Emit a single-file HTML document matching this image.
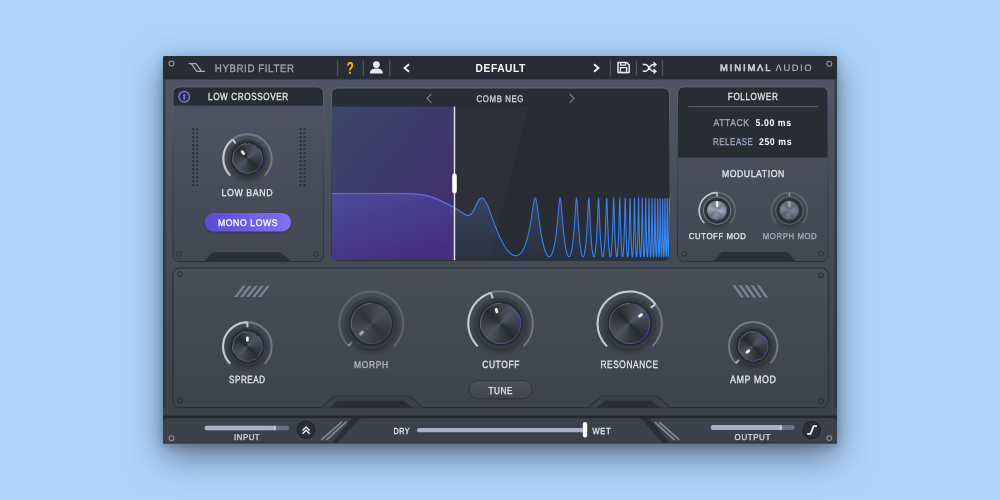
<!DOCTYPE html>
<html><head><meta charset="utf-8">
<style>
html,body{margin:0;padding:0;}
body{width:1000px;height:500px;overflow:hidden;background:#aed4fc;position:relative;font-family:"Liberation Sans",sans-serif;}
.shadow{position:absolute;left:163px;top:56px;width:674px;height:388px;border-radius:3px;box-shadow:0 12px 34px rgba(45,55,70,0.62),0 3px 8px rgba(40,50,65,0.3);}
svg{position:absolute;left:0;top:0;will-change:transform;}
.cap{position:absolute;border-radius:50%;}
text{font-family:"Liberation Sans",sans-serif;text-rendering:geometricPrecision;}
</style></head><body>
<div class="shadow"></div>
<svg width="1000" height="500" viewBox="0 0 1000 500"><defs>
<linearGradient id="chassis" gradientUnits="userSpaceOnUse" x1="0" y1="79" x2="0" y2="443">
  <stop offset="0" stop-color="#4f5566"/><stop offset="0.3" stop-color="#474f5a"/><stop offset="0.5" stop-color="#434a55"/><stop offset="1" stop-color="#3a404a"/>
</linearGradient>
<linearGradient id="tuneG" x1="0" y1="0" x2="0" y2="1"><stop offset="0" stop-color="#4c515b"/><stop offset="1" stop-color="#40454e"/></linearGradient>
<linearGradient id="edgeG" x1="0" y1="0" x2="0" y2="1"><stop offset="0" stop-color="#60667a"/><stop offset="0.35" stop-color="#424855"/><stop offset="1" stop-color="#2c3038"/></linearGradient>
<linearGradient id="panelA" x1="0" y1="0" x2="0" y2="1">
  <stop offset="0" stop-color="#4e5464"/><stop offset="1" stop-color="#414753"/>
</linearGradient>
<linearGradient id="panelB" x1="0" y1="0" x2="0" y2="1">
  <stop offset="0" stop-color="#464e5a"/><stop offset="1" stop-color="#3d434e"/>
</linearGradient>
<linearGradient id="purp" x1="0" y1="0" x2="1" y2="1">
  <stop offset="0" stop-color="#3a4668"/><stop offset="1" stop-color="#422b6f"/>
</linearGradient>
<linearGradient id="purpFill" x1="0" y1="0" x2="0.6" y2="1">
  <stop offset="0" stop-color="#4a4c9c"/><stop offset="1" stop-color="#452f7c"/>
</linearGradient>
<linearGradient id="combFill" x1="0" y1="0" x2="0" y2="1">
  <stop offset="0" stop-color="#3a4f72" stop-opacity="0.7"/><stop offset="1" stop-color="#2a3b58" stop-opacity="0.3"/>
</linearGradient>
<linearGradient id="combStroke2" gradientUnits="userSpaceOnUse" x1="0" y1="196" x2="0" y2="260"><stop offset="0" stop-color="#4a78d8"/><stop offset="1" stop-color="#2c8cff"/></linearGradient>
<linearGradient id="combStroke" gradientUnits="userSpaceOnUse" x1="332" y1="190" x2="669" y2="262">
  <stop offset="0" stop-color="#6270e4"/><stop offset="0.36" stop-color="#5c74e0"/><stop offset="0.4" stop-color="#4a7ade"/><stop offset="1" stop-color="#2a8cff"/>
</linearGradient>
<linearGradient id="btnPurple" x1="0" y1="0" x2="1" y2="0">
  <stop offset="0" stop-color="#5a4ad8"/><stop offset="1" stop-color="#8272f0"/>
</linearGradient>

<filter id="blur3" x="-50%" y="-50%" width="200%" height="200%"><feGaussianBlur stdDeviation="2.2"/></filter>
<filter id="blur1" x="-50%" y="-50%" width="200%" height="200%"><feGaussianBlur stdDeviation="0.8"/></filter>
<radialGradient id="sockBig" cx="0.5" cy="0.45" r="0.5">
  <stop offset="0.8" stop-color="#2b2f35"/><stop offset="1" stop-color="#393e46"/>
</radialGradient>
</defs><rect x="163" y="56" width="674" height="387.6" rx="2" fill="url(#chassis)"/>
<rect x="163" y="56" width="674" height="23.5" rx="1.5" fill="#282c34"/>
<rect x="163" y="79" width="2.2" height="364" fill="#30343a" opacity="0.8"/>
<rect x="834.8" y="79" width="2.2" height="364" fill="#30343a" opacity="0.8"/>
<circle cx="171.5" cy="63.6" r="2.5" fill="#282c34" stroke="#9096a0" stroke-width="1.1"/>
<circle cx="829.3" cy="63.8" r="2.5" fill="#282c34" stroke="#9096a0" stroke-width="1.1"/>
<rect x="173" y="87" width="150.5" height="174.5" rx="6" fill="url(#panelA)" stroke="url(#edgeG)" stroke-width="1"/>
<path d="M173.5 105.6 V93 a5.5 5.5 0 0 1 5.5 -5.5 H317.5 a5.5 5.5 0 0 1 5.5 5.5 V105.8 Z" fill="#282c34"/>
<path d="M204 261 L213 252.2 H280.6 L291 261 Z" fill="#2c3036"/>
<circle cx="179" cy="254" r="2.3" fill="#474c55" stroke="#30343b" stroke-width="1.1"/>
<circle cx="316.2" cy="254" r="2.3" fill="#474c55" stroke="#30343b" stroke-width="1.1"/>
<rect x="192.4" y="128.3" width="1.8" height="1.8" fill="#24282d"/>
<rect x="192.4" y="132.3" width="1.8" height="1.8" fill="#24282d"/>
<rect x="192.4" y="136.3" width="1.8" height="1.8" fill="#24282d"/>
<rect x="192.4" y="140.3" width="1.8" height="1.8" fill="#24282d"/>
<rect x="192.4" y="144.3" width="1.8" height="1.8" fill="#24282d"/>
<rect x="192.4" y="148.3" width="1.8" height="1.8" fill="#24282d"/>
<rect x="192.4" y="152.3" width="1.8" height="1.8" fill="#24282d"/>
<rect x="192.4" y="156.3" width="1.8" height="1.8" fill="#24282d"/>
<rect x="192.4" y="160.3" width="1.8" height="1.8" fill="#24282d"/>
<rect x="192.4" y="164.3" width="1.8" height="1.8" fill="#24282d"/>
<rect x="192.4" y="168.3" width="1.8" height="1.8" fill="#24282d"/>
<rect x="192.4" y="172.3" width="1.8" height="1.8" fill="#24282d"/>
<rect x="192.4" y="176.3" width="1.8" height="1.8" fill="#24282d"/>
<rect x="192.4" y="180.3" width="1.8" height="1.8" fill="#24282d"/>
<rect x="192.4" y="184.3" width="1.8" height="1.8" fill="#24282d"/>
<rect x="196.4" y="128.3" width="1.8" height="1.8" fill="#24282d"/>
<rect x="196.4" y="132.3" width="1.8" height="1.8" fill="#24282d"/>
<rect x="196.4" y="136.3" width="1.8" height="1.8" fill="#24282d"/>
<rect x="196.4" y="140.3" width="1.8" height="1.8" fill="#24282d"/>
<rect x="196.4" y="144.3" width="1.8" height="1.8" fill="#24282d"/>
<rect x="196.4" y="148.3" width="1.8" height="1.8" fill="#24282d"/>
<rect x="196.4" y="152.3" width="1.8" height="1.8" fill="#24282d"/>
<rect x="196.4" y="156.3" width="1.8" height="1.8" fill="#24282d"/>
<rect x="196.4" y="160.3" width="1.8" height="1.8" fill="#24282d"/>
<rect x="196.4" y="164.3" width="1.8" height="1.8" fill="#24282d"/>
<rect x="196.4" y="168.3" width="1.8" height="1.8" fill="#24282d"/>
<rect x="196.4" y="172.3" width="1.8" height="1.8" fill="#24282d"/>
<rect x="196.4" y="176.3" width="1.8" height="1.8" fill="#24282d"/>
<rect x="196.4" y="180.3" width="1.8" height="1.8" fill="#24282d"/>
<rect x="196.4" y="184.3" width="1.8" height="1.8" fill="#24282d"/>
<rect x="299.6" y="128.3" width="1.8" height="1.8" fill="#24282d"/>
<rect x="299.6" y="132.3" width="1.8" height="1.8" fill="#24282d"/>
<rect x="299.6" y="136.3" width="1.8" height="1.8" fill="#24282d"/>
<rect x="299.6" y="140.3" width="1.8" height="1.8" fill="#24282d"/>
<rect x="299.6" y="144.3" width="1.8" height="1.8" fill="#24282d"/>
<rect x="299.6" y="148.3" width="1.8" height="1.8" fill="#24282d"/>
<rect x="299.6" y="152.3" width="1.8" height="1.8" fill="#24282d"/>
<rect x="299.6" y="156.3" width="1.8" height="1.8" fill="#24282d"/>
<rect x="299.6" y="160.3" width="1.8" height="1.8" fill="#24282d"/>
<rect x="299.6" y="164.3" width="1.8" height="1.8" fill="#24282d"/>
<rect x="299.6" y="168.3" width="1.8" height="1.8" fill="#24282d"/>
<rect x="299.6" y="172.3" width="1.8" height="1.8" fill="#24282d"/>
<rect x="299.6" y="176.3" width="1.8" height="1.8" fill="#24282d"/>
<rect x="299.6" y="180.3" width="1.8" height="1.8" fill="#24282d"/>
<rect x="299.6" y="184.3" width="1.8" height="1.8" fill="#24282d"/>
<rect x="303.6" y="128.3" width="1.8" height="1.8" fill="#24282d"/>
<rect x="303.6" y="132.3" width="1.8" height="1.8" fill="#24282d"/>
<rect x="303.6" y="136.3" width="1.8" height="1.8" fill="#24282d"/>
<rect x="303.6" y="140.3" width="1.8" height="1.8" fill="#24282d"/>
<rect x="303.6" y="144.3" width="1.8" height="1.8" fill="#24282d"/>
<rect x="303.6" y="148.3" width="1.8" height="1.8" fill="#24282d"/>
<rect x="303.6" y="152.3" width="1.8" height="1.8" fill="#24282d"/>
<rect x="303.6" y="156.3" width="1.8" height="1.8" fill="#24282d"/>
<rect x="303.6" y="160.3" width="1.8" height="1.8" fill="#24282d"/>
<rect x="303.6" y="164.3" width="1.8" height="1.8" fill="#24282d"/>
<rect x="303.6" y="168.3" width="1.8" height="1.8" fill="#24282d"/>
<rect x="303.6" y="172.3" width="1.8" height="1.8" fill="#24282d"/>
<rect x="303.6" y="176.3" width="1.8" height="1.8" fill="#24282d"/>
<rect x="303.6" y="180.3" width="1.8" height="1.8" fill="#24282d"/>
<rect x="303.6" y="184.3" width="1.8" height="1.8" fill="#24282d"/>
<rect x="331.5" y="88" width="338" height="172.5" rx="6" fill="#282c34" stroke="url(#edgeG)" stroke-width="1"/>
<path d="M332 106.6 H454.5 V260 H338 a6 6 0 0 1 -6 -6 Z" fill="url(#purp)"/>
<path d="M454.5 106.6 H528.6 L488.5 260 H454.5 Z" fill="#ffffff" opacity="0.025"/>
<rect x="677.5" y="87" width="150.5" height="174.5" rx="6" fill="url(#panelA)" stroke="url(#edgeG)" stroke-width="1"/>
<path d="M678 157.4 V93 a5.5 5.5 0 0 1 5.5 -5.5 H822 a5.5 5.5 0 0 1 5.5 5.5 V157.4 Z" fill="#282c34"/>
<rect x="688.4" y="106" width="129.6" height="1.2" fill="#565c6a"/>
<path d="M713 261 L722 252 H787 L796 261 Z" fill="#2c3036"/>
<circle cx="684.4" cy="253.8" r="2.3" fill="#474c55" stroke="#30343b" stroke-width="1.1"/>
<circle cx="820.8" cy="253.8" r="2.3" fill="#474c55" stroke="#30343b" stroke-width="1.1"/>
<rect x="172.8" y="268" width="655.5" height="139.6" rx="7" fill="url(#panelB)" stroke="#2c3037" stroke-width="1.2"/>
<path d="M320.8 408 L334.4 396 H409.6 L423.2 408 Z" fill="#3d424a" stroke="#2c3037" stroke-width="1.2"/>
<path d="M328.8 408 L337.6 400.8 H403.6 L413.6 408 Z" fill="#2a2e34"/>
<path d="M588 408 L601.6 396 H657 L670.6 408 Z" fill="#3d424a" stroke="#2c3037" stroke-width="1.2"/>
<path d="M596 408 L604.8 400.8 H651 L661 408 Z" fill="#2a2e34"/>
<circle cx="179.8" cy="274" r="2.3" fill="#464b54" stroke="#2c3037" stroke-width="1.1"/>
<circle cx="179.8" cy="400.5" r="2.3" fill="#40454e" stroke="#2c3037" stroke-width="1.1"/>
<circle cx="820.8" cy="275.3" r="2.3" fill="#464b54" stroke="#2c3037" stroke-width="1.1"/>
<circle cx="821" cy="401" r="2.3" fill="#40454e" stroke="#2c3037" stroke-width="1.1"/>
<path d="M234.1 297 L242.9 285.8 H245.7 L236.9 297 Z" fill="#7c8596"/>
<path d="M240.15 297 L248.95 285.8 H251.75 L242.95 297 Z" fill="#7c8596"/>
<path d="M246.2 297 L255 285.8 H257.8 L249 297 Z" fill="#7c8596"/>
<path d="M252.25 297 L261.05 285.8 H263.85 L255.05 297 Z" fill="#7c8596"/>
<path d="M258.3 297 L267.1 285.8 H269.9 L261.1 297 Z" fill="#7c8596"/>
<path d="M732.6 285.2 L741.2 297.4 H744 L735.4 285.2 Z" fill="#7c8596"/>
<path d="M738.65 285.2 L747.25 297.4 H750.05 L741.45 285.2 Z" fill="#7c8596"/>
<path d="M744.7 285.2 L753.3 297.4 H756.1 L747.5 285.2 Z" fill="#7c8596"/>
<path d="M750.75 285.2 L759.35 297.4 H762.15 L753.55 285.2 Z" fill="#7c8596"/>
<path d="M756.8 285.2 L765.4 297.4 H768.2 L759.6 285.2 Z" fill="#7c8596"/>
<rect x="163" y="408" width="674" height="10" fill="#3b424c"/>
<rect x="163" y="415.6" width="674" height="2.6" fill="#23272c"/>
<rect x="163" y="418" width="674" height="25.6" fill="#2a2e34"/>
<path d="M163 442.4 V423 a5 5 0 0 1 5 -5 H349.5 Q352.5 418 351 420 L332 442.4 Z" fill="#3a414b"/>
<path d="M337.6 442.4 L358.6 420 Q360.5 418 363.5 418 H637.5 Q640.5 418 642.4 420 L662.2 442.4 Z" fill="#3a414b"/>
<path d="M669.2 442.4 L650.6 420 Q649 418 652 418 H832 a5 5 0 0 1 5 5 V442.4 Z" fill="#3a414b"/>
<path d="M321.8 439.5 L341.5 422.2" stroke="#7e8699" stroke-width="1.7" stroke-linecap="round"/>
<path d="M326.9 439.5 L345.9 422.2" stroke="#7e8699" stroke-width="1.7" stroke-linecap="round"/>
<path d="M655.2 422.5 L674.1 439.6" stroke="#7e8699" stroke-width="1.7" stroke-linecap="round"/>
<path d="M659.7 422.5 L679 439.6" stroke="#7e8699" stroke-width="1.7" stroke-linecap="round"/>
<circle cx="171.6" cy="438.2" r="2.4" fill="#3a414b" stroke="#8a909a" stroke-width="1.1"/>
<circle cx="829.3" cy="438.1" r="2.4" fill="#3a414b" stroke="#8a909a" stroke-width="1.1"/>
<rect x="204.6" y="425.7" width="84.6" height="4.6" rx="2.3" fill="#687082"/>
<rect x="204.6" y="425.7" width="69" height="4.6" rx="2.3" fill="#a9b0c4"/>
<rect x="273.4" y="425.7" width="2.4" height="4.6" fill="#c4cad8"/>
<rect x="710.8" y="425.1" width="84" height="5" rx="2.5" fill="#687082"/>
<rect x="710.8" y="425.1" width="69.5" height="5" rx="2.5" fill="#a9b0c4"/>
<rect x="779.5" y="425.1" width="2.4" height="5" fill="#c4cad8"/>
<rect x="416.9" y="427.9" width="168" height="4.4" rx="2.2" fill="#a9b0c8"/>
<rect x="582.8" y="421.9" width="4.4" height="15.6" rx="2.2" fill="#ffffff"/>
<circle cx="306" cy="429.8" r="8.6" fill="#2a2e35" stroke="#1f2328" stroke-width="1.2"/>
<path d="M302.5 430.4 L306.1 426.9 L309.7 430.4 M302.5 433.8 L306.1 430.3 L309.7 433.8" fill="none" stroke="#f0f2f5" stroke-width="1.45"/>
<circle cx="811.7" cy="430" r="8.6" fill="#2a2e35" stroke="#1f2328" stroke-width="1.2"/>
<path d="M807.2 433.9 H810.6 L813.6 426.1 H817" fill="none" stroke="#f0f2f5" stroke-width="1.8"/>
<rect x="469" y="380.6" width="63" height="18.2" rx="9.1" fill="url(#tuneG)" stroke="#2e3239" stroke-width="1"/>
<rect x="204.6" y="214.2" width="86.4" height="18.4" rx="9.2" fill="#2a2e36" opacity="0.6" filter="url(#blur1)"/>
<rect x="204.6" y="213" width="86.4" height="18.4" rx="9.2" fill="url(#btnPurple)"/>
<circle cx="184.2" cy="96.8" r="5.3" fill="none" stroke="#8272f0" stroke-width="1.5"/>
<rect x="183.25" y="93.9" width="1.9" height="5.8" rx="0.9" fill="#8272f0"/>
<rect x="336.9" y="60.2" width="1.2" height="15.8" fill="#50555f"/>
<rect x="362.7" y="60.2" width="1.2" height="15.8" fill="#50555f"/>
<rect x="389.1" y="60.2" width="1.2" height="15.8" fill="#50555f"/>
<rect x="609.9" y="60.2" width="1.2" height="15.8" fill="#50555f"/>
<rect x="635.8" y="60.2" width="1.2" height="15.8" fill="#50555f"/>
<rect x="661.9" y="60.2" width="1.2" height="15.8" fill="#50555f"/>
<path d="M188.7 63.7 H196 L201.6 71.3 H205 M191.2 63.7 L196.8 71.3 H201.6" fill="none" stroke="#a6acbc" stroke-width="1.25" stroke-linejoin="round"/>
<circle cx="376.4" cy="64.6" r="3.4" fill="#e6e8ec"/>
<path d="M369.8 73.4 C370.2 69.6 372.6 68.4 376.4 68.4 C380.2 68.4 382.6 69.6 383 73.4 Z" fill="#e6e8ec"/>
<path d="M409 64.2 L404.5 68 L409 71.8" fill="none" stroke="#f2f3f6" stroke-width="1.8"/>
<path d="M594 64.2 L598.5 68 L594 71.8" fill="none" stroke="#f2f3f6" stroke-width="1.8"/>
<path d="M431.5 93.8 L427 98.3 L431.5 102.8" fill="none" stroke="#80868f" stroke-width="1.1"/>
<path d="M569.5 93.8 L574 98.3 L569.5 102.8" fill="none" stroke="#80868f" stroke-width="1.1"/>
<path d="M618 62.4 H626.5 L629.2 65 V72.6 H618 Z" fill="none" stroke="#e6e8ec" stroke-width="1.5" stroke-linejoin="round"/>
<rect x="620.4" y="67.6" width="6.2" height="5" fill="none" stroke="#e6e8ec" stroke-width="1.3"/>
<path d="M620.6 62.6 V65.2 H625.6 V62.6" fill="none" stroke="#e6e8ec" stroke-width="1.2"/>
<path d="M642.8 64.5 H645.5 C648.5 64.5 650 71.3 653 71.3 H655.5 M642.8 71.3 H645.5 C648.5 71.3 650 64.5 653 64.5 H655.5" fill="none" stroke="#e6e8ec" stroke-width="1.4"/>
<path d="M653.5 62.3 L656 64.5 L653.5 66.7 M653.5 69.1 L656 71.3 L653.5 73.5" fill="none" stroke="#e6e8ec" stroke-width="1.4"/>
<path d="M332 193.5 L332.1 193.5 L332.2 193.5 L332.3 193.5 L332.4 193.5 L332.5 193.5 L332.6 193.5 L332.7 193.5 L332.8 193.5 L332.9 193.5 L333 193.5 L333.1 193.5 L333.2 193.5 L333.3 193.5 L333.4 193.5 L333.5 193.5 L333.6 193.5 L333.7 193.5 L333.8 193.5 L333.9 193.5 L334 193.5 L334.1 193.5 L334.2 193.5 L334.3 193.5 L334.4 193.5 L334.5 193.5 L334.6 193.5 L334.7 193.5 L334.8 193.5 L334.9 193.5 L335 193.5 L335.1 193.5 L335.2 193.5 L335.3 193.5 L335.4 193.5 L335.5 193.5 L335.6 193.5 L335.7 193.5 L335.8 193.5 L335.9 193.5 L336 193.5 L336.1 193.5 L336.2 193.5 L336.3 193.5 L336.4 193.5 L336.5 193.5 L336.6 193.5 L336.7 193.5 L336.8 193.5 L336.9 193.5 L337 193.5 L337.1 193.5 L337.2 193.5 L337.3 193.5 L337.4 193.5 L337.5 193.5 L337.6 193.5 L337.7 193.5 L337.8 193.5 L337.9 193.5 L338 193.5 L338.1 193.5 L338.2 193.5 L338.3 193.5 L338.4 193.5 L338.5 193.5 L338.6 193.5 L338.7 193.5 L338.8 193.5 L338.9 193.5 L339 193.5 L339.1 193.5 L339.2 193.5 L339.3 193.5 L339.4 193.5 L339.5 193.5 L339.6 193.5 L339.7 193.5 L339.8 193.5 L339.9 193.5 L340 193.5 L340.1 193.5 L340.2 193.5 L340.3 193.5 L340.4 193.5 L340.5 193.5 L340.6 193.5 L340.7 193.5 L340.8 193.5 L340.9 193.5 L341 193.5 L341.1 193.5 L341.2 193.5 L341.3 193.5 L341.4 193.5 L341.5 193.5 L341.6 193.5 L341.7 193.5 L341.8 193.5 L341.9 193.5 L342 193.5 L342.1 193.5 L342.2 193.5 L342.3 193.5 L342.4 193.5 L342.5 193.5 L342.6 193.5 L342.7 193.5 L342.8 193.5 L342.9 193.5 L343 193.5 L343.1 193.5 L343.2 193.5 L343.3 193.5 L343.4 193.5 L343.5 193.5 L343.6 193.5 L343.7 193.5 L343.8 193.5 L343.9 193.5 L344 193.5 L344.1 193.5 L344.2 193.5 L344.3 193.5 L344.4 193.5 L344.5 193.5 L344.6 193.5 L344.7 193.5 L344.8 193.5 L344.9 193.5 L345 193.5 L345.1 193.5 L345.2 193.5 L345.3 193.5 L345.4 193.5 L345.5 193.5 L345.6 193.5 L345.7 193.5 L345.8 193.5 L345.9 193.5 L346 193.5 L346.1 193.5 L346.2 193.5 L346.3 193.5 L346.4 193.5 L346.5 193.5 L346.6 193.5 L346.7 193.5 L346.8 193.5 L346.9 193.5 L347 193.5 L347.1 193.5 L347.2 193.5 L347.3 193.5 L347.4 193.5 L347.5 193.5 L347.6 193.5 L347.7 193.5 L347.8 193.5 L347.9 193.5 L348 193.5 L348.1 193.5 L348.2 193.5 L348.3 193.5 L348.4 193.5 L348.5 193.5 L348.6 193.5 L348.7 193.5 L348.8 193.5 L348.9 193.5 L349 193.5 L349.1 193.5 L349.2 193.5 L349.3 193.5 L349.4 193.5 L349.5 193.5 L349.6 193.5 L349.7 193.5 L349.8 193.5 L349.9 193.5 L350 193.5 L350.1 193.5 L350.2 193.5 L350.3 193.5 L350.4 193.5 L350.5 193.5 L350.6 193.5 L350.7 193.5 L350.8 193.5 L350.9 193.5 L351 193.5 L351.1 193.5 L351.2 193.5 L351.3 193.5 L351.4 193.5 L351.5 193.5 L351.6 193.5 L351.7 193.5 L351.8 193.5 L351.9 193.5 L352 193.5 L352.1 193.5 L352.2 193.5 L352.3 193.5 L352.4 193.5 L352.5 193.5 L352.6 193.5 L352.7 193.5 L352.8 193.5 L352.9 193.5 L353 193.5 L353.1 193.5 L353.2 193.5 L353.3 193.5 L353.4 193.5 L353.5 193.5 L353.6 193.5 L353.7 193.5 L353.8 193.5 L353.9 193.5 L354 193.5 L354.1 193.5 L354.2 193.5 L354.3 193.5 L354.4 193.5 L354.5 193.5 L354.6 193.5 L354.7 193.5 L354.8 193.5 L354.9 193.5 L355 193.5 L355.1 193.5 L355.2 193.5 L355.3 193.5 L355.4 193.5 L355.5 193.5 L355.6 193.5 L355.7 193.5 L355.8 193.5 L355.9 193.5 L356 193.5 L356.1 193.5 L356.2 193.5 L356.3 193.5 L356.4 193.5 L356.5 193.5 L356.6 193.5 L356.7 193.5 L356.8 193.5 L356.9 193.5 L357 193.5 L357.1 193.5 L357.2 193.5 L357.3 193.5 L357.4 193.5 L357.5 193.5 L357.6 193.5 L357.7 193.5 L357.8 193.5 L357.9 193.5 L358 193.5 L358.1 193.5 L358.2 193.5 L358.3 193.5 L358.4 193.5 L358.5 193.5 L358.6 193.5 L358.7 193.5 L358.8 193.5 L358.9 193.5 L359 193.5 L359.1 193.5 L359.2 193.5 L359.3 193.5 L359.4 193.5 L359.5 193.5 L359.6 193.5 L359.7 193.5 L359.8 193.5 L359.9 193.5 L360 193.49 L360.1 193.49 L360.2 193.49 L360.3 193.49 L360.4 193.49 L360.5 193.49 L360.6 193.49 L360.7 193.49 L360.8 193.49 L360.9 193.49 L361 193.49 L361.1 193.49 L361.2 193.49 L361.3 193.49 L361.4 193.49 L361.5 193.49 L361.6 193.49 L361.7 193.49 L361.8 193.49 L361.9 193.49 L362 193.49 L362.1 193.49 L362.2 193.49 L362.3 193.49 L362.4 193.49 L362.5 193.49 L362.6 193.49 L362.7 193.49 L362.8 193.49 L362.9 193.49 L363 193.49 L363.1 193.49 L363.2 193.49 L363.3 193.49 L363.4 193.49 L363.5 193.49 L363.6 193.49 L363.7 193.49 L363.8 193.49 L363.9 193.49 L364 193.49 L364.1 193.49 L364.2 193.49 L364.3 193.49 L364.4 193.49 L364.5 193.49 L364.6 193.49 L364.7 193.49 L364.8 193.49 L364.9 193.49 L365 193.49 L365.1 193.49 L365.2 193.49 L365.3 193.49 L365.4 193.49 L365.5 193.49 L365.6 193.49 L365.7 193.49 L365.8 193.49 L365.9 193.49 L366 193.49 L366.1 193.49 L366.2 193.49 L366.3 193.49 L366.4 193.49 L366.5 193.49 L366.6 193.49 L366.7 193.49 L366.8 193.49 L366.9 193.49 L367 193.49 L367.1 193.49 L367.2 193.49 L367.3 193.49 L367.4 193.49 L367.5 193.49 L367.6 193.49 L367.7 193.49 L367.8 193.5 L367.9 193.5 L368 193.5 L368.1 193.5 L368.2 193.5 L368.3 193.5 L368.4 193.5 L368.5 193.5 L368.6 193.5 L368.7 193.5 L368.8 193.5 L368.9 193.5 L369 193.5 L369.1 193.5 L369.2 193.5 L369.3 193.5 L369.4 193.5 L369.5 193.5 L369.6 193.5 L369.7 193.5 L369.8 193.5 L369.9 193.5 L370 193.5 L370.1 193.5 L370.2 193.5 L370.3 193.5 L370.4 193.5 L370.5 193.5 L370.6 193.5 L370.7 193.5 L370.8 193.5 L370.9 193.5 L371 193.5 L371.1 193.5 L371.2 193.5 L371.3 193.5 L371.4 193.5 L371.5 193.5 L371.6 193.5 L371.7 193.5 L371.8 193.5 L371.9 193.5 L372 193.5 L372.1 193.5 L372.2 193.5 L372.3 193.5 L372.4 193.5 L372.5 193.5 L372.6 193.5 L372.7 193.5 L372.8 193.5 L372.9 193.5 L373 193.5 L373.1 193.5 L373.2 193.5 L373.3 193.5 L373.4 193.5 L373.5 193.5 L373.6 193.5 L373.7 193.5 L373.8 193.5 L373.9 193.5 L374 193.5 L374.1 193.5 L374.2 193.5 L374.3 193.5 L374.4 193.5 L374.5 193.5 L374.6 193.5 L374.7 193.5 L374.8 193.5 L374.9 193.5 L375 193.5 L375.1 193.5 L375.2 193.5 L375.3 193.5 L375.4 193.5 L375.5 193.5 L375.6 193.5 L375.7 193.5 L375.8 193.5 L375.9 193.5 L376 193.5 L376.1 193.5 L376.2 193.5 L376.3 193.5 L376.4 193.5 L376.5 193.5 L376.6 193.5 L376.7 193.5 L376.8 193.5 L376.9 193.5 L377 193.5 L377.1 193.5 L377.2 193.5 L377.3 193.5 L377.4 193.5 L377.5 193.5 L377.6 193.5 L377.7 193.5 L377.8 193.5 L377.9 193.5 L378 193.5 L378.1 193.5 L378.2 193.5 L378.3 193.5 L378.4 193.5 L378.5 193.5 L378.6 193.5 L378.7 193.5 L378.8 193.5 L378.9 193.5 L379 193.5 L379.1 193.5 L379.2 193.5 L379.3 193.5 L379.4 193.5 L379.5 193.5 L379.6 193.5 L379.7 193.5 L379.8 193.5 L379.9 193.5 L380 193.5 L380.1 193.5 L380.2 193.5 L380.3 193.5 L380.4 193.5 L380.5 193.5 L380.6 193.5 L380.7 193.5 L380.8 193.5 L380.9 193.5 L381 193.5 L381.1 193.5 L381.2 193.5 L381.3 193.5 L381.4 193.5 L381.5 193.5 L381.6 193.5 L381.7 193.5 L381.8 193.5 L381.9 193.5 L382 193.5 L382.1 193.5 L382.2 193.5 L382.3 193.5 L382.4 193.5 L382.5 193.5 L382.6 193.5 L382.7 193.5 L382.8 193.5 L382.9 193.5 L383 193.5 L383.1 193.5 L383.2 193.5 L383.3 193.5 L383.4 193.5 L383.5 193.5 L383.6 193.5 L383.7 193.5 L383.8 193.5 L383.9 193.5 L384 193.5 L384.1 193.5 L384.2 193.5 L384.3 193.5 L384.4 193.5 L384.5 193.5 L384.6 193.5 L384.7 193.5 L384.8 193.5 L384.9 193.5 L385 193.5 L385.1 193.5 L385.2 193.5 L385.3 193.5 L385.4 193.5 L385.5 193.5 L385.6 193.5 L385.7 193.5 L385.8 193.5 L385.9 193.5 L386 193.5 L386.1 193.5 L386.2 193.5 L386.3 193.5 L386.4 193.5 L386.5 193.5 L386.6 193.5 L386.7 193.5 L386.8 193.5 L386.9 193.5 L387 193.5 L387.1 193.5 L387.2 193.5 L387.3 193.5 L387.4 193.5 L387.5 193.5 L387.6 193.5 L387.7 193.5 L387.8 193.5 L387.9 193.5 L388 193.5 L388.1 193.5 L388.2 193.5 L388.3 193.5 L388.4 193.5 L388.5 193.5 L388.6 193.5 L388.7 193.5 L388.8 193.5 L388.9 193.5 L389 193.5 L389.1 193.5 L389.2 193.5 L389.3 193.5 L389.4 193.5 L389.5 193.5 L389.6 193.5 L389.7 193.5 L389.8 193.5 L389.9 193.5 L390 193.5 L390.1 193.5 L390.2 193.5 L390.3 193.5 L390.4 193.5 L390.5 193.5 L390.6 193.5 L390.7 193.5 L390.8 193.5 L390.9 193.5 L391 193.5 L391.1 193.5 L391.2 193.5 L391.3 193.5 L391.4 193.5 L391.5 193.5 L391.6 193.5 L391.7 193.5 L391.8 193.5 L391.9 193.5 L392 193.51 L392.1 193.51 L392.2 193.51 L392.3 193.51 L392.4 193.51 L392.5 193.51 L392.6 193.51 L392.7 193.51 L392.8 193.51 L392.9 193.51 L393 193.51 L393.1 193.51 L393.2 193.51 L393.3 193.51 L393.4 193.51 L393.5 193.51 L393.6 193.51 L393.7 193.51 L393.8 193.51 L393.9 193.51 L394 193.51 L394.1 193.51 L394.2 193.51 L394.3 193.51 L394.4 193.51 L394.5 193.51 L394.6 193.51 L394.7 193.51 L394.8 193.51 L394.9 193.51 L395 193.51 L395.1 193.52 L395.2 193.52 L395.3 193.52 L395.4 193.52 L395.5 193.52 L395.6 193.52 L395.7 193.52 L395.8 193.52 L395.9 193.52 L396 193.52 L396.1 193.52 L396.2 193.52 L396.3 193.52 L396.4 193.52 L396.5 193.52 L396.6 193.52 L396.7 193.52 L396.8 193.52 L396.9 193.52 L397 193.53 L397.1 193.53 L397.2 193.53 L397.3 193.53 L397.4 193.53 L397.5 193.53 L397.6 193.53 L397.7 193.53 L397.8 193.53 L397.9 193.53 L398 193.53 L398.1 193.53 L398.2 193.53 L398.3 193.53 L398.4 193.54 L398.5 193.54 L398.6 193.54 L398.7 193.54 L398.8 193.54 L398.9 193.54 L399 193.54 L399.1 193.54 L399.2 193.54 L399.3 193.54 L399.4 193.54 L399.5 193.55 L399.6 193.55 L399.7 193.55 L399.8 193.55 L399.9 193.55 L400 193.55 L400.1 193.55 L400.2 193.55 L400.3 193.55 L400.4 193.55 L400.5 193.56 L400.6 193.56 L400.7 193.56 L400.8 193.56 L400.9 193.56 L401 193.56 L401.1 193.56 L401.2 193.56 L401.3 193.56 L401.4 193.56 L401.5 193.57 L401.6 193.57 L401.7 193.57 L401.8 193.57 L401.9 193.57 L402 193.57 L402.1 193.57 L402.2 193.57 L402.3 193.58 L402.4 193.58 L402.5 193.58 L402.6 193.58 L402.7 193.58 L402.8 193.58 L402.9 193.58 L403 193.59 L403.1 193.59 L403.2 193.59 L403.3 193.59 L403.4 193.59 L403.5 193.59 L403.6 193.6 L403.7 193.6 L403.8 193.6 L403.9 193.6 L404 193.6 L404.1 193.6 L404.2 193.61 L404.3 193.61 L404.4 193.61 L404.5 193.61 L404.6 193.61 L404.7 193.62 L404.8 193.62 L404.9 193.62 L405 193.62 L405.1 193.62 L405.2 193.63 L405.3 193.63 L405.4 193.63 L405.5 193.63 L405.6 193.64 L405.7 193.64 L405.8 193.64 L405.9 193.64 L406 193.65 L406.1 193.65 L406.2 193.65 L406.3 193.65 L406.4 193.66 L406.5 193.66 L406.6 193.66 L406.7 193.67 L406.8 193.67 L406.9 193.67 L407 193.68 L407.1 193.68 L407.2 193.68 L407.3 193.68 L407.4 193.69 L407.5 193.69 L407.6 193.7 L407.7 193.7 L407.8 193.7 L407.9 193.71 L408 193.71 L408.1 193.71 L408.2 193.72 L408.3 193.72 L408.4 193.73 L408.5 193.73 L408.6 193.73 L408.7 193.74 L408.8 193.74 L408.9 193.75 L409 193.75 L409.1 193.76 L409.2 193.76 L409.3 193.77 L409.4 193.77 L409.5 193.77 L409.6 193.78 L409.7 193.78 L409.8 193.79 L409.9 193.79 L410 193.8 L410.1 193.81 L410.2 193.81 L410.3 193.82 L410.4 193.82 L410.5 193.83 L410.6 193.83 L410.7 193.84 L410.8 193.84 L410.9 193.85 L411 193.85 L411.1 193.86 L411.2 193.86 L411.3 193.87 L411.4 193.87 L411.5 193.88 L411.6 193.89 L411.7 193.89 L411.8 193.9 L411.9 193.9 L412 193.91 L412.1 193.91 L412.2 193.92 L412.3 193.92 L412.4 193.93 L412.5 193.94 L412.6 193.94 L412.7 193.95 L412.8 193.95 L412.9 193.96 L413 193.96 L413.1 193.97 L413.2 193.98 L413.3 193.98 L413.4 193.99 L413.5 194 L413.6 194 L413.7 194.01 L413.8 194.01 L413.9 194.02 L414 194.03 L414.1 194.03 L414.2 194.04 L414.3 194.05 L414.4 194.05 L414.5 194.06 L414.6 194.07 L414.7 194.08 L414.8 194.08 L414.9 194.09 L415 194.1 L415.1 194.1 L415.2 194.11 L415.3 194.12 L415.4 194.13 L415.5 194.13 L415.6 194.14 L415.7 194.15 L415.8 194.16 L415.9 194.17 L416 194.17 L416.1 194.18 L416.2 194.19 L416.3 194.2 L416.4 194.21 L416.5 194.22 L416.6 194.23 L416.7 194.23 L416.8 194.24 L416.9 194.25 L417 194.26 L417.1 194.27 L417.2 194.28 L417.3 194.29 L417.4 194.3 L417.5 194.31 L417.6 194.32 L417.7 194.33 L417.8 194.34 L417.9 194.35 L418 194.36 L418.1 194.37 L418.2 194.38 L418.3 194.39 L418.4 194.4 L418.5 194.42 L418.6 194.43 L418.7 194.44 L418.8 194.45 L418.9 194.46 L419 194.47 L419.1 194.48 L419.2 194.5 L419.3 194.51 L419.4 194.52 L419.5 194.53 L419.6 194.55 L419.7 194.56 L419.8 194.57 L419.9 194.59 L420 194.6 L420.1 194.61 L420.2 194.63 L420.3 194.64 L420.4 194.65 L420.5 194.67 L420.6 194.68 L420.7 194.7 L420.8 194.71 L420.9 194.72 L421 194.74 L421.1 194.75 L421.2 194.76 L421.3 194.78 L421.4 194.79 L421.5 194.81 L421.6 194.82 L421.7 194.83 L421.8 194.85 L421.9 194.86 L422 194.88 L422.1 194.89 L422.2 194.91 L422.3 194.92 L422.4 194.94 L422.5 194.95 L422.6 194.97 L422.7 194.98 L422.8 195 L422.9 195.01 L423 195.03 L423.1 195.04 L423.2 195.06 L423.3 195.07 L423.4 195.09 L423.5 195.1 L423.6 195.12 L423.7 195.14 L423.8 195.15 L423.9 195.17 L424 195.18 L424.1 195.2 L424.2 195.22 L424.3 195.23 L424.4 195.25 L424.5 195.27 L424.6 195.29 L424.7 195.3 L424.8 195.32 L424.9 195.34 L425 195.36 L425.1 195.37 L425.2 195.39 L425.3 195.41 L425.4 195.43 L425.5 195.45 L425.6 195.47 L425.7 195.49 L425.8 195.5 L425.9 195.52 L426 195.54 L426.1 195.56 L426.2 195.58 L426.3 195.6 L426.4 195.62 L426.5 195.64 L426.6 195.66 L426.7 195.68 L426.8 195.71 L426.9 195.73 L427 195.75 L427.1 195.77 L427.2 195.79 L427.3 195.81 L427.4 195.84 L427.5 195.86 L427.6 195.88 L427.7 195.9 L427.8 195.93 L427.9 195.95 L428 195.97 L428.1 196 L428.2 196.02 L428.3 196.05 L428.4 196.07 L428.5 196.1 L428.6 196.12 L428.7 196.15 L428.8 196.17 L428.9 196.2 L429 196.22 L429.1 196.25 L429.2 196.28 L429.3 196.3 L429.4 196.33 L429.5 196.36 L429.6 196.39 L429.7 196.41 L429.8 196.44 L429.9 196.47 L430 196.5 L430.1 196.53 L430.2 196.56 L430.3 196.59 L430.4 196.62 L430.5 196.65 L430.6 196.68 L430.7 196.71 L430.8 196.74 L430.9 196.77 L431 196.8 L431.1 196.84 L431.2 196.87 L431.3 196.9 L431.4 196.93 L431.5 196.97 L431.6 197 L431.7 197.03 L431.8 197.07 L431.9 197.1 L432 197.13 L432.1 197.17 L432.2 197.2 L432.3 197.24 L432.4 197.27 L432.5 197.31 L432.6 197.34 L432.7 197.38 L432.8 197.42 L432.9 197.45 L433 197.49 L433.1 197.52 L433.2 197.56 L433.3 197.6 L433.4 197.64 L433.5 197.67 L433.6 197.71 L433.7 197.75 L433.8 197.79 L433.9 197.82 L434 197.86 L434.1 197.9 L434.2 197.94 L434.3 197.98 L434.4 198.02 L434.5 198.06 L434.6 198.1 L434.7 198.14 L434.8 198.18 L434.9 198.22 L435 198.26 L435.1 198.3 L435.2 198.34 L435.3 198.38 L435.4 198.42 L435.5 198.46 L435.6 198.5 L435.7 198.54 L435.8 198.58 L435.9 198.62 L436 198.66 L436.1 198.71 L436.2 198.75 L436.3 198.79 L436.4 198.83 L436.5 198.87 L436.6 198.92 L436.7 198.96 L436.8 199 L436.9 199.04 L437 199.09 L437.1 199.13 L437.2 199.17 L437.3 199.21 L437.4 199.26 L437.5 199.3 L437.6 199.34 L437.7 199.39 L437.8 199.43 L437.9 199.47 L438 199.52 L438.1 199.56 L438.2 199.6 L438.3 199.65 L438.4 199.69 L438.5 199.74 L438.6 199.78 L438.7 199.82 L438.8 199.87 L438.9 199.91 L439 199.96 L439.1 200 L439.2 200.04 L439.3 200.09 L439.4 200.13 L439.5 200.18 L439.6 200.22 L439.7 200.27 L439.8 200.31 L439.9 200.36 L440 200.4 L440.1 200.44 L440.2 200.49 L440.3 200.53 L440.4 200.58 L440.5 200.63 L440.6 200.67 L440.7 200.72 L440.8 200.76 L440.9 200.81 L441 200.86 L441.1 200.9 L441.2 200.95 L441.3 201 L441.4 201.04 L441.5 201.09 L441.6 201.14 L441.7 201.19 L441.8 201.23 L441.9 201.28 L442 201.33 L442.1 201.38 L442.2 201.43 L442.3 201.48 L442.4 201.53 L442.5 201.57 L442.6 201.62 L442.7 201.67 L442.8 201.72 L442.9 201.77 L443 201.82 L443.1 201.87 L443.2 201.92 L443.3 201.97 L443.4 202.02 L443.5 202.07 L443.6 202.12 L443.7 202.17 L443.8 202.22 L443.9 202.27 L444 202.32 L444.1 202.37 L444.2 202.43 L444.3 202.48 L444.4 202.53 L444.5 202.58 L444.6 202.63 L444.7 202.68 L444.8 202.73 L444.9 202.78 L445 202.84 L445.1 202.89 L445.2 202.94 L445.3 202.99 L445.4 203.04 L445.5 203.09 L445.6 203.15 L445.7 203.2 L445.8 203.25 L445.9 203.3 L446 203.35 L446.1 203.4 L446.2 203.46 L446.3 203.51 L446.4 203.56 L446.5 203.61 L446.6 203.66 L446.7 203.71 L446.8 203.77 L446.9 203.82 L447 203.87 L447.1 203.92 L447.2 203.97 L447.3 204.03 L447.4 204.08 L447.5 204.13 L447.6 204.18 L447.7 204.23 L447.8 204.28 L447.9 204.34 L448 204.39 L448.1 204.44 L448.2 204.49 L448.3 204.54 L448.4 204.59 L448.5 204.64 L448.6 204.69 L448.7 204.75 L448.8 204.8 L448.9 204.85 L449 204.9 L449.1 204.95 L449.2 205 L449.3 205.05 L449.4 205.1 L449.5 205.15 L449.6 205.2 L449.7 205.25 L449.8 205.3 L449.9 205.35 L450 205.4 L450.1 205.45 L450.2 205.5 L450.3 205.55 L450.4 205.59 L450.5 205.64 L450.6 205.69 L450.7 205.74 L450.8 205.78 L450.9 205.83 L451 205.87 L451.1 205.92 L451.2 205.97 L451.3 206.01 L451.4 206.06 L451.5 206.1 L451.6 206.15 L451.7 206.19 L451.8 206.24 L451.9 206.28 L452 206.33 L452.1 206.37 L452.2 206.42 L452.3 206.46 L452.4 206.51 L452.5 206.56 L452.6 206.6 L452.7 206.65 L452.8 206.7 L452.9 206.75 L453 206.8 L453.1 206.84 L453.2 206.89 L453.3 206.94 L453.4 206.99 L453.5 207.05 L453.6 207.1 L453.7 207.15 L453.8 207.2 L453.9 207.26 L454 207.31 L454.1 207.37 L454.2 207.42 L454.3 207.48 L454.4 207.54 L454.5 260 L332 260 Z" fill="url(#purpFill)"/>
<path d="M454.5 260 L454.5 207.6 L454.6 207.66 L454.7 207.72 L454.8 207.78 L454.9 207.85 L455 207.91 L455.1 207.97 L455.2 208.04 L455.3 208.1 L455.4 208.17 L455.5 208.24 L455.6 208.3 L455.7 208.37 L455.8 208.44 L455.9 208.51 L456 208.58 L456.1 208.65 L456.2 208.72 L456.3 208.79 L456.4 208.86 L456.5 208.93 L456.6 209 L456.7 209.07 L456.8 209.14 L456.9 209.21 L457 209.29 L457.1 209.36 L457.2 209.43 L457.3 209.5 L457.4 209.58 L457.5 209.65 L457.6 209.72 L457.7 209.79 L457.8 209.87 L457.9 209.94 L458 210.01 L458.1 210.08 L458.2 210.16 L458.3 210.23 L458.4 210.3 L458.5 210.37 L458.6 210.44 L458.7 210.51 L458.8 210.58 L458.9 210.65 L459 210.72 L459.1 210.79 L459.2 210.86 L459.3 210.93 L459.4 211 L459.5 211.07 L459.6 211.14 L459.7 211.2 L459.8 211.27 L459.9 211.33 L460 211.4 L460.1 211.46 L460.2 211.53 L460.3 211.59 L460.4 211.66 L460.5 211.72 L460.6 211.79 L460.7 211.85 L460.8 211.92 L460.9 211.98 L461 212.04 L461.1 212.11 L461.2 212.17 L461.3 212.24 L461.4 212.3 L461.5 212.36 L461.6 212.43 L461.7 212.49 L461.8 212.55 L461.9 212.61 L462 212.68 L462.1 212.74 L462.2 212.8 L462.3 212.86 L462.4 212.92 L462.5 212.98 L462.6 213.05 L462.7 213.11 L462.8 213.17 L462.9 213.23 L463 213.29 L463.1 213.35 L463.2 213.4 L463.3 213.46 L463.4 213.52 L463.5 213.58 L463.6 213.64 L463.7 213.69 L463.8 213.75 L463.9 213.81 L464 213.86 L464.1 213.92 L464.2 213.97 L464.3 214.03 L464.4 214.08 L464.5 214.14 L464.6 214.19 L464.7 214.24 L464.8 214.3 L464.9 214.35 L465 214.4 L465.1 214.45 L465.2 214.5 L465.3 214.56 L465.4 214.61 L465.5 214.66 L465.6 214.71 L465.7 214.77 L465.8 214.82 L465.9 214.87 L466 214.92 L466.1 214.97 L466.2 215.02 L466.3 215.07 L466.4 215.11 L466.5 215.15 L466.6 215.2 L466.7 215.24 L466.8 215.27 L466.9 215.31 L467 215.34 L467.1 215.37 L467.2 215.4 L467.3 215.43 L467.4 215.45 L467.5 215.47 L467.6 215.48 L467.7 215.49 L467.8 215.5 L467.9 215.5 L468 215.5 L468.1 215.5 L468.2 215.49 L468.3 215.48 L468.4 215.47 L468.5 215.46 L468.6 215.45 L468.7 215.43 L468.8 215.41 L468.9 215.39 L469 215.37 L469.1 215.34 L469.2 215.32 L469.3 215.28 L469.4 215.25 L469.5 215.21 L469.6 215.17 L469.7 215.13 L469.8 215.08 L469.9 215.03 L470 214.97 L470.1 214.92 L470.2 214.85 L470.3 214.79 L470.4 214.72 L470.5 214.64 L470.6 214.56 L470.7 214.48 L470.8 214.39 L470.9 214.3 L471 214.2 L471.1 214.1 L471.2 213.99 L471.3 213.87 L471.4 213.75 L471.5 213.63 L471.6 213.5 L471.7 213.36 L471.8 213.22 L471.9 213.08 L472 212.93 L472.1 212.78 L472.2 212.63 L472.3 212.47 L472.4 212.31 L472.5 212.14 L472.6 211.98 L472.7 211.81 L472.8 211.64 L472.9 211.46 L473 211.29 L473.1 211.11 L473.2 210.94 L473.3 210.76 L473.4 210.58 L473.5 210.4 L473.6 210.22 L473.7 210.04 L473.8 209.86 L473.9 209.68 L474 209.5 L474.1 209.32 L474.2 209.14 L474.3 208.95 L474.4 208.76 L474.5 208.57 L474.6 208.37 L474.7 208.18 L474.8 207.98 L474.9 207.78 L475 207.57 L475.1 207.37 L475.2 207.16 L475.3 206.96 L475.4 206.75 L475.5 206.54 L475.6 206.34 L475.7 206.13 L475.8 205.92 L475.9 205.71 L476 205.5 L476.1 205.3 L476.2 205.09 L476.3 204.89 L476.4 204.68 L476.5 204.48 L476.6 204.28 L476.7 204.08 L476.8 203.89 L476.9 203.69 L477 203.5 L477.1 203.31 L477.2 203.12 L477.3 202.92 L477.4 202.73 L477.5 202.54 L477.6 202.34 L477.7 202.15 L477.8 201.96 L477.9 201.77 L478 201.59 L478.1 201.4 L478.2 201.23 L478.3 201.05 L478.4 200.88 L478.5 200.72 L478.6 200.57 L478.7 200.42 L478.8 200.28 L478.9 200.14 L479 200.02 L479.1 199.9 L479.2 199.79 L479.3 199.68 L479.4 199.58 L479.5 199.48 L479.6 199.39 L479.7 199.3 L479.8 199.21 L479.9 199.13 L480 199.05 L480.1 198.97 L480.2 198.9 L480.3 198.82 L480.4 198.75 L480.5 198.68 L480.6 198.62 L480.7 198.55 L480.8 198.49 L480.9 198.43 L481 198.37 L481.1 198.32 L481.2 198.27 L481.3 198.22 L481.4 198.18 L481.5 198.14 L481.6 198.13 L481.7 198.13 L481.8 198.13 L481.9 198.13 L482 198.14 L482.1 198.15 L482.2 198.17 L482.3 198.19 L482.4 198.21 L482.5 198.24 L482.6 198.27 L482.7 198.31 L482.8 198.35 L482.9 198.4 L483 198.46 L483.1 198.52 L483.2 198.58 L483.3 198.66 L483.4 198.73 L483.5 198.82 L483.6 198.9 L483.7 199 L483.8 199.09 L483.9 199.19 L484 199.3 L484.1 199.4 L484.2 199.52 L484.3 199.63 L484.4 199.75 L484.5 199.88 L484.6 200.01 L484.7 200.15 L484.8 200.29 L484.9 200.43 L485 200.58 L485.1 200.74 L485.2 200.89 L485.3 201.05 L485.4 201.22 L485.5 201.39 L485.6 201.57 L485.7 201.74 L485.8 201.93 L485.9 202.11 L486 202.3 L486.1 202.49 L486.2 202.69 L486.3 202.89 L486.4 203.09 L486.5 203.3 L486.6 203.51 L486.7 203.72 L486.8 203.94 L486.9 204.15 L487 204.38 L487.1 204.6 L487.2 204.83 L487.3 205.06 L487.4 205.29 L487.5 205.52 L487.6 205.76 L487.7 206 L487.8 206.24 L487.9 206.48 L488 206.72 L488.1 206.97 L488.2 207.22 L488.3 207.47 L488.4 207.72 L488.5 207.98 L488.6 208.23 L488.7 208.49 L488.8 208.75 L488.9 209.01 L489 209.27 L489.1 209.53 L489.2 209.79 L489.3 210.06 L489.4 210.32 L489.5 210.59 L489.6 210.85 L489.7 211.12 L489.8 211.39 L489.9 211.66 L490 211.93 L490.1 212.2 L490.2 212.47 L490.3 212.75 L490.4 213.02 L490.5 213.29 L490.6 213.57 L490.7 213.84 L490.8 214.11 L490.9 214.39 L491 214.66 L491.1 214.94 L491.2 215.21 L491.3 215.49 L491.4 215.76 L491.5 216.04 L491.6 216.31 L491.7 216.59 L491.8 216.86 L491.9 217.14 L492 217.41 L492.1 217.69 L492.2 217.96 L492.3 218.24 L492.4 218.51 L492.5 218.79 L492.6 219.06 L492.7 219.33 L492.8 219.61 L492.9 219.88 L493 220.15 L493.1 220.42 L493.2 220.69 L493.3 220.96 L493.4 221.23 L493.5 221.5 L493.6 221.77 L493.7 222.04 L493.8 222.31 L493.9 222.58 L494 222.84 L494.1 223.11 L494.2 223.38 L494.3 223.64 L494.4 223.91 L494.5 224.17 L494.6 224.43 L494.7 224.7 L494.8 224.96 L494.9 225.22 L495 225.48 L495.1 225.74 L495.2 226 L495.3 226.25 L495.4 226.51 L495.5 226.77 L495.6 227.02 L495.7 227.28 L495.8 227.53 L495.9 227.78 L496 228.04 L496.1 228.29 L496.2 228.54 L496.3 228.79 L496.4 229.04 L496.5 229.28 L496.6 229.53 L496.7 229.78 L496.8 230.02 L496.9 230.27 L497 230.51 L497.1 230.75 L497.2 230.99 L497.3 231.23 L497.4 231.47 L497.5 231.71 L497.6 231.95 L497.7 232.18 L497.8 232.42 L497.9 232.65 L498 232.89 L498.1 233.12 L498.2 233.35 L498.3 233.58 L498.4 233.81 L498.5 234.04 L498.6 234.27 L498.7 234.5 L498.8 234.72 L498.9 234.95 L499 235.17 L499.1 235.39 L499.2 235.61 L499.3 235.83 L499.4 236.05 L499.5 236.27 L499.6 236.49 L499.7 236.71 L499.8 236.92 L499.9 237.13 L500 237.35 L500.1 237.56 L500.2 237.77 L500.3 237.98 L500.4 238.19 L500.5 238.4 L500.6 238.6 L500.7 238.81 L500.8 239.01 L500.9 239.22 L501 239.42 L501.1 239.62 L501.2 239.82 L501.3 240.02 L501.4 240.22 L501.5 240.42 L501.6 240.61 L501.7 240.81 L501.8 241 L501.9 241.19 L502 241.38 L502.1 241.58 L502.2 241.76 L502.3 241.95 L502.4 242.14 L502.5 242.33 L502.6 242.51 L502.7 242.69 L502.8 242.88 L502.9 243.06 L503 243.24 L503.1 243.42 L503.2 243.59 L503.3 243.77 L503.4 243.95 L503.5 244.12 L503.6 244.3 L503.7 244.47 L503.8 244.64 L503.9 244.81 L504 244.98 L504.1 245.14 L504.2 245.31 L504.3 245.48 L504.4 245.64 L504.5 245.8 L504.6 245.97 L504.7 246.13 L504.8 246.29 L504.9 246.44 L505 246.6 L505.1 246.76 L505.2 246.91 L505.3 247.07 L505.4 247.22 L505.5 247.37 L505.6 247.52 L505.7 247.67 L505.8 247.81 L505.9 247.96 L506 248.11 L506.1 248.25 L506.2 248.39 L506.3 248.53 L506.4 248.67 L506.5 248.81 L506.6 248.95 L506.7 249.09 L506.8 249.22 L506.9 249.36 L507 249.49 L507.1 249.62 L507.2 249.75 L507.3 249.88 L507.4 250.01 L507.5 250.14 L507.6 250.26 L507.7 250.38 L507.8 250.51 L507.9 250.63 L508 250.75 L508.1 250.87 L508.2 250.99 L508.3 251.1 L508.4 251.22 L508.5 251.33 L508.6 251.44 L508.7 251.55 L508.8 251.66 L508.9 251.77 L509 251.88 L509.1 251.98 L509.2 252.09 L509.3 252.19 L509.4 252.29 L509.5 252.39 L509.6 252.49 L509.7 252.59 L509.8 252.69 L509.9 252.78 L510 252.88 L510.1 252.97 L510.2 253.06 L510.3 253.15 L510.4 253.24 L510.5 253.32 L510.6 253.41 L510.7 253.49 L510.8 253.57 L510.9 253.66 L511 253.74 L511.1 253.81 L511.2 253.89 L511.3 253.97 L511.4 254.04 L511.5 254.11 L511.6 254.18 L511.7 254.25 L511.8 254.32 L511.9 254.39 L512 254.45 L512.1 254.51 L512.2 254.58 L512.3 254.64 L512.4 254.7 L512.5 254.75 L512.6 254.81 L512.7 254.86 L512.8 254.91 L512.9 254.97 L513 255.02 L513.1 255.06 L513.2 255.11 L513.3 255.15 L513.4 255.2 L513.5 255.24 L513.6 255.28 L513.7 255.32 L513.8 255.35 L513.9 255.39 L514 255.42 L514.1 255.45 L514.2 255.48 L514.3 255.51 L514.4 255.54 L514.5 255.56 L514.6 255.59 L514.7 255.61 L514.8 255.63 L514.9 255.65 L515 255.66 L515.1 255.68 L515.2 255.69 L515.3 255.7 L515.4 255.71 L515.5 255.72 L515.6 255.72 L515.7 255.73 L515.8 255.73 L515.9 255.73 L516 255.73 L516.1 255.72 L516.2 255.72 L516.3 255.71 L516.4 255.7 L516.5 255.69 L516.6 255.68 L516.7 255.66 L516.8 255.64 L516.9 255.62 L517 255.6 L517.1 255.58 L517.2 255.55 L517.3 255.53 L517.4 255.5 L517.5 255.47 L517.6 255.43 L517.7 255.4 L517.8 255.36 L517.9 255.32 L518 255.28 L518.1 255.23 L518.2 255.19 L518.3 255.14 L518.4 255.09 L518.5 255.03 L518.6 254.98 L518.7 254.92 L518.8 254.86 L518.9 254.8 L519 254.73 L519.1 254.67 L519.2 254.6 L519.3 254.53 L519.4 254.45 L519.5 254.38 L519.6 254.3 L519.7 254.22 L519.8 254.13 L519.9 254.05 L520 253.96 L520.1 253.87 L520.2 253.77 L520.3 253.68 L520.4 253.58 L520.5 253.47 L520.6 253.37 L520.7 253.26 L520.8 253.15 L520.9 253.04 L521 252.93 L521.1 252.81 L521.2 252.69 L521.3 252.56 L521.4 252.44 L521.5 252.31 L521.6 252.17 L521.7 252.04 L521.8 251.9 L521.9 251.76 L522 251.61 L522.1 251.47 L522.2 251.32 L522.3 251.16 L522.4 251 L522.5 250.84 L522.6 250.68 L522.7 250.51 L522.8 250.34 L522.9 250.17 L523 249.99 L523.1 249.81 L523.2 249.63 L523.3 249.44 L523.4 249.25 L523.5 249.06 L523.6 248.86 L523.7 248.66 L523.8 248.45 L523.9 248.24 L524 248.03 L524.1 247.81 L524.2 247.59 L524.3 247.37 L524.4 247.14 L524.5 246.91 L524.6 246.67 L524.7 246.43 L524.8 246.19 L524.9 245.94 L525 245.69 L525.1 245.43 L525.2 245.17 L525.3 244.9 L525.4 244.63 L525.5 244.36 L525.6 244.08 L525.7 243.79 L525.8 243.5 L525.9 243.21 L526 242.91 L526.1 242.61 L526.2 242.3 L526.3 241.99 L526.4 241.67 L526.5 241.34 L526.6 241.02 L526.7 240.68 L526.8 240.34 L526.9 240 L527 239.65 L527.1 239.29 L527.2 238.93 L527.3 238.56 L527.4 238.19 L527.5 237.81 L527.6 237.43 L527.7 237.04 L527.8 236.64 L527.9 236.24 L528 235.83 L528.1 235.42 L528.2 235 L528.3 234.57 L528.4 234.14 L528.5 233.7 L528.6 233.25 L528.7 232.8 L528.8 232.34 L528.9 231.87 L529 231.39 L529.1 230.91 L529.2 230.43 L529.3 229.93 L529.4 229.43 L529.5 228.92 L529.6 228.4 L529.7 227.88 L529.8 227.35 L529.9 226.81 L530 226.26 L530.1 225.71 L530.2 225.15 L530.3 224.58 L530.4 224.01 L530.5 223.43 L530.6 222.84 L530.7 222.24 L530.8 221.64 L530.9 221.03 L531 220.41 L531.1 219.79 L531.2 219.16 L531.3 218.52 L531.4 217.88 L531.5 217.23 L531.6 216.58 L531.7 215.92 L531.8 215.26 L531.9 214.59 L532 213.92 L532.1 213.24 L532.2 212.57 L532.3 211.89 L532.4 211.21 L532.5 210.53 L532.6 209.86 L532.7 209.18 L532.8 208.51 L532.9 207.84 L533 207.18 L533.1 206.53 L533.2 205.88 L533.3 205.25 L533.4 204.62 L533.5 204.02 L533.6 203.43 L533.7 202.85 L533.8 202.3 L533.9 201.77 L534 201.26 L534.1 200.79 L534.2 200.34 L534.3 199.92 L534.4 199.54 L534.5 199.19 L534.6 198.89 L534.7 198.62 L534.8 198.4 L534.9 198.22 L535 198.08 L535.1 197.99 L535.2 197.95 L535.3 197.96 L535.4 198.02 L535.5 198.12 L535.6 198.27 L535.7 198.47 L535.8 198.72 L535.9 199.01 L536 199.34 L536.1 199.71 L536.2 200.13 L536.3 200.58 L536.4 201.07 L536.5 201.59 L536.6 202.14 L536.7 202.72 L536.8 203.33 L536.9 203.96 L537 204.61 L537.1 205.29 L537.2 205.98 L537.3 206.68 L537.4 207.4 L537.5 208.13 L537.6 208.87 L537.7 209.62 L537.8 210.37 L537.9 211.13 L538 211.89 L538.1 212.66 L538.2 213.42 L538.3 214.19 L538.4 214.95 L538.5 215.72 L538.6 216.48 L538.7 217.24 L538.8 217.99 L538.9 218.74 L539 219.49 L539.1 220.23 L539.2 220.96 L539.3 221.69 L539.4 222.41 L539.5 223.13 L539.6 223.84 L539.7 224.54 L539.8 225.23 L539.9 225.92 L540 226.6 L540.1 227.27 L540.2 227.93 L540.3 228.58 L540.4 229.23 L540.5 229.86 L540.6 230.49 L540.7 231.11 L540.8 231.73 L540.9 232.33 L541 232.93 L541.1 233.51 L541.2 234.09 L541.3 234.67 L541.4 235.23 L541.5 235.78 L541.6 236.33 L541.7 236.87 L541.8 237.4 L541.9 237.92 L542 238.43 L542.1 238.94 L542.2 239.44 L542.3 239.93 L542.4 240.41 L542.5 240.88 L542.6 241.35 L542.7 241.81 L542.8 242.26 L542.9 242.7 L543 243.14 L543.1 243.57 L543.2 243.99 L543.3 244.4 L543.4 244.81 L543.5 245.21 L543.6 245.6 L543.7 245.98 L543.8 246.36 L543.9 246.73 L544 247.09 L544.1 247.45 L544.2 247.79 L544.3 248.13 L544.4 248.47 L544.5 248.8 L544.6 249.12 L544.7 249.43 L544.8 249.73 L544.9 250.03 L545 250.33 L545.1 250.61 L545.2 250.89 L545.3 251.16 L545.4 251.43 L545.5 251.69 L545.6 251.94 L545.7 252.18 L545.8 252.42 L545.9 252.65 L546 252.88 L546.1 253.1 L546.2 253.31 L546.3 253.51 L546.4 253.71 L546.5 253.9 L546.6 254.09 L546.7 254.27 L546.8 254.44 L546.9 254.6 L547 254.76 L547.1 254.91 L547.2 255.06 L547.3 255.2 L547.4 255.33 L547.5 255.46 L547.6 255.57 L547.7 255.69 L547.8 255.79 L547.9 255.89 L548 255.98 L548.1 256.06 L548.2 256.14 L548.3 256.21 L548.4 256.28 L548.5 256.33 L548.6 256.38 L548.7 256.43 L548.8 256.46 L548.9 256.49 L549 256.52 L549.1 256.53 L549.2 256.54 L549.3 256.54 L549.4 256.53 L549.5 256.52 L549.6 256.5 L549.7 256.47 L549.8 256.43 L549.9 256.39 L550 256.34 L550.1 256.28 L550.2 256.22 L550.3 256.14 L550.4 256.06 L550.5 255.97 L550.6 255.87 L550.7 255.77 L550.8 255.65 L550.9 255.53 L551 255.4 L551.1 255.26 L551.2 255.12 L551.3 254.96 L551.4 254.8 L551.5 254.63 L551.6 254.44 L551.7 254.25 L551.8 254.05 L551.9 253.85 L552 253.63 L552.1 253.4 L552.2 253.17 L552.3 252.92 L552.4 252.66 L552.5 252.4 L552.6 252.12 L552.7 251.84 L552.8 251.54 L552.9 251.23 L553 250.91 L553.1 250.59 L553.2 250.25 L553.3 249.9 L553.4 249.54 L553.5 249.16 L553.6 248.78 L553.7 248.38 L553.8 247.97 L553.9 247.55 L554 247.12 L554.1 246.67 L554.2 246.21 L554.3 245.74 L554.4 245.25 L554.5 244.75 L554.6 244.23 L554.7 243.71 L554.8 243.16 L554.9 242.6 L555 242.03 L555.1 241.44 L555.2 240.84 L555.3 240.22 L555.4 239.58 L555.5 238.93 L555.6 238.26 L555.7 237.57 L555.8 236.86 L555.9 236.14 L556 235.4 L556.1 234.64 L556.2 233.86 L556.3 233.06 L556.4 232.24 L556.5 231.41 L556.6 230.55 L556.7 229.67 L556.8 228.77 L556.9 227.85 L557 226.91 L557.1 225.95 L557.2 224.97 L557.3 223.97 L557.4 222.95 L557.5 221.91 L557.6 220.85 L557.7 219.77 L557.8 218.67 L557.9 217.56 L558 216.43 L558.1 215.29 L558.2 214.14 L558.3 212.99 L558.4 211.83 L558.5 210.66 L558.6 209.51 L558.7 208.36 L558.8 207.23 L558.9 206.13 L559 205.05 L559.1 204.01 L559.2 203.02 L559.3 202.09 L559.4 201.23 L559.5 200.45 L559.6 199.76 L559.7 199.17 L559.8 198.7 L559.9 198.34 L560 198.1 L560.1 198 L560.2 198.03 L560.3 198.19 L560.4 198.49 L560.5 198.91 L560.6 199.45 L560.7 200.1 L560.8 200.86 L560.9 201.71 L561 202.65 L561.1 203.65 L561.2 204.72 L561.3 205.83 L561.4 206.99 L561.5 208.18 L561.6 209.4 L561.7 210.63 L561.8 211.87 L561.9 213.12 L562 214.36 L562.1 215.61 L562.2 216.84 L562.3 218.07 L562.4 219.28 L562.5 220.48 L562.6 221.66 L562.7 222.82 L562.8 223.97 L562.9 225.09 L563 226.19 L563.1 227.27 L563.2 228.33 L563.3 229.37 L563.4 230.38 L563.5 231.37 L563.6 232.34 L563.7 233.29 L563.8 234.21 L563.9 235.11 L564 236 L564.1 236.85 L564.2 237.69 L564.3 238.51 L564.4 239.3 L564.5 240.08 L564.6 240.83 L564.7 241.56 L564.8 242.28 L564.9 242.97 L565 243.65 L565.1 244.3 L565.2 244.94 L565.3 245.56 L565.4 246.16 L565.5 246.74 L565.6 247.3 L565.7 247.84 L565.8 248.37 L565.9 248.88 L566 249.37 L566.1 249.85 L566.2 250.31 L566.3 250.75 L566.4 251.17 L566.5 251.58 L566.6 251.97 L566.7 252.35 L566.8 252.71 L566.9 253.05 L567 253.37 L567.1 253.69 L567.2 253.98 L567.3 254.26 L567.4 254.52 L567.5 254.77 L567.6 255 L567.7 255.22 L567.8 255.42 L567.9 255.6 L568 255.77 L568.1 255.92 L568.2 256.06 L568.3 256.18 L568.4 256.29 L568.5 256.38 L568.6 256.45 L568.7 256.51 L568.8 256.55 L568.9 256.58 L569 256.59 L569.1 256.58 L569.2 256.56 L569.3 256.52 L569.4 256.47 L569.5 256.39 L569.6 256.3 L569.7 256.2 L569.8 256.08 L569.9 255.94 L570 255.78 L570.1 255.6 L570.2 255.41 L570.3 255.2 L570.4 254.97 L570.5 254.72 L570.6 254.45 L570.7 254.16 L570.8 253.86 L570.9 253.53 L571 253.19 L571.1 252.82 L571.2 252.43 L571.3 252.02 L571.4 251.59 L571.5 251.14 L571.6 250.66 L571.7 250.17 L571.8 249.64 L571.9 249.1 L572 248.53 L572.1 247.93 L572.2 247.31 L572.3 246.67 L572.4 245.99 L572.5 245.29 L572.6 244.56 L572.7 243.8 L572.8 243.02 L572.9 242.2 L573 241.35 L573.1 240.47 L573.2 239.55 L573.3 238.6 L573.4 237.62 L573.5 236.6 L573.6 235.54 L573.7 234.45 L573.8 233.32 L573.9 232.15 L574 230.94 L574.1 229.69 L574.2 228.4 L574.3 227.07 L574.4 225.7 L574.5 224.28 L574.6 222.83 L574.7 221.34 L574.8 219.81 L574.9 218.25 L575 216.66 L575.1 215.05 L575.2 213.41 L575.3 211.77 L575.4 210.13 L575.5 208.51 L575.6 206.92 L575.7 205.37 L575.8 203.91 L575.9 202.54 L576 201.3 L576.1 200.22 L576.2 199.33 L576.3 198.64 L576.4 198.2 L576.5 198.01 L576.6 198.07 L576.7 198.4 L576.8 198.98 L576.9 199.79 L577 200.81 L577.1 202.01 L577.2 203.36 L577.3 204.84 L577.4 206.41 L577.5 208.05 L577.6 209.74 L577.7 211.45 L577.8 213.18 L577.9 214.91 L578 216.63 L578.1 218.32 L578.2 219.99 L578.3 221.62 L578.4 223.22 L578.5 224.79 L578.6 226.31 L578.7 227.79 L578.8 229.22 L578.9 230.61 L579 231.96 L579.1 233.27 L579.2 234.53 L579.3 235.75 L579.4 236.93 L579.5 238.07 L579.6 239.17 L579.7 240.22 L579.8 241.24 L579.9 242.23 L580 243.17 L580.1 244.08 L580.2 244.95 L580.3 245.78 L580.4 246.58 L580.5 247.35 L580.6 248.08 L580.7 248.78 L580.8 249.45 L580.9 250.09 L581 250.69 L581.1 251.26 L581.2 251.81 L581.3 252.32 L581.4 252.8 L581.5 253.25 L581.6 253.68 L581.7 254.07 L581.8 254.44 L581.9 254.77 L582 255.08 L582.1 255.36 L582.2 255.61 L582.3 255.83 L582.4 256.03 L582.5 256.19 L582.6 256.33 L582.7 256.44 L582.8 256.52 L582.9 256.57 L583 256.59 L583.1 256.59 L583.2 256.55 L583.3 256.49 L583.4 256.4 L583.5 256.28 L583.6 256.12 L583.7 255.94 L583.8 255.73 L583.9 255.48 L584 255.2 L584.1 254.9 L584.2 254.55 L584.3 254.18 L584.4 253.77 L584.5 253.33 L584.6 252.85 L584.7 252.34 L584.8 251.79 L584.9 251.2 L585 250.57 L585.1 249.9 L585.2 249.2 L585.3 248.45 L585.4 247.66 L585.5 246.82 L585.6 245.94 L585.7 245.01 L585.8 244.04 L585.9 243.01 L586 241.93 L586.1 240.8 L586.2 239.62 L586.3 238.37 L586.4 237.07 L586.5 235.71 L586.6 234.29 L586.7 232.8 L586.8 231.24 L586.9 229.62 L587 227.94 L587.1 226.18 L587.2 224.36 L587.3 222.47 L587.4 220.51 L587.5 218.5 L587.6 216.44 L587.7 214.35 L587.8 212.23 L587.9 210.1 L588 208.01 L588.1 205.98 L588.2 204.06 L588.3 202.31 L588.4 200.77 L588.5 199.53 L588.6 198.62 L588.7 198.11 L588.8 198.02 L588.9 198.36 L589 199.11 L589.1 200.25 L589.2 201.7 L589.3 203.42 L589.4 205.33 L589.5 207.39 L589.6 209.53 L589.7 211.73 L589.8 213.94 L589.9 216.14 L590 218.31 L590.1 220.43 L590.2 222.5 L590.3 224.51 L590.4 226.45 L590.5 228.32 L590.6 230.11 L590.7 231.84 L590.8 233.5 L590.9 235.09 L591 236.61 L591.1 238.06 L591.2 239.45 L591.3 240.77 L591.4 242.03 L591.5 243.23 L591.6 244.37 L591.7 245.45 L591.8 246.47 L591.9 247.44 L592 248.36 L592.1 249.22 L592.2 250.03 L592.3 250.79 L592.4 251.5 L592.5 252.16 L592.6 252.78 L592.7 253.35 L592.8 253.87 L592.9 254.34 L593 254.77 L593.1 255.15 L593.2 255.49 L593.3 255.78 L593.4 256.03 L593.5 256.23 L593.6 256.39 L593.7 256.5 L593.8 256.57 L593.9 256.6 L594 256.58 L594.1 256.51 L594.2 256.4 L594.3 256.24 L594.4 256.04 L594.5 255.79 L594.6 255.49 L594.7 255.14 L594.8 254.74 L594.9 254.29 L595 253.79 L595.1 253.24 L595.2 252.63 L595.3 251.96 L595.4 251.24 L595.5 250.46 L595.6 249.62 L595.7 248.72 L595.8 247.75 L595.9 246.72 L596 245.61 L596.1 244.44 L596.2 243.19 L596.3 241.86 L596.4 240.45 L596.5 238.95 L596.6 237.37 L596.7 235.7 L596.8 233.94 L596.9 232.08 L597 230.11 L597.1 228.05 L597.2 225.89 L597.3 223.62 L597.4 221.26 L597.5 218.81 L597.6 216.28 L597.7 213.7 L597.8 211.1 L597.9 208.51 L598 206.02 L598.1 203.68 L598.2 201.61 L598.3 199.92 L598.4 198.71 L598.5 198.08 L598.6 198.08 L598.7 198.72 L598.8 199.95 L598.9 201.68 L599 203.8 L599.1 206.2 L599.2 208.77 L599.3 211.43 L599.4 214.12 L599.5 216.79 L599.6 219.41 L599.7 221.95 L599.8 224.41 L599.9 226.76 L600 229.01 L600.1 231.15 L600.2 233.19 L600.3 235.12 L600.4 236.95 L600.5 238.68 L600.6 240.32 L600.7 241.86 L600.8 243.32 L600.9 244.68 L601 245.96 L601.1 247.16 L601.2 248.28 L601.3 249.32 L601.4 250.29 L601.5 251.18 L601.6 252 L601.7 252.75 L601.8 253.43 L601.9 254.04 L602 254.59 L602.1 255.06 L602.2 255.48 L602.3 255.83 L602.4 256.11 L602.5 256.33 L602.6 256.48 L602.7 256.57 L602.8 256.6 L602.9 256.56 L603 256.45 L603.1 256.28 L603.2 256.05 L603.3 255.74 L603.4 255.37 L603.5 254.92 L603.6 254.4 L603.7 253.81 L603.8 253.15 L603.9 252.4 L604 251.58 L604.1 250.68 L604.2 249.69 L604.3 248.61 L604.4 247.44 L604.5 246.17 L604.6 244.8 L604.7 243.33 L604.8 241.75 L604.9 240.06 L605 238.24 L605.1 236.3 L605.2 234.23 L605.3 232.03 L605.4 229.69 L605.5 227.2 L605.6 224.57 L605.7 221.81 L605.8 218.91 L605.9 215.91 L606 212.84 L606.1 209.76 L606.2 206.76 L606.3 203.95 L606.4 201.49 L606.5 199.57 L606.6 198.36 L606.7 198 L606.8 198.54 L606.9 199.92 L607 201.99 L607.1 204.58 L607.2 207.51 L607.3 210.61 L607.4 213.79 L607.5 216.93 L607.6 220.01 L607.7 222.97 L607.8 225.8 L607.9 228.48 L608 231.02 L608.1 233.41 L608.2 235.66 L608.3 237.77 L608.4 239.74 L608.5 241.58 L608.6 243.3 L608.7 244.89 L608.8 246.37 L608.9 247.74 L609 249 L609.1 250.15 L609.2 251.2 L609.3 252.15 L609.4 253 L609.5 253.76 L609.6 254.43 L609.7 255.01 L609.8 255.49 L609.9 255.89 L610 256.2 L610.1 256.42 L610.2 256.55 L610.3 256.6 L610.4 256.56 L610.5 256.42 L610.6 256.2 L610.7 255.89 L610.8 255.48 L610.9 254.98 L611 254.38 L611.1 253.69 L611.2 252.89 L611.3 251.98 L611.4 250.97 L611.5 249.84 L611.6 248.59 L611.7 247.22 L611.8 245.72 L611.9 244.08 L612 242.31 L612.1 240.38 L612.2 238.29 L612.3 236.03 L612.4 233.6 L612.5 230.99 L612.6 228.19 L612.7 225.19 L612.8 222.02 L612.9 218.67 L613 215.19 L613.1 211.63 L613.2 208.09 L613.3 204.74 L613.4 201.8 L613.5 199.54 L613.6 198.24 L613.7 198.08 L613.8 199.1 L613.9 201.15 L614 203.98 L614.1 207.31 L614.2 210.89 L614.3 214.54 L614.4 218.15 L614.5 221.63 L614.6 224.94 L614.7 228.07 L614.8 231 L614.9 233.74 L615 236.29 L615.1 238.66 L615.2 240.84 L615.3 242.86 L615.4 244.72 L615.5 246.42 L615.6 247.97 L615.7 249.38 L615.8 250.66 L615.9 251.8 L616 252.81 L616.1 253.7 L616.2 254.47 L616.3 255.11 L616.4 255.64 L616.5 256.05 L616.6 256.35 L616.7 256.53 L616.8 256.6 L616.9 256.55 L617 256.39 L617.1 256.1 L617.2 255.7 L617.3 255.18 L617.4 254.53 L617.5 253.75 L617.6 252.84 L617.7 251.8 L617.8 250.61 L617.9 249.27 L618 247.77 L618.1 246.11 L618.2 244.28 L618.3 242.26 L618.4 240.05 L618.5 237.63 L618.6 234.99 L618.7 232.12 L618.8 229.02 L618.9 225.67 L619 222.08 L619.1 218.27 L619.2 214.29 L619.3 210.24 L619.4 206.31 L619.5 202.75 L619.6 199.95 L619.7 198.3 L619.8 198.11 L619.9 199.42 L620 202 L620.1 205.46 L620.2 209.4 L620.3 213.52 L620.4 217.62 L620.5 221.57 L620.6 225.31 L620.7 228.8 L620.8 232.05 L620.9 235.05 L621 237.81 L621.1 240.34 L621.2 242.65 L621.3 244.76 L621.4 246.66 L621.5 248.38 L621.6 249.92 L621.7 251.28 L621.8 252.48 L621.9 253.52 L622 254.41 L622.1 255.14 L622.2 255.72 L622.3 256.15 L622.4 256.44 L622.5 256.58 L622.6 256.58 L622.7 256.43 L622.8 256.13 L622.9 255.68 L623 255.08 L623.1 254.32 L623.2 253.39 L623.3 252.3 L623.4 251.03 L623.5 249.57 L623.6 247.92 L623.7 246.07 L623.8 243.99 L623.9 241.69 L624 239.13 L624.1 236.31 L624.2 233.21 L624.3 229.81 L624.4 226.11 L624.5 222.11 L624.6 217.84 L624.7 213.36 L624.8 208.85 L624.9 204.58 L625 200.99 L625.1 198.65 L625.2 198.03 L625.3 199.3 L625.4 202.17 L625.5 206.11 L625.6 210.58 L625.7 215.19 L625.8 219.7 L625.9 223.98 L626 227.96 L626.1 231.64 L626.2 235 L626.3 238.07 L626.4 240.85 L626.5 243.36 L626.6 245.62 L626.7 247.64 L626.8 249.43 L626.9 251 L627 252.36 L627.1 253.53 L627.2 254.5 L627.3 255.28 L627.4 255.88 L627.5 256.3 L627.6 256.54 L627.7 256.6 L627.8 256.47 L627.9 256.17 L628 255.68 L628.1 255 L628.2 254.12 L628.3 253.04 L628.4 251.75 L628.5 250.24 L628.6 248.49 L628.7 246.5 L628.8 244.24 L628.9 241.7 L629 238.86 L629.1 235.69 L629.2 232.17 L629.3 228.29 L629.4 224.03 L629.5 219.42 L629.6 214.52 L629.7 209.52 L629.8 204.76 L629.9 200.81 L630 198.41 L630.1 198.19 L630.2 200.22 L630.3 203.97 L630.4 208.7 L630.5 213.77 L630.6 218.79 L630.7 223.56 L630.8 227.97 L630.9 232.01 L631 235.67 L631.1 238.97 L631.2 241.92 L631.3 244.56 L631.4 246.9 L631.5 248.95 L631.6 250.73 L631.7 252.27 L631.8 253.56 L631.9 254.61 L632 255.44 L632.1 256.04 L632.2 256.43 L632.3 256.59 L632.4 256.54 L632.5 256.27 L632.6 255.78 L632.7 255.05 L632.8 254.09 L632.9 252.89 L633 251.43 L633.1 249.7 L633.2 247.69 L633.3 245.37 L633.4 242.71 L633.5 239.71 L633.6 236.32 L633.7 232.51 L633.8 228.27 L633.9 223.58 L634 218.47 L634.1 213.05 L634.2 207.61 L634.3 202.7 L634.4 199.18 L634.5 198.01 L634.6 199.58 L634.7 203.4 L634.8 208.5 L634.9 214.05 L635 219.52 L635.1 224.67 L635.2 229.38 L635.3 233.63 L635.4 237.44 L635.5 240.83 L635.6 243.83 L635.7 246.46 L635.8 248.75 L635.9 250.72 L636 252.38 L636.1 253.75 L636.2 254.85 L636.3 255.68 L636.4 256.24 L636.5 256.54 L636.6 256.59 L636.7 256.37 L636.8 255.89 L636.9 255.13 L637 254.1 L637.1 252.78 L637.2 251.16 L637.3 249.21 L637.4 246.91 L637.5 244.24 L637.6 241.17 L637.7 237.66 L637.8 233.68 L637.9 229.18 L638 224.15 L638.1 218.63 L638.2 212.74 L638.3 206.85 L638.4 201.72 L638.5 198.51 L638.6 198.32 L638.7 201.24 L638.8 206.26 L638.9 212.19 L639 218.19 L639.1 223.86 L639.2 229.04 L639.3 233.67 L639.4 237.78 L639.5 241.4 L639.6 244.56 L639.7 247.3 L639.8 249.64 L639.9 251.62 L640 253.24 L640.1 254.54 L640.2 255.51 L640.3 256.18 L640.4 256.53 L640.5 256.58 L640.6 256.33 L640.7 255.77 L640.8 254.88 L640.9 253.67 L641 252.11 L641.1 250.19 L641.2 247.87 L641.3 245.13 L641.4 241.93 L641.5 238.23 L641.6 233.98 L641.7 229.14 L641.8 223.68 L641.9 217.64 L642 211.24 L642.1 205.01 L642.2 200.09 L642.3 198.01 L642.4 199.66 L642.5 204.35 L642.6 210.56 L642.7 217.07 L642.8 223.26 L642.9 228.88 L643 233.88 L643.1 238.27 L643.2 242.09 L643.3 245.38 L643.4 248.19 L643.5 250.55 L643.6 252.5 L643.7 254.05 L643.8 255.23 L643.9 256.04 L644 256.49 L644.1 256.59 L644.2 256.34 L644.3 255.72 L644.4 254.74 L644.5 253.37 L644.6 251.6 L644.7 249.39 L644.8 246.72 L644.9 243.55 L645 239.82 L645.1 235.47 L645.2 230.46 L645.3 224.74 L645.4 218.34 L645.5 211.47 L645.6 204.79 L645.7 199.69 L645.8 198.03 L645.9 200.65 L646 206.34 L646.1 213.23 L646.2 220.12 L646.3 226.46 L646.4 232.09 L646.5 237.02 L646.6 241.27 L646.7 244.91 L646.8 247.98 L646.9 250.54 L647 252.61 L647.1 254.23 L647.2 255.43 L647.3 256.2 L647.4 256.57 L647.5 256.53 L647.6 256.08 L647.7 255.21 L647.8 253.92 L647.9 252.16 L648 249.92 L648.1 247.16 L648.2 243.83 L648.3 239.87 L648.4 235.2 L648.5 229.77 L648.6 223.52 L648.7 216.53 L648.8 209.15 L648.9 202.42 L649 198.37 L649.1 198.96 L649.2 203.89 L649.3 210.99 L649.4 218.43 L649.5 225.36 L649.6 231.49 L649.7 236.81 L649.8 241.36 L649.9 245.21 L650 248.42 L650.1 251.04 L650.2 253.13 L650.3 254.71 L650.4 255.81 L650.5 256.43 L650.6 256.6 L650.7 256.3 L650.8 255.52 L650.9 254.27 L651 252.5 L651.1 250.19 L651.2 247.29 L651.3 243.75 L651.4 239.48 L651.5 234.42 L651.6 228.47 L651.7 221.6 L651.8 213.96 L651.9 206.19 L652 200 L652.1 198.07 L652.2 201.57 L652.3 208.56 L652.4 216.5 L652.5 224.03 L652.6 230.71 L652.7 236.45 L652.8 241.32 L652.9 245.4 L653 248.76 L653.1 251.46 L653.2 253.56 L653.3 255.1 L653.4 256.09 L653.5 256.56 L653.6 256.5 L653.7 255.92 L653.8 254.8 L653.9 253.12 L654 250.84 L654.1 247.9 L654.2 244.26 L654.3 239.81 L654.4 234.47 L654.5 228.14 L654.6 220.77 L654.7 212.59 L654.8 204.5 L654.9 198.87 L655 198.74 L655.1 204.23 L655.2 212.34 L655.3 220.64 L655.4 228.13 L655.5 234.58 L655.6 240.03 L655.7 244.55 L655.8 248.25 L655.9 251.21 L656 253.48 L656.1 255.12 L656.2 256.14 L656.3 256.58 L656.4 256.43 L656.5 255.7 L656.6 254.35 L656.7 252.36 L656.8 249.67 L656.9 246.24 L657 241.96 L657.1 236.72 L657.2 230.43 L657.3 222.98 L657.4 214.5 L657.5 205.8 L657.6 199.28 L657.7 198.58 L657.8 204.23 L657.9 212.83 L658 221.55 L658.1 229.31 L658.2 235.91 L658.3 241.4 L658.4 245.9 L658.5 249.51 L658.6 252.32 L658.7 254.39 L658.8 255.77 L658.9 256.48 L659 256.55 L659.1 255.95 L659.2 254.69 L659.3 252.72 L659.4 249.99 L659.5 246.42 L659.6 241.93 L659.7 236.37 L659.8 229.62 L659.9 221.6 L660 212.51 L660.1 203.6 L660.2 198.26 L660.3 200.16 L660.4 207.88 L660.5 217.22 L660.6 225.94 L660.7 233.42 L660.8 239.63 L660.9 244.69 L661 248.73 L661.1 251.86 L661.2 254.16 L661.3 255.69 L661.4 256.47 L661.5 256.54 L661.6 255.88 L661.7 254.47 L661.8 252.27 L661.9 249.22 L662 245.23 L662.1 240.16 L662.2 233.88 L662.3 226.22 L662.4 217.19 L662.5 207.46 L662.6 199.68 L662.7 198.63 L662.8 205.22 L662.9 214.91 L663 224.31 L663.1 232.41 L663.2 239.08 L663.3 244.48 L663.4 248.75 L663.5 252.01 L663.6 254.36 L663.7 255.86 L663.8 256.55 L663.9 256.44 L664 255.53 L664.1 253.78 L664.2 251.14 L664.3 247.53 L664.4 242.82 L664.5 236.84 L664.6 229.43 L664.7 220.47 L664.8 210.34 L664.9 201.18 L665 198.14 L665.1 203.9 L665.2 213.89 L665.3 223.83 L665.4 232.36 L665.5 239.33 L665.6 244.91 L665.7 249.25 L665.8 252.51 L665.9 254.78 L666 256.13 L666.1 256.6 L666.2 256.19 L666.3 254.89 L666.4 252.65 L666.5 249.4 L666.6 245.01 L666.7 239.32 L666.8 232.12 L666.9 223.25 L667 212.88 L667.1 202.72 L667.2 198 L667.3 202.97 L667.4 213.26 L667.5 223.69 L667.6 232.6 L667.7 239.82 L667.8 245.51 L667.9 249.88 L668 253.08 L668.1 255.22 L668.2 256.37 L668.3 256.56 L668.4 255.78 L668.5 254.02 L668.6 251.2 L668.7 247.21 L668.8 241.89 L668.9 235.02 L669 226.39 L669.1 215.96 L669.2 204.95 L669.3 198.18 L669.4 201.69 L669.5 212.07 L669.6 260 Z" fill="url(#combFill)"/>
<path d="M332 193.5 L332.1 193.5 L332.2 193.5 L332.3 193.5 L332.4 193.5 L332.5 193.5 L332.6 193.5 L332.7 193.5 L332.8 193.5 L332.9 193.5 L333 193.5 L333.1 193.5 L333.2 193.5 L333.3 193.5 L333.4 193.5 L333.5 193.5 L333.6 193.5 L333.7 193.5 L333.8 193.5 L333.9 193.5 L334 193.5 L334.1 193.5 L334.2 193.5 L334.3 193.5 L334.4 193.5 L334.5 193.5 L334.6 193.5 L334.7 193.5 L334.8 193.5 L334.9 193.5 L335 193.5 L335.1 193.5 L335.2 193.5 L335.3 193.5 L335.4 193.5 L335.5 193.5 L335.6 193.5 L335.7 193.5 L335.8 193.5 L335.9 193.5 L336 193.5 L336.1 193.5 L336.2 193.5 L336.3 193.5 L336.4 193.5 L336.5 193.5 L336.6 193.5 L336.7 193.5 L336.8 193.5 L336.9 193.5 L337 193.5 L337.1 193.5 L337.2 193.5 L337.3 193.5 L337.4 193.5 L337.5 193.5 L337.6 193.5 L337.7 193.5 L337.8 193.5 L337.9 193.5 L338 193.5 L338.1 193.5 L338.2 193.5 L338.3 193.5 L338.4 193.5 L338.5 193.5 L338.6 193.5 L338.7 193.5 L338.8 193.5 L338.9 193.5 L339 193.5 L339.1 193.5 L339.2 193.5 L339.3 193.5 L339.4 193.5 L339.5 193.5 L339.6 193.5 L339.7 193.5 L339.8 193.5 L339.9 193.5 L340 193.5 L340.1 193.5 L340.2 193.5 L340.3 193.5 L340.4 193.5 L340.5 193.5 L340.6 193.5 L340.7 193.5 L340.8 193.5 L340.9 193.5 L341 193.5 L341.1 193.5 L341.2 193.5 L341.3 193.5 L341.4 193.5 L341.5 193.5 L341.6 193.5 L341.7 193.5 L341.8 193.5 L341.9 193.5 L342 193.5 L342.1 193.5 L342.2 193.5 L342.3 193.5 L342.4 193.5 L342.5 193.5 L342.6 193.5 L342.7 193.5 L342.8 193.5 L342.9 193.5 L343 193.5 L343.1 193.5 L343.2 193.5 L343.3 193.5 L343.4 193.5 L343.5 193.5 L343.6 193.5 L343.7 193.5 L343.8 193.5 L343.9 193.5 L344 193.5 L344.1 193.5 L344.2 193.5 L344.3 193.5 L344.4 193.5 L344.5 193.5 L344.6 193.5 L344.7 193.5 L344.8 193.5 L344.9 193.5 L345 193.5 L345.1 193.5 L345.2 193.5 L345.3 193.5 L345.4 193.5 L345.5 193.5 L345.6 193.5 L345.7 193.5 L345.8 193.5 L345.9 193.5 L346 193.5 L346.1 193.5 L346.2 193.5 L346.3 193.5 L346.4 193.5 L346.5 193.5 L346.6 193.5 L346.7 193.5 L346.8 193.5 L346.9 193.5 L347 193.5 L347.1 193.5 L347.2 193.5 L347.3 193.5 L347.4 193.5 L347.5 193.5 L347.6 193.5 L347.7 193.5 L347.8 193.5 L347.9 193.5 L348 193.5 L348.1 193.5 L348.2 193.5 L348.3 193.5 L348.4 193.5 L348.5 193.5 L348.6 193.5 L348.7 193.5 L348.8 193.5 L348.9 193.5 L349 193.5 L349.1 193.5 L349.2 193.5 L349.3 193.5 L349.4 193.5 L349.5 193.5 L349.6 193.5 L349.7 193.5 L349.8 193.5 L349.9 193.5 L350 193.5 L350.1 193.5 L350.2 193.5 L350.3 193.5 L350.4 193.5 L350.5 193.5 L350.6 193.5 L350.7 193.5 L350.8 193.5 L350.9 193.5 L351 193.5 L351.1 193.5 L351.2 193.5 L351.3 193.5 L351.4 193.5 L351.5 193.5 L351.6 193.5 L351.7 193.5 L351.8 193.5 L351.9 193.5 L352 193.5 L352.1 193.5 L352.2 193.5 L352.3 193.5 L352.4 193.5 L352.5 193.5 L352.6 193.5 L352.7 193.5 L352.8 193.5 L352.9 193.5 L353 193.5 L353.1 193.5 L353.2 193.5 L353.3 193.5 L353.4 193.5 L353.5 193.5 L353.6 193.5 L353.7 193.5 L353.8 193.5 L353.9 193.5 L354 193.5 L354.1 193.5 L354.2 193.5 L354.3 193.5 L354.4 193.5 L354.5 193.5 L354.6 193.5 L354.7 193.5 L354.8 193.5 L354.9 193.5 L355 193.5 L355.1 193.5 L355.2 193.5 L355.3 193.5 L355.4 193.5 L355.5 193.5 L355.6 193.5 L355.7 193.5 L355.8 193.5 L355.9 193.5 L356 193.5 L356.1 193.5 L356.2 193.5 L356.3 193.5 L356.4 193.5 L356.5 193.5 L356.6 193.5 L356.7 193.5 L356.8 193.5 L356.9 193.5 L357 193.5 L357.1 193.5 L357.2 193.5 L357.3 193.5 L357.4 193.5 L357.5 193.5 L357.6 193.5 L357.7 193.5 L357.8 193.5 L357.9 193.5 L358 193.5 L358.1 193.5 L358.2 193.5 L358.3 193.5 L358.4 193.5 L358.5 193.5 L358.6 193.5 L358.7 193.5 L358.8 193.5 L358.9 193.5 L359 193.5 L359.1 193.5 L359.2 193.5 L359.3 193.5 L359.4 193.5 L359.5 193.5 L359.6 193.5 L359.7 193.5 L359.8 193.5 L359.9 193.5 L360 193.49 L360.1 193.49 L360.2 193.49 L360.3 193.49 L360.4 193.49 L360.5 193.49 L360.6 193.49 L360.7 193.49 L360.8 193.49 L360.9 193.49 L361 193.49 L361.1 193.49 L361.2 193.49 L361.3 193.49 L361.4 193.49 L361.5 193.49 L361.6 193.49 L361.7 193.49 L361.8 193.49 L361.9 193.49 L362 193.49 L362.1 193.49 L362.2 193.49 L362.3 193.49 L362.4 193.49 L362.5 193.49 L362.6 193.49 L362.7 193.49 L362.8 193.49 L362.9 193.49 L363 193.49 L363.1 193.49 L363.2 193.49 L363.3 193.49 L363.4 193.49 L363.5 193.49 L363.6 193.49 L363.7 193.49 L363.8 193.49 L363.9 193.49 L364 193.49 L364.1 193.49 L364.2 193.49 L364.3 193.49 L364.4 193.49 L364.5 193.49 L364.6 193.49 L364.7 193.49 L364.8 193.49 L364.9 193.49 L365 193.49 L365.1 193.49 L365.2 193.49 L365.3 193.49 L365.4 193.49 L365.5 193.49 L365.6 193.49 L365.7 193.49 L365.8 193.49 L365.9 193.49 L366 193.49 L366.1 193.49 L366.2 193.49 L366.3 193.49 L366.4 193.49 L366.5 193.49 L366.6 193.49 L366.7 193.49 L366.8 193.49 L366.9 193.49 L367 193.49 L367.1 193.49 L367.2 193.49 L367.3 193.49 L367.4 193.49 L367.5 193.49 L367.6 193.49 L367.7 193.49 L367.8 193.5 L367.9 193.5 L368 193.5 L368.1 193.5 L368.2 193.5 L368.3 193.5 L368.4 193.5 L368.5 193.5 L368.6 193.5 L368.7 193.5 L368.8 193.5 L368.9 193.5 L369 193.5 L369.1 193.5 L369.2 193.5 L369.3 193.5 L369.4 193.5 L369.5 193.5 L369.6 193.5 L369.7 193.5 L369.8 193.5 L369.9 193.5 L370 193.5 L370.1 193.5 L370.2 193.5 L370.3 193.5 L370.4 193.5 L370.5 193.5 L370.6 193.5 L370.7 193.5 L370.8 193.5 L370.9 193.5 L371 193.5 L371.1 193.5 L371.2 193.5 L371.3 193.5 L371.4 193.5 L371.5 193.5 L371.6 193.5 L371.7 193.5 L371.8 193.5 L371.9 193.5 L372 193.5 L372.1 193.5 L372.2 193.5 L372.3 193.5 L372.4 193.5 L372.5 193.5 L372.6 193.5 L372.7 193.5 L372.8 193.5 L372.9 193.5 L373 193.5 L373.1 193.5 L373.2 193.5 L373.3 193.5 L373.4 193.5 L373.5 193.5 L373.6 193.5 L373.7 193.5 L373.8 193.5 L373.9 193.5 L374 193.5 L374.1 193.5 L374.2 193.5 L374.3 193.5 L374.4 193.5 L374.5 193.5 L374.6 193.5 L374.7 193.5 L374.8 193.5 L374.9 193.5 L375 193.5 L375.1 193.5 L375.2 193.5 L375.3 193.5 L375.4 193.5 L375.5 193.5 L375.6 193.5 L375.7 193.5 L375.8 193.5 L375.9 193.5 L376 193.5 L376.1 193.5 L376.2 193.5 L376.3 193.5 L376.4 193.5 L376.5 193.5 L376.6 193.5 L376.7 193.5 L376.8 193.5 L376.9 193.5 L377 193.5 L377.1 193.5 L377.2 193.5 L377.3 193.5 L377.4 193.5 L377.5 193.5 L377.6 193.5 L377.7 193.5 L377.8 193.5 L377.9 193.5 L378 193.5 L378.1 193.5 L378.2 193.5 L378.3 193.5 L378.4 193.5 L378.5 193.5 L378.6 193.5 L378.7 193.5 L378.8 193.5 L378.9 193.5 L379 193.5 L379.1 193.5 L379.2 193.5 L379.3 193.5 L379.4 193.5 L379.5 193.5 L379.6 193.5 L379.7 193.5 L379.8 193.5 L379.9 193.5 L380 193.5 L380.1 193.5 L380.2 193.5 L380.3 193.5 L380.4 193.5 L380.5 193.5 L380.6 193.5 L380.7 193.5 L380.8 193.5 L380.9 193.5 L381 193.5 L381.1 193.5 L381.2 193.5 L381.3 193.5 L381.4 193.5 L381.5 193.5 L381.6 193.5 L381.7 193.5 L381.8 193.5 L381.9 193.5 L382 193.5 L382.1 193.5 L382.2 193.5 L382.3 193.5 L382.4 193.5 L382.5 193.5 L382.6 193.5 L382.7 193.5 L382.8 193.5 L382.9 193.5 L383 193.5 L383.1 193.5 L383.2 193.5 L383.3 193.5 L383.4 193.5 L383.5 193.5 L383.6 193.5 L383.7 193.5 L383.8 193.5 L383.9 193.5 L384 193.5 L384.1 193.5 L384.2 193.5 L384.3 193.5 L384.4 193.5 L384.5 193.5 L384.6 193.5 L384.7 193.5 L384.8 193.5 L384.9 193.5 L385 193.5 L385.1 193.5 L385.2 193.5 L385.3 193.5 L385.4 193.5 L385.5 193.5 L385.6 193.5 L385.7 193.5 L385.8 193.5 L385.9 193.5 L386 193.5 L386.1 193.5 L386.2 193.5 L386.3 193.5 L386.4 193.5 L386.5 193.5 L386.6 193.5 L386.7 193.5 L386.8 193.5 L386.9 193.5 L387 193.5 L387.1 193.5 L387.2 193.5 L387.3 193.5 L387.4 193.5 L387.5 193.5 L387.6 193.5 L387.7 193.5 L387.8 193.5 L387.9 193.5 L388 193.5 L388.1 193.5 L388.2 193.5 L388.3 193.5 L388.4 193.5 L388.5 193.5 L388.6 193.5 L388.7 193.5 L388.8 193.5 L388.9 193.5 L389 193.5 L389.1 193.5 L389.2 193.5 L389.3 193.5 L389.4 193.5 L389.5 193.5 L389.6 193.5 L389.7 193.5 L389.8 193.5 L389.9 193.5 L390 193.5 L390.1 193.5 L390.2 193.5 L390.3 193.5 L390.4 193.5 L390.5 193.5 L390.6 193.5 L390.7 193.5 L390.8 193.5 L390.9 193.5 L391 193.5 L391.1 193.5 L391.2 193.5 L391.3 193.5 L391.4 193.5 L391.5 193.5 L391.6 193.5 L391.7 193.5 L391.8 193.5 L391.9 193.5 L392 193.51 L392.1 193.51 L392.2 193.51 L392.3 193.51 L392.4 193.51 L392.5 193.51 L392.6 193.51 L392.7 193.51 L392.8 193.51 L392.9 193.51 L393 193.51 L393.1 193.51 L393.2 193.51 L393.3 193.51 L393.4 193.51 L393.5 193.51 L393.6 193.51 L393.7 193.51 L393.8 193.51 L393.9 193.51 L394 193.51 L394.1 193.51 L394.2 193.51 L394.3 193.51 L394.4 193.51 L394.5 193.51 L394.6 193.51 L394.7 193.51 L394.8 193.51 L394.9 193.51 L395 193.51 L395.1 193.52 L395.2 193.52 L395.3 193.52 L395.4 193.52 L395.5 193.52 L395.6 193.52 L395.7 193.52 L395.8 193.52 L395.9 193.52 L396 193.52 L396.1 193.52 L396.2 193.52 L396.3 193.52 L396.4 193.52 L396.5 193.52 L396.6 193.52 L396.7 193.52 L396.8 193.52 L396.9 193.52 L397 193.53 L397.1 193.53 L397.2 193.53 L397.3 193.53 L397.4 193.53 L397.5 193.53 L397.6 193.53 L397.7 193.53 L397.8 193.53 L397.9 193.53 L398 193.53 L398.1 193.53 L398.2 193.53 L398.3 193.53 L398.4 193.54 L398.5 193.54 L398.6 193.54 L398.7 193.54 L398.8 193.54 L398.9 193.54 L399 193.54 L399.1 193.54 L399.2 193.54 L399.3 193.54 L399.4 193.54 L399.5 193.55 L399.6 193.55 L399.7 193.55 L399.8 193.55 L399.9 193.55 L400 193.55 L400.1 193.55 L400.2 193.55 L400.3 193.55 L400.4 193.55 L400.5 193.56 L400.6 193.56 L400.7 193.56 L400.8 193.56 L400.9 193.56 L401 193.56 L401.1 193.56 L401.2 193.56 L401.3 193.56 L401.4 193.56 L401.5 193.57 L401.6 193.57 L401.7 193.57 L401.8 193.57 L401.9 193.57 L402 193.57 L402.1 193.57 L402.2 193.57 L402.3 193.58 L402.4 193.58 L402.5 193.58 L402.6 193.58 L402.7 193.58 L402.8 193.58 L402.9 193.58 L403 193.59 L403.1 193.59 L403.2 193.59 L403.3 193.59 L403.4 193.59 L403.5 193.59 L403.6 193.6 L403.7 193.6 L403.8 193.6 L403.9 193.6 L404 193.6 L404.1 193.6 L404.2 193.61 L404.3 193.61 L404.4 193.61 L404.5 193.61 L404.6 193.61 L404.7 193.62 L404.8 193.62 L404.9 193.62 L405 193.62 L405.1 193.62 L405.2 193.63 L405.3 193.63 L405.4 193.63 L405.5 193.63 L405.6 193.64 L405.7 193.64 L405.8 193.64 L405.9 193.64 L406 193.65 L406.1 193.65 L406.2 193.65 L406.3 193.65 L406.4 193.66 L406.5 193.66 L406.6 193.66 L406.7 193.67 L406.8 193.67 L406.9 193.67 L407 193.68 L407.1 193.68 L407.2 193.68 L407.3 193.68 L407.4 193.69 L407.5 193.69 L407.6 193.7 L407.7 193.7 L407.8 193.7 L407.9 193.71 L408 193.71 L408.1 193.71 L408.2 193.72 L408.3 193.72 L408.4 193.73 L408.5 193.73 L408.6 193.73 L408.7 193.74 L408.8 193.74 L408.9 193.75 L409 193.75 L409.1 193.76 L409.2 193.76 L409.3 193.77 L409.4 193.77 L409.5 193.77 L409.6 193.78 L409.7 193.78 L409.8 193.79 L409.9 193.79 L410 193.8 L410.1 193.81 L410.2 193.81 L410.3 193.82 L410.4 193.82 L410.5 193.83 L410.6 193.83 L410.7 193.84 L410.8 193.84 L410.9 193.85 L411 193.85 L411.1 193.86 L411.2 193.86 L411.3 193.87 L411.4 193.87 L411.5 193.88 L411.6 193.89 L411.7 193.89 L411.8 193.9 L411.9 193.9 L412 193.91 L412.1 193.91 L412.2 193.92 L412.3 193.92 L412.4 193.93 L412.5 193.94 L412.6 193.94 L412.7 193.95 L412.8 193.95 L412.9 193.96 L413 193.96 L413.1 193.97 L413.2 193.98 L413.3 193.98 L413.4 193.99 L413.5 194 L413.6 194 L413.7 194.01 L413.8 194.01 L413.9 194.02 L414 194.03 L414.1 194.03 L414.2 194.04 L414.3 194.05 L414.4 194.05 L414.5 194.06 L414.6 194.07 L414.7 194.08 L414.8 194.08 L414.9 194.09 L415 194.1 L415.1 194.1 L415.2 194.11 L415.3 194.12 L415.4 194.13 L415.5 194.13 L415.6 194.14 L415.7 194.15 L415.8 194.16 L415.9 194.17 L416 194.17 L416.1 194.18 L416.2 194.19 L416.3 194.2 L416.4 194.21 L416.5 194.22 L416.6 194.23 L416.7 194.23 L416.8 194.24 L416.9 194.25 L417 194.26 L417.1 194.27 L417.2 194.28 L417.3 194.29 L417.4 194.3 L417.5 194.31 L417.6 194.32 L417.7 194.33 L417.8 194.34 L417.9 194.35 L418 194.36 L418.1 194.37 L418.2 194.38 L418.3 194.39 L418.4 194.4 L418.5 194.42 L418.6 194.43 L418.7 194.44 L418.8 194.45 L418.9 194.46 L419 194.47 L419.1 194.48 L419.2 194.5 L419.3 194.51 L419.4 194.52 L419.5 194.53 L419.6 194.55 L419.7 194.56 L419.8 194.57 L419.9 194.59 L420 194.6 L420.1 194.61 L420.2 194.63 L420.3 194.64 L420.4 194.65 L420.5 194.67 L420.6 194.68 L420.7 194.7 L420.8 194.71 L420.9 194.72 L421 194.74 L421.1 194.75 L421.2 194.76 L421.3 194.78 L421.4 194.79 L421.5 194.81 L421.6 194.82 L421.7 194.83 L421.8 194.85 L421.9 194.86 L422 194.88 L422.1 194.89 L422.2 194.91 L422.3 194.92 L422.4 194.94 L422.5 194.95 L422.6 194.97 L422.7 194.98 L422.8 195 L422.9 195.01 L423 195.03 L423.1 195.04 L423.2 195.06 L423.3 195.07 L423.4 195.09 L423.5 195.1 L423.6 195.12 L423.7 195.14 L423.8 195.15 L423.9 195.17 L424 195.18 L424.1 195.2 L424.2 195.22 L424.3 195.23 L424.4 195.25 L424.5 195.27 L424.6 195.29 L424.7 195.3 L424.8 195.32 L424.9 195.34 L425 195.36 L425.1 195.37 L425.2 195.39 L425.3 195.41 L425.4 195.43 L425.5 195.45 L425.6 195.47 L425.7 195.49 L425.8 195.5 L425.9 195.52 L426 195.54 L426.1 195.56 L426.2 195.58 L426.3 195.6 L426.4 195.62 L426.5 195.64 L426.6 195.66 L426.7 195.68 L426.8 195.71 L426.9 195.73 L427 195.75 L427.1 195.77 L427.2 195.79 L427.3 195.81 L427.4 195.84 L427.5 195.86 L427.6 195.88 L427.7 195.9 L427.8 195.93 L427.9 195.95 L428 195.97 L428.1 196 L428.2 196.02 L428.3 196.05 L428.4 196.07 L428.5 196.1 L428.6 196.12 L428.7 196.15 L428.8 196.17 L428.9 196.2 L429 196.22 L429.1 196.25 L429.2 196.28 L429.3 196.3 L429.4 196.33 L429.5 196.36 L429.6 196.39 L429.7 196.41 L429.8 196.44 L429.9 196.47 L430 196.5 L430.1 196.53 L430.2 196.56 L430.3 196.59 L430.4 196.62 L430.5 196.65 L430.6 196.68 L430.7 196.71 L430.8 196.74 L430.9 196.77 L431 196.8 L431.1 196.84 L431.2 196.87 L431.3 196.9 L431.4 196.93 L431.5 196.97 L431.6 197 L431.7 197.03 L431.8 197.07 L431.9 197.1 L432 197.13 L432.1 197.17 L432.2 197.2 L432.3 197.24 L432.4 197.27 L432.5 197.31 L432.6 197.34 L432.7 197.38 L432.8 197.42 L432.9 197.45 L433 197.49 L433.1 197.52 L433.2 197.56 L433.3 197.6 L433.4 197.64 L433.5 197.67 L433.6 197.71 L433.7 197.75 L433.8 197.79 L433.9 197.82 L434 197.86 L434.1 197.9 L434.2 197.94 L434.3 197.98 L434.4 198.02 L434.5 198.06 L434.6 198.1 L434.7 198.14 L434.8 198.18 L434.9 198.22 L435 198.26 L435.1 198.3 L435.2 198.34 L435.3 198.38 L435.4 198.42 L435.5 198.46 L435.6 198.5 L435.7 198.54 L435.8 198.58 L435.9 198.62 L436 198.66 L436.1 198.71 L436.2 198.75 L436.3 198.79 L436.4 198.83 L436.5 198.87 L436.6 198.92 L436.7 198.96 L436.8 199 L436.9 199.04 L437 199.09 L437.1 199.13 L437.2 199.17 L437.3 199.21 L437.4 199.26 L437.5 199.3 L437.6 199.34 L437.7 199.39 L437.8 199.43 L437.9 199.47 L438 199.52 L438.1 199.56 L438.2 199.6 L438.3 199.65 L438.4 199.69 L438.5 199.74 L438.6 199.78 L438.7 199.82 L438.8 199.87 L438.9 199.91 L439 199.96 L439.1 200 L439.2 200.04 L439.3 200.09 L439.4 200.13 L439.5 200.18 L439.6 200.22 L439.7 200.27 L439.8 200.31 L439.9 200.36 L440 200.4 L440.1 200.44 L440.2 200.49 L440.3 200.53 L440.4 200.58 L440.5 200.63 L440.6 200.67 L440.7 200.72 L440.8 200.76 L440.9 200.81 L441 200.86 L441.1 200.9 L441.2 200.95 L441.3 201 L441.4 201.04 L441.5 201.09 L441.6 201.14 L441.7 201.19 L441.8 201.23 L441.9 201.28 L442 201.33 L442.1 201.38 L442.2 201.43 L442.3 201.48 L442.4 201.53 L442.5 201.57 L442.6 201.62 L442.7 201.67 L442.8 201.72 L442.9 201.77 L443 201.82 L443.1 201.87 L443.2 201.92 L443.3 201.97 L443.4 202.02 L443.5 202.07 L443.6 202.12 L443.7 202.17 L443.8 202.22 L443.9 202.27 L444 202.32 L444.1 202.37 L444.2 202.43 L444.3 202.48 L444.4 202.53 L444.5 202.58 L444.6 202.63 L444.7 202.68 L444.8 202.73 L444.9 202.78 L445 202.84 L445.1 202.89 L445.2 202.94 L445.3 202.99 L445.4 203.04 L445.5 203.09 L445.6 203.15 L445.7 203.2 L445.8 203.25 L445.9 203.3 L446 203.35 L446.1 203.4 L446.2 203.46 L446.3 203.51 L446.4 203.56 L446.5 203.61 L446.6 203.66 L446.7 203.71 L446.8 203.77 L446.9 203.82 L447 203.87 L447.1 203.92 L447.2 203.97 L447.3 204.03 L447.4 204.08 L447.5 204.13 L447.6 204.18 L447.7 204.23 L447.8 204.28 L447.9 204.34 L448 204.39 L448.1 204.44 L448.2 204.49 L448.3 204.54 L448.4 204.59 L448.5 204.64 L448.6 204.69 L448.7 204.75 L448.8 204.8 L448.9 204.85 L449 204.9 L449.1 204.95 L449.2 205 L449.3 205.05 L449.4 205.1 L449.5 205.15 L449.6 205.2 L449.7 205.25 L449.8 205.3 L449.9 205.35 L450 205.4 L450.1 205.45 L450.2 205.5 L450.3 205.55 L450.4 205.59 L450.5 205.64 L450.6 205.69 L450.7 205.74 L450.8 205.78 L450.9 205.83 L451 205.87 L451.1 205.92 L451.2 205.97 L451.3 206.01 L451.4 206.06 L451.5 206.1 L451.6 206.15 L451.7 206.19 L451.8 206.24 L451.9 206.28 L452 206.33 L452.1 206.37 L452.2 206.42 L452.3 206.46 L452.4 206.51 L452.5 206.56 L452.6 206.6 L452.7 206.65 L452.8 206.7 L452.9 206.75 L453 206.8 L453.1 206.84 L453.2 206.89 L453.3 206.94 L453.4 206.99 L453.5 207.05 L453.6 207.1 L453.7 207.15 L453.8 207.2 L453.9 207.26 L454 207.31 L454.1 207.37 L454.2 207.42 L454.3 207.48 L454.4 207.54 L454.5 207.6 L454.6 207.66 L454.7 207.72 L454.8 207.78 L454.9 207.85 L455 207.91 L455.1 207.97 L455.2 208.04 L455.3 208.1 L455.4 208.17 L455.5 208.24 L455.6 208.3 L455.7 208.37 L455.8 208.44 L455.9 208.51 L456 208.58 L456.1 208.65 L456.2 208.72 L456.3 208.79 L456.4 208.86 L456.5 208.93 L456.6 209 L456.7 209.07 L456.8 209.14 L456.9 209.21 L457 209.29 L457.1 209.36 L457.2 209.43 L457.3 209.5 L457.4 209.58 L457.5 209.65 L457.6 209.72 L457.7 209.79 L457.8 209.87 L457.9 209.94 L458 210.01 L458.1 210.08 L458.2 210.16 L458.3 210.23 L458.4 210.3 L458.5 210.37 L458.6 210.44 L458.7 210.51 L458.8 210.58 L458.9 210.65 L459 210.72 L459.1 210.79 L459.2 210.86 L459.3 210.93 L459.4 211 L459.5 211.07 L459.6 211.14 L459.7 211.2 L459.8 211.27 L459.9 211.33 L460 211.4 L460.1 211.46 L460.2 211.53 L460.3 211.59 L460.4 211.66 L460.5 211.72 L460.6 211.79 L460.7 211.85 L460.8 211.92 L460.9 211.98 L461 212.04 L461.1 212.11 L461.2 212.17 L461.3 212.24 L461.4 212.3 L461.5 212.36 L461.6 212.43 L461.7 212.49 L461.8 212.55 L461.9 212.61 L462 212.68 L462.1 212.74 L462.2 212.8 L462.3 212.86 L462.4 212.92 L462.5 212.98 L462.6 213.05 L462.7 213.11 L462.8 213.17 L462.9 213.23 L463 213.29 L463.1 213.35 L463.2 213.4 L463.3 213.46 L463.4 213.52 L463.5 213.58 L463.6 213.64 L463.7 213.69 L463.8 213.75 L463.9 213.81 L464 213.86 L464.1 213.92 L464.2 213.97 L464.3 214.03 L464.4 214.08 L464.5 214.14 L464.6 214.19 L464.7 214.24 L464.8 214.3 L464.9 214.35 L465 214.4 L465.1 214.45 L465.2 214.5 L465.3 214.56 L465.4 214.61 L465.5 214.66 L465.6 214.71 L465.7 214.77 L465.8 214.82 L465.9 214.87 L466 214.92 L466.1 214.97 L466.2 215.02 L466.3 215.07 L466.4 215.11 L466.5 215.15 L466.6 215.2 L466.7 215.24 L466.8 215.27 L466.9 215.31 L467 215.34 L467.1 215.37 L467.2 215.4 L467.3 215.43 L467.4 215.45 L467.5 215.47 L467.6 215.48 L467.7 215.49 L467.8 215.5 L467.9 215.5 L468 215.5 L468.1 215.5 L468.2 215.49 L468.3 215.48 L468.4 215.47 L468.5 215.46 L468.6 215.45 L468.7 215.43 L468.8 215.41 L468.9 215.39 L469 215.37 L469.1 215.34 L469.2 215.32 L469.3 215.28 L469.4 215.25 L469.5 215.21 L469.6 215.17 L469.7 215.13 L469.8 215.08 L469.9 215.03 L470 214.97 L470.1 214.92 L470.2 214.85 L470.3 214.79 L470.4 214.72 L470.5 214.64 L470.6 214.56 L470.7 214.48 L470.8 214.39 L470.9 214.3 L471 214.2 L471.1 214.1 L471.2 213.99 L471.3 213.87 L471.4 213.75 L471.5 213.63 L471.6 213.5 L471.7 213.36 L471.8 213.22 L471.9 213.08 L472 212.93 L472.1 212.78 L472.2 212.63 L472.3 212.47 L472.4 212.31 L472.5 212.14 L472.6 211.98 L472.7 211.81 L472.8 211.64 L472.9 211.46 L473 211.29 L473.1 211.11 L473.2 210.94 L473.3 210.76 L473.4 210.58 L473.5 210.4 L473.6 210.22 L473.7 210.04 L473.8 209.86 L473.9 209.68 L474 209.5 L474.1 209.32 L474.2 209.14 L474.3 208.95 L474.4 208.76 L474.5 208.57 L474.6 208.37 L474.7 208.18 L474.8 207.98 L474.9 207.78 L475 207.57 L475.1 207.37 L475.2 207.16 L475.3 206.96 L475.4 206.75 L475.5 206.54 L475.6 206.34 L475.7 206.13 L475.8 205.92 L475.9 205.71 L476 205.5 L476.1 205.3 L476.2 205.09 L476.3 204.89 L476.4 204.68 L476.5 204.48 L476.6 204.28 L476.7 204.08 L476.8 203.89 L476.9 203.69 L477 203.5 L477.1 203.31 L477.2 203.12 L477.3 202.92 L477.4 202.73 L477.5 202.54 L477.6 202.34 L477.7 202.15 L477.8 201.96 L477.9 201.77 L478 201.59 L478.1 201.4 L478.2 201.23 L478.3 201.05 L478.4 200.88 L478.5 200.72 L478.6 200.57 L478.7 200.42 L478.8 200.28 L478.9 200.14 L479 200.02 L479.1 199.9 L479.2 199.79 L479.3 199.68 L479.4 199.58 L479.5 199.48 L479.6 199.39 L479.7 199.3 L479.8 199.21 L479.9 199.13 L480 199.05 L480.1 198.97 L480.2 198.9 L480.3 198.82 L480.4 198.75 L480.5 198.68 L480.6 198.62 L480.7 198.55 L480.8 198.49 L480.9 198.43 L481 198.37 L481.1 198.32 L481.2 198.27 L481.3 198.22 L481.4 198.18 L481.5 198.14 L481.6 198.13 L481.7 198.13 L481.8 198.13 L481.9 198.13 L482 198.14 L482.1 198.15 L482.2 198.17 L482.3 198.19 L482.4 198.21 L482.5 198.24 L482.6 198.27 L482.7 198.31 L482.8 198.35 L482.9 198.4 L483 198.46 L483.1 198.52 L483.2 198.58 L483.3 198.66 L483.4 198.73 L483.5 198.82 L483.6 198.9 L483.7 199 L483.8 199.09 L483.9 199.19" fill="none" stroke="url(#combStroke)" stroke-width="1.2"/>
<path d="M483.9 199.19 L484 199.3 L484.1 199.4 L484.2 199.52 L484.3 199.63 L484.4 199.75 L484.5 199.88 L484.6 200.01 L484.7 200.15 L484.8 200.29 L484.9 200.43 L485 200.58 L485.1 200.74 L485.2 200.89 L485.3 201.05 L485.4 201.22 L485.5 201.39 L485.6 201.57 L485.7 201.74 L485.8 201.93 L485.9 202.11 L486 202.3 L486.1 202.49 L486.2 202.69 L486.3 202.89 L486.4 203.09 L486.5 203.3 L486.6 203.51 L486.7 203.72 L486.8 203.94 L486.9 204.15 L487 204.38 L487.1 204.6 L487.2 204.83 L487.3 205.06 L487.4 205.29 L487.5 205.52 L487.6 205.76 L487.7 206 L487.8 206.24 L487.9 206.48 L488 206.72 L488.1 206.97 L488.2 207.22 L488.3 207.47 L488.4 207.72 L488.5 207.98 L488.6 208.23 L488.7 208.49 L488.8 208.75 L488.9 209.01 L489 209.27 L489.1 209.53 L489.2 209.79 L489.3 210.06 L489.4 210.32 L489.5 210.59 L489.6 210.85 L489.7 211.12 L489.8 211.39 L489.9 211.66 L490 211.93 L490.1 212.2 L490.2 212.47 L490.3 212.75 L490.4 213.02 L490.5 213.29 L490.6 213.57 L490.7 213.84 L490.8 214.11 L490.9 214.39 L491 214.66 L491.1 214.94 L491.2 215.21 L491.3 215.49 L491.4 215.76 L491.5 216.04 L491.6 216.31 L491.7 216.59 L491.8 216.86 L491.9 217.14 L492 217.41 L492.1 217.69 L492.2 217.96 L492.3 218.24 L492.4 218.51 L492.5 218.79 L492.6 219.06 L492.7 219.33 L492.8 219.61 L492.9 219.88 L493 220.15 L493.1 220.42 L493.2 220.69 L493.3 220.96 L493.4 221.23 L493.5 221.5 L493.6 221.77 L493.7 222.04 L493.8 222.31 L493.9 222.58 L494 222.84 L494.1 223.11 L494.2 223.38 L494.3 223.64 L494.4 223.91 L494.5 224.17 L494.6 224.43 L494.7 224.7 L494.8 224.96 L494.9 225.22 L495 225.48 L495.1 225.74 L495.2 226 L495.3 226.25 L495.4 226.51 L495.5 226.77 L495.6 227.02 L495.7 227.28 L495.8 227.53 L495.9 227.78 L496 228.04 L496.1 228.29 L496.2 228.54 L496.3 228.79 L496.4 229.04 L496.5 229.28 L496.6 229.53 L496.7 229.78 L496.8 230.02 L496.9 230.27 L497 230.51 L497.1 230.75 L497.2 230.99 L497.3 231.23 L497.4 231.47 L497.5 231.71 L497.6 231.95 L497.7 232.18 L497.8 232.42 L497.9 232.65 L498 232.89 L498.1 233.12 L498.2 233.35 L498.3 233.58 L498.4 233.81 L498.5 234.04 L498.6 234.27 L498.7 234.5 L498.8 234.72 L498.9 234.95 L499 235.17 L499.1 235.39 L499.2 235.61 L499.3 235.83 L499.4 236.05 L499.5 236.27 L499.6 236.49 L499.7 236.71 L499.8 236.92 L499.9 237.13 L500 237.35 L500.1 237.56 L500.2 237.77 L500.3 237.98 L500.4 238.19 L500.5 238.4 L500.6 238.6 L500.7 238.81 L500.8 239.01 L500.9 239.22 L501 239.42 L501.1 239.62 L501.2 239.82 L501.3 240.02 L501.4 240.22 L501.5 240.42 L501.6 240.61 L501.7 240.81 L501.8 241 L501.9 241.19 L502 241.38 L502.1 241.58 L502.2 241.76 L502.3 241.95 L502.4 242.14 L502.5 242.33 L502.6 242.51 L502.7 242.69 L502.8 242.88 L502.9 243.06 L503 243.24 L503.1 243.42 L503.2 243.59 L503.3 243.77 L503.4 243.95 L503.5 244.12 L503.6 244.3 L503.7 244.47 L503.8 244.64 L503.9 244.81 L504 244.98 L504.1 245.14 L504.2 245.31 L504.3 245.48 L504.4 245.64 L504.5 245.8 L504.6 245.97 L504.7 246.13 L504.8 246.29 L504.9 246.44 L505 246.6 L505.1 246.76 L505.2 246.91 L505.3 247.07 L505.4 247.22 L505.5 247.37 L505.6 247.52 L505.7 247.67 L505.8 247.81 L505.9 247.96 L506 248.11 L506.1 248.25 L506.2 248.39 L506.3 248.53 L506.4 248.67 L506.5 248.81 L506.6 248.95 L506.7 249.09 L506.8 249.22 L506.9 249.36 L507 249.49 L507.1 249.62 L507.2 249.75 L507.3 249.88 L507.4 250.01 L507.5 250.14 L507.6 250.26 L507.7 250.38 L507.8 250.51 L507.9 250.63 L508 250.75 L508.1 250.87 L508.2 250.99 L508.3 251.1 L508.4 251.22 L508.5 251.33 L508.6 251.44 L508.7 251.55 L508.8 251.66 L508.9 251.77 L509 251.88 L509.1 251.98 L509.2 252.09 L509.3 252.19 L509.4 252.29 L509.5 252.39 L509.6 252.49 L509.7 252.59 L509.8 252.69 L509.9 252.78 L510 252.88 L510.1 252.97 L510.2 253.06 L510.3 253.15 L510.4 253.24 L510.5 253.32 L510.6 253.41 L510.7 253.49 L510.8 253.57 L510.9 253.66 L511 253.74 L511.1 253.81 L511.2 253.89 L511.3 253.97 L511.4 254.04 L511.5 254.11 L511.6 254.18 L511.7 254.25 L511.8 254.32 L511.9 254.39 L512 254.45 L512.1 254.51 L512.2 254.58 L512.3 254.64 L512.4 254.7 L512.5 254.75 L512.6 254.81 L512.7 254.86 L512.8 254.91 L512.9 254.97 L513 255.02 L513.1 255.06 L513.2 255.11 L513.3 255.15 L513.4 255.2 L513.5 255.24 L513.6 255.28 L513.7 255.32 L513.8 255.35 L513.9 255.39 L514 255.42 L514.1 255.45 L514.2 255.48 L514.3 255.51 L514.4 255.54 L514.5 255.56 L514.6 255.59 L514.7 255.61 L514.8 255.63 L514.9 255.65 L515 255.66 L515.1 255.68 L515.2 255.69 L515.3 255.7 L515.4 255.71 L515.5 255.72 L515.6 255.72 L515.7 255.73 L515.8 255.73 L515.9 255.73 L516 255.73 L516.1 255.72 L516.2 255.72 L516.3 255.71 L516.4 255.7 L516.5 255.69 L516.6 255.68 L516.7 255.66 L516.8 255.64 L516.9 255.62 L517 255.6 L517.1 255.58 L517.2 255.55 L517.3 255.53 L517.4 255.5 L517.5 255.47 L517.6 255.43 L517.7 255.4 L517.8 255.36 L517.9 255.32 L518 255.28 L518.1 255.23 L518.2 255.19 L518.3 255.14 L518.4 255.09 L518.5 255.03 L518.6 254.98 L518.7 254.92 L518.8 254.86 L518.9 254.8 L519 254.73 L519.1 254.67 L519.2 254.6 L519.3 254.53 L519.4 254.45 L519.5 254.38 L519.6 254.3 L519.7 254.22 L519.8 254.13 L519.9 254.05 L520 253.96 L520.1 253.87 L520.2 253.77 L520.3 253.68 L520.4 253.58 L520.5 253.47 L520.6 253.37 L520.7 253.26 L520.8 253.15 L520.9 253.04 L521 252.93 L521.1 252.81 L521.2 252.69 L521.3 252.56 L521.4 252.44 L521.5 252.31 L521.6 252.17 L521.7 252.04 L521.8 251.9 L521.9 251.76 L522 251.61 L522.1 251.47 L522.2 251.32 L522.3 251.16 L522.4 251 L522.5 250.84 L522.6 250.68 L522.7 250.51 L522.8 250.34 L522.9 250.17 L523 249.99 L523.1 249.81 L523.2 249.63 L523.3 249.44 L523.4 249.25 L523.5 249.06 L523.6 248.86 L523.7 248.66 L523.8 248.45 L523.9 248.24 L524 248.03 L524.1 247.81 L524.2 247.59 L524.3 247.37 L524.4 247.14 L524.5 246.91 L524.6 246.67 L524.7 246.43 L524.8 246.19 L524.9 245.94 L525 245.69 L525.1 245.43 L525.2 245.17 L525.3 244.9 L525.4 244.63 L525.5 244.36 L525.6 244.08 L525.7 243.79 L525.8 243.5 L525.9 243.21 L526 242.91 L526.1 242.61 L526.2 242.3 L526.3 241.99 L526.4 241.67 L526.5 241.34 L526.6 241.02 L526.7 240.68 L526.8 240.34 L526.9 240 L527 239.65 L527.1 239.29 L527.2 238.93 L527.3 238.56 L527.4 238.19 L527.5 237.81 L527.6 237.43 L527.7 237.04 L527.8 236.64 L527.9 236.24 L528 235.83 L528.1 235.42 L528.2 235 L528.3 234.57 L528.4 234.14 L528.5 233.7 L528.6 233.25 L528.7 232.8 L528.8 232.34 L528.9 231.87 L529 231.39 L529.1 230.91 L529.2 230.43 L529.3 229.93 L529.4 229.43 L529.5 228.92 L529.6 228.4 L529.7 227.88 L529.8 227.35 L529.9 226.81 L530 226.26 L530.1 225.71 L530.2 225.15 L530.3 224.58 L530.4 224.01 L530.5 223.43 L530.6 222.84 L530.7 222.24 L530.8 221.64 L530.9 221.03 L531 220.41 L531.1 219.79 L531.2 219.16 L531.3 218.52 L531.4 217.88 L531.5 217.23 L531.6 216.58 L531.7 215.92 L531.8 215.26 L531.9 214.59 L532 213.92 L532.1 213.24 L532.2 212.57 L532.3 211.89 L532.4 211.21 L532.5 210.53 L532.6 209.86 L532.7 209.18 L532.8 208.51 L532.9 207.84 L533 207.18 L533.1 206.53 L533.2 205.88 L533.3 205.25 L533.4 204.62 L533.5 204.02 L533.6 203.43 L533.7 202.85 L533.8 202.3 L533.9 201.77 L534 201.26 L534.1 200.79 L534.2 200.34 L534.3 199.92 L534.4 199.54 L534.5 199.19 L534.6 198.89 L534.7 198.62 L534.8 198.4 L534.9 198.22 L535 198.08 L535.1 197.99 L535.2 197.95 L535.3 197.96 L535.4 198.02 L535.5 198.12 L535.6 198.27 L535.7 198.47 L535.8 198.72 L535.9 199.01 L536 199.34 L536.1 199.71 L536.2 200.13 L536.3 200.58 L536.4 201.07 L536.5 201.59 L536.6 202.14 L536.7 202.72 L536.8 203.33 L536.9 203.96 L537 204.61 L537.1 205.29 L537.2 205.98 L537.3 206.68 L537.4 207.4 L537.5 208.13 L537.6 208.87 L537.7 209.62 L537.8 210.37 L537.9 211.13 L538 211.89 L538.1 212.66 L538.2 213.42 L538.3 214.19 L538.4 214.95 L538.5 215.72 L538.6 216.48 L538.7 217.24 L538.8 217.99 L538.9 218.74 L539 219.49 L539.1 220.23 L539.2 220.96 L539.3 221.69 L539.4 222.41 L539.5 223.13 L539.6 223.84 L539.7 224.54 L539.8 225.23 L539.9 225.92 L540 226.6 L540.1 227.27 L540.2 227.93 L540.3 228.58 L540.4 229.23 L540.5 229.86 L540.6 230.49 L540.7 231.11 L540.8 231.73 L540.9 232.33 L541 232.93 L541.1 233.51 L541.2 234.09 L541.3 234.67 L541.4 235.23 L541.5 235.78 L541.6 236.33 L541.7 236.87 L541.8 237.4 L541.9 237.92 L542 238.43 L542.1 238.94 L542.2 239.44 L542.3 239.93 L542.4 240.41 L542.5 240.88 L542.6 241.35 L542.7 241.81 L542.8 242.26 L542.9 242.7 L543 243.14 L543.1 243.57 L543.2 243.99 L543.3 244.4 L543.4 244.81 L543.5 245.21 L543.6 245.6 L543.7 245.98 L543.8 246.36 L543.9 246.73 L544 247.09 L544.1 247.45 L544.2 247.79 L544.3 248.13 L544.4 248.47 L544.5 248.8 L544.6 249.12 L544.7 249.43 L544.8 249.73 L544.9 250.03 L545 250.33 L545.1 250.61 L545.2 250.89 L545.3 251.16 L545.4 251.43 L545.5 251.69 L545.6 251.94 L545.7 252.18 L545.8 252.42 L545.9 252.65 L546 252.88 L546.1 253.1 L546.2 253.31 L546.3 253.51 L546.4 253.71 L546.5 253.9 L546.6 254.09 L546.7 254.27 L546.8 254.44 L546.9 254.6 L547 254.76 L547.1 254.91 L547.2 255.06 L547.3 255.2 L547.4 255.33 L547.5 255.46 L547.6 255.57 L547.7 255.69 L547.8 255.79 L547.9 255.89 L548 255.98 L548.1 256.06 L548.2 256.14 L548.3 256.21 L548.4 256.28 L548.5 256.33 L548.6 256.38 L548.7 256.43 L548.8 256.46 L548.9 256.49 L549 256.52 L549.1 256.53 L549.2 256.54 L549.3 256.54 L549.4 256.53 L549.5 256.52 L549.6 256.5 L549.7 256.47 L549.8 256.43 L549.9 256.39 L550 256.34 L550.1 256.28 L550.2 256.22 L550.3 256.14 L550.4 256.06 L550.5 255.97 L550.6 255.87 L550.7 255.77 L550.8 255.65 L550.9 255.53 L551 255.4 L551.1 255.26 L551.2 255.12 L551.3 254.96 L551.4 254.8 L551.5 254.63 L551.6 254.44 L551.7 254.25 L551.8 254.05 L551.9 253.85 L552 253.63 L552.1 253.4 L552.2 253.17 L552.3 252.92 L552.4 252.66 L552.5 252.4 L552.6 252.12 L552.7 251.84 L552.8 251.54 L552.9 251.23 L553 250.91 L553.1 250.59 L553.2 250.25 L553.3 249.9 L553.4 249.54 L553.5 249.16 L553.6 248.78 L553.7 248.38 L553.8 247.97 L553.9 247.55 L554 247.12 L554.1 246.67 L554.2 246.21 L554.3 245.74 L554.4 245.25 L554.5 244.75 L554.6 244.23 L554.7 243.71 L554.8 243.16 L554.9 242.6 L555 242.03 L555.1 241.44 L555.2 240.84 L555.3 240.22 L555.4 239.58 L555.5 238.93 L555.6 238.26 L555.7 237.57 L555.8 236.86 L555.9 236.14 L556 235.4 L556.1 234.64 L556.2 233.86 L556.3 233.06 L556.4 232.24 L556.5 231.41 L556.6 230.55 L556.7 229.67 L556.8 228.77 L556.9 227.85 L557 226.91 L557.1 225.95 L557.2 224.97 L557.3 223.97 L557.4 222.95 L557.5 221.91 L557.6 220.85 L557.7 219.77 L557.8 218.67 L557.9 217.56 L558 216.43 L558.1 215.29 L558.2 214.14 L558.3 212.99 L558.4 211.83 L558.5 210.66 L558.6 209.51 L558.7 208.36 L558.8 207.23 L558.9 206.13 L559 205.05 L559.1 204.01 L559.2 203.02 L559.3 202.09 L559.4 201.23 L559.5 200.45 L559.6 199.76 L559.7 199.17 L559.8 198.7 L559.9 198.34 L560 198.1 L560.1 198 L560.2 198.03 L560.3 198.19 L560.4 198.49 L560.5 198.91 L560.6 199.45 L560.7 200.1 L560.8 200.86 L560.9 201.71 L561 202.65 L561.1 203.65 L561.2 204.72 L561.3 205.83 L561.4 206.99 L561.5 208.18 L561.6 209.4 L561.7 210.63 L561.8 211.87 L561.9 213.12 L562 214.36 L562.1 215.61 L562.2 216.84 L562.3 218.07 L562.4 219.28 L562.5 220.48 L562.6 221.66 L562.7 222.82 L562.8 223.97 L562.9 225.09 L563 226.19 L563.1 227.27 L563.2 228.33 L563.3 229.37 L563.4 230.38 L563.5 231.37 L563.6 232.34 L563.7 233.29 L563.8 234.21 L563.9 235.11 L564 236 L564.1 236.85 L564.2 237.69 L564.3 238.51 L564.4 239.3 L564.5 240.08 L564.6 240.83 L564.7 241.56 L564.8 242.28 L564.9 242.97 L565 243.65 L565.1 244.3 L565.2 244.94 L565.3 245.56 L565.4 246.16 L565.5 246.74 L565.6 247.3 L565.7 247.84 L565.8 248.37 L565.9 248.88 L566 249.37 L566.1 249.85 L566.2 250.31 L566.3 250.75 L566.4 251.17 L566.5 251.58 L566.6 251.97 L566.7 252.35 L566.8 252.71 L566.9 253.05 L567 253.37 L567.1 253.69 L567.2 253.98 L567.3 254.26 L567.4 254.52 L567.5 254.77 L567.6 255 L567.7 255.22 L567.8 255.42 L567.9 255.6 L568 255.77 L568.1 255.92 L568.2 256.06 L568.3 256.18 L568.4 256.29 L568.5 256.38 L568.6 256.45 L568.7 256.51 L568.8 256.55 L568.9 256.58 L569 256.59 L569.1 256.58 L569.2 256.56 L569.3 256.52 L569.4 256.47 L569.5 256.39 L569.6 256.3 L569.7 256.2 L569.8 256.08 L569.9 255.94 L570 255.78 L570.1 255.6 L570.2 255.41 L570.3 255.2 L570.4 254.97 L570.5 254.72 L570.6 254.45 L570.7 254.16 L570.8 253.86 L570.9 253.53 L571 253.19 L571.1 252.82 L571.2 252.43 L571.3 252.02 L571.4 251.59 L571.5 251.14 L571.6 250.66 L571.7 250.17 L571.8 249.64 L571.9 249.1 L572 248.53 L572.1 247.93 L572.2 247.31 L572.3 246.67 L572.4 245.99 L572.5 245.29 L572.6 244.56 L572.7 243.8 L572.8 243.02 L572.9 242.2 L573 241.35 L573.1 240.47 L573.2 239.55 L573.3 238.6 L573.4 237.62 L573.5 236.6 L573.6 235.54 L573.7 234.45 L573.8 233.32 L573.9 232.15 L574 230.94 L574.1 229.69 L574.2 228.4 L574.3 227.07 L574.4 225.7 L574.5 224.28 L574.6 222.83 L574.7 221.34 L574.8 219.81 L574.9 218.25 L575 216.66 L575.1 215.05 L575.2 213.41 L575.3 211.77 L575.4 210.13 L575.5 208.51 L575.6 206.92 L575.7 205.37 L575.8 203.91 L575.9 202.54 L576 201.3 L576.1 200.22 L576.2 199.33 L576.3 198.64 L576.4 198.2 L576.5 198.01 L576.6 198.07 L576.7 198.4 L576.8 198.98 L576.9 199.79 L577 200.81 L577.1 202.01 L577.2 203.36 L577.3 204.84 L577.4 206.41 L577.5 208.05 L577.6 209.74 L577.7 211.45 L577.8 213.18 L577.9 214.91 L578 216.63 L578.1 218.32 L578.2 219.99 L578.3 221.62 L578.4 223.22 L578.5 224.79 L578.6 226.31 L578.7 227.79 L578.8 229.22 L578.9 230.61 L579 231.96 L579.1 233.27 L579.2 234.53 L579.3 235.75 L579.4 236.93 L579.5 238.07 L579.6 239.17 L579.7 240.22 L579.8 241.24 L579.9 242.23 L580 243.17 L580.1 244.08 L580.2 244.95 L580.3 245.78 L580.4 246.58 L580.5 247.35 L580.6 248.08 L580.7 248.78 L580.8 249.45 L580.9 250.09 L581 250.69 L581.1 251.26 L581.2 251.81 L581.3 252.32 L581.4 252.8 L581.5 253.25 L581.6 253.68 L581.7 254.07 L581.8 254.44 L581.9 254.77 L582 255.08 L582.1 255.36 L582.2 255.61 L582.3 255.83 L582.4 256.03 L582.5 256.19 L582.6 256.33 L582.7 256.44 L582.8 256.52 L582.9 256.57 L583 256.59 L583.1 256.59 L583.2 256.55 L583.3 256.49 L583.4 256.4 L583.5 256.28 L583.6 256.12 L583.7 255.94 L583.8 255.73 L583.9 255.48 L584 255.2 L584.1 254.9 L584.2 254.55 L584.3 254.18 L584.4 253.77 L584.5 253.33 L584.6 252.85 L584.7 252.34 L584.8 251.79 L584.9 251.2 L585 250.57 L585.1 249.9 L585.2 249.2 L585.3 248.45 L585.4 247.66 L585.5 246.82 L585.6 245.94 L585.7 245.01 L585.8 244.04 L585.9 243.01 L586 241.93 L586.1 240.8 L586.2 239.62 L586.3 238.37 L586.4 237.07 L586.5 235.71 L586.6 234.29 L586.7 232.8 L586.8 231.24 L586.9 229.62 L587 227.94 L587.1 226.18 L587.2 224.36 L587.3 222.47 L587.4 220.51 L587.5 218.5 L587.6 216.44 L587.7 214.35 L587.8 212.23 L587.9 210.1 L588 208.01 L588.1 205.98 L588.2 204.06 L588.3 202.31 L588.4 200.77 L588.5 199.53 L588.6 198.62 L588.7 198.11 L588.8 198.02 L588.9 198.36 L589 199.11 L589.1 200.25 L589.2 201.7 L589.3 203.42 L589.4 205.33 L589.5 207.39 L589.6 209.53 L589.7 211.73 L589.8 213.94 L589.9 216.14 L590 218.31 L590.1 220.43 L590.2 222.5 L590.3 224.51 L590.4 226.45 L590.5 228.32 L590.6 230.11 L590.7 231.84 L590.8 233.5 L590.9 235.09 L591 236.61 L591.1 238.06 L591.2 239.45 L591.3 240.77 L591.4 242.03 L591.5 243.23 L591.6 244.37 L591.7 245.45 L591.8 246.47 L591.9 247.44 L592 248.36 L592.1 249.22 L592.2 250.03 L592.3 250.79 L592.4 251.5 L592.5 252.16 L592.6 252.78 L592.7 253.35 L592.8 253.87 L592.9 254.34 L593 254.77 L593.1 255.15 L593.2 255.49 L593.3 255.78 L593.4 256.03 L593.5 256.23 L593.6 256.39 L593.7 256.5 L593.8 256.57 L593.9 256.6 L594 256.58 L594.1 256.51 L594.2 256.4 L594.3 256.24 L594.4 256.04 L594.5 255.79 L594.6 255.49 L594.7 255.14 L594.8 254.74 L594.9 254.29 L595 253.79 L595.1 253.24 L595.2 252.63 L595.3 251.96 L595.4 251.24 L595.5 250.46 L595.6 249.62 L595.7 248.72 L595.8 247.75 L595.9 246.72 L596 245.61 L596.1 244.44 L596.2 243.19 L596.3 241.86 L596.4 240.45 L596.5 238.95 L596.6 237.37 L596.7 235.7 L596.8 233.94 L596.9 232.08 L597 230.11 L597.1 228.05 L597.2 225.89 L597.3 223.62 L597.4 221.26 L597.5 218.81 L597.6 216.28 L597.7 213.7 L597.8 211.1 L597.9 208.51 L598 206.02 L598.1 203.68 L598.2 201.61 L598.3 199.92 L598.4 198.71 L598.5 198.08 L598.6 198.08 L598.7 198.72 L598.8 199.95 L598.9 201.68 L599 203.8 L599.1 206.2 L599.2 208.77 L599.3 211.43 L599.4 214.12 L599.5 216.79 L599.6 219.41 L599.7 221.95 L599.8 224.41 L599.9 226.76 L600 229.01 L600.1 231.15 L600.2 233.19 L600.3 235.12 L600.4 236.95 L600.5 238.68 L600.6 240.32 L600.7 241.86 L600.8 243.32 L600.9 244.68 L601 245.96 L601.1 247.16 L601.2 248.28 L601.3 249.32 L601.4 250.29 L601.5 251.18 L601.6 252 L601.7 252.75 L601.8 253.43 L601.9 254.04 L602 254.59 L602.1 255.06 L602.2 255.48 L602.3 255.83 L602.4 256.11 L602.5 256.33 L602.6 256.48 L602.7 256.57 L602.8 256.6 L602.9 256.56 L603 256.45 L603.1 256.28 L603.2 256.05 L603.3 255.74 L603.4 255.37 L603.5 254.92 L603.6 254.4 L603.7 253.81 L603.8 253.15 L603.9 252.4 L604 251.58 L604.1 250.68 L604.2 249.69 L604.3 248.61 L604.4 247.44 L604.5 246.17 L604.6 244.8 L604.7 243.33 L604.8 241.75 L604.9 240.06 L605 238.24 L605.1 236.3 L605.2 234.23 L605.3 232.03 L605.4 229.69 L605.5 227.2 L605.6 224.57 L605.7 221.81 L605.8 218.91 L605.9 215.91 L606 212.84 L606.1 209.76 L606.2 206.76 L606.3 203.95 L606.4 201.49 L606.5 199.57 L606.6 198.36 L606.7 198 L606.8 198.54 L606.9 199.92 L607 201.99 L607.1 204.58 L607.2 207.51 L607.3 210.61 L607.4 213.79 L607.5 216.93 L607.6 220.01 L607.7 222.97 L607.8 225.8 L607.9 228.48 L608 231.02 L608.1 233.41 L608.2 235.66 L608.3 237.77 L608.4 239.74 L608.5 241.58 L608.6 243.3 L608.7 244.89 L608.8 246.37 L608.9 247.74 L609 249 L609.1 250.15 L609.2 251.2 L609.3 252.15 L609.4 253 L609.5 253.76 L609.6 254.43 L609.7 255.01 L609.8 255.49 L609.9 255.89 L610 256.2 L610.1 256.42 L610.2 256.55 L610.3 256.6 L610.4 256.56 L610.5 256.42 L610.6 256.2 L610.7 255.89 L610.8 255.48 L610.9 254.98 L611 254.38 L611.1 253.69 L611.2 252.89 L611.3 251.98 L611.4 250.97 L611.5 249.84 L611.6 248.59 L611.7 247.22 L611.8 245.72 L611.9 244.08 L612 242.31 L612.1 240.38 L612.2 238.29 L612.3 236.03 L612.4 233.6 L612.5 230.99 L612.6 228.19 L612.7 225.19 L612.8 222.02 L612.9 218.67 L613 215.19 L613.1 211.63 L613.2 208.09 L613.3 204.74 L613.4 201.8 L613.5 199.54 L613.6 198.24 L613.7 198.08 L613.8 199.1 L613.9 201.15 L614 203.98 L614.1 207.31 L614.2 210.89 L614.3 214.54 L614.4 218.15 L614.5 221.63 L614.6 224.94 L614.7 228.07 L614.8 231 L614.9 233.74 L615 236.29 L615.1 238.66 L615.2 240.84 L615.3 242.86 L615.4 244.72 L615.5 246.42 L615.6 247.97 L615.7 249.38 L615.8 250.66 L615.9 251.8 L616 252.81 L616.1 253.7 L616.2 254.47 L616.3 255.11 L616.4 255.64 L616.5 256.05 L616.6 256.35 L616.7 256.53 L616.8 256.6 L616.9 256.55 L617 256.39 L617.1 256.1 L617.2 255.7 L617.3 255.18 L617.4 254.53 L617.5 253.75 L617.6 252.84 L617.7 251.8 L617.8 250.61 L617.9 249.27 L618 247.77 L618.1 246.11 L618.2 244.28 L618.3 242.26 L618.4 240.05 L618.5 237.63 L618.6 234.99 L618.7 232.12 L618.8 229.02 L618.9 225.67 L619 222.08 L619.1 218.27 L619.2 214.29 L619.3 210.24 L619.4 206.31 L619.5 202.75 L619.6 199.95 L619.7 198.3 L619.8 198.11 L619.9 199.42 L620 202 L620.1 205.46 L620.2 209.4 L620.3 213.52 L620.4 217.62 L620.5 221.57 L620.6 225.31 L620.7 228.8 L620.8 232.05 L620.9 235.05 L621 237.81 L621.1 240.34 L621.2 242.65 L621.3 244.76 L621.4 246.66 L621.5 248.38 L621.6 249.92 L621.7 251.28 L621.8 252.48 L621.9 253.52 L622 254.41 L622.1 255.14 L622.2 255.72 L622.3 256.15 L622.4 256.44 L622.5 256.58 L622.6 256.58 L622.7 256.43 L622.8 256.13 L622.9 255.68 L623 255.08 L623.1 254.32 L623.2 253.39 L623.3 252.3 L623.4 251.03 L623.5 249.57 L623.6 247.92 L623.7 246.07 L623.8 243.99 L623.9 241.69 L624 239.13 L624.1 236.31 L624.2 233.21 L624.3 229.81 L624.4 226.11 L624.5 222.11 L624.6 217.84 L624.7 213.36 L624.8 208.85 L624.9 204.58 L625 200.99 L625.1 198.65 L625.2 198.03 L625.3 199.3 L625.4 202.17 L625.5 206.11 L625.6 210.58 L625.7 215.19 L625.8 219.7 L625.9 223.98 L626 227.96 L626.1 231.64 L626.2 235 L626.3 238.07 L626.4 240.85 L626.5 243.36 L626.6 245.62 L626.7 247.64 L626.8 249.43 L626.9 251 L627 252.36 L627.1 253.53 L627.2 254.5 L627.3 255.28 L627.4 255.88 L627.5 256.3 L627.6 256.54 L627.7 256.6 L627.8 256.47 L627.9 256.17 L628 255.68 L628.1 255 L628.2 254.12 L628.3 253.04 L628.4 251.75 L628.5 250.24 L628.6 248.49 L628.7 246.5 L628.8 244.24 L628.9 241.7 L629 238.86 L629.1 235.69 L629.2 232.17 L629.3 228.29 L629.4 224.03 L629.5 219.42 L629.6 214.52 L629.7 209.52 L629.8 204.76 L629.9 200.81 L630 198.41 L630.1 198.19 L630.2 200.22 L630.3 203.97 L630.4 208.7 L630.5 213.77 L630.6 218.79 L630.7 223.56 L630.8 227.97 L630.9 232.01 L631 235.67 L631.1 238.97 L631.2 241.92 L631.3 244.56 L631.4 246.9 L631.5 248.95 L631.6 250.73 L631.7 252.27 L631.8 253.56 L631.9 254.61 L632 255.44 L632.1 256.04 L632.2 256.43 L632.3 256.59 L632.4 256.54 L632.5 256.27 L632.6 255.78 L632.7 255.05 L632.8 254.09 L632.9 252.89 L633 251.43 L633.1 249.7 L633.2 247.69 L633.3 245.37 L633.4 242.71 L633.5 239.71 L633.6 236.32 L633.7 232.51 L633.8 228.27 L633.9 223.58 L634 218.47 L634.1 213.05 L634.2 207.61 L634.3 202.7 L634.4 199.18 L634.5 198.01 L634.6 199.58 L634.7 203.4 L634.8 208.5 L634.9 214.05 L635 219.52 L635.1 224.67 L635.2 229.38 L635.3 233.63 L635.4 237.44 L635.5 240.83 L635.6 243.83 L635.7 246.46 L635.8 248.75 L635.9 250.72 L636 252.38 L636.1 253.75 L636.2 254.85 L636.3 255.68 L636.4 256.24 L636.5 256.54 L636.6 256.59 L636.7 256.37 L636.8 255.89 L636.9 255.13 L637 254.1 L637.1 252.78 L637.2 251.16 L637.3 249.21 L637.4 246.91 L637.5 244.24 L637.6 241.17 L637.7 237.66 L637.8 233.68 L637.9 229.18 L638 224.15 L638.1 218.63 L638.2 212.74 L638.3 206.85 L638.4 201.72 L638.5 198.51 L638.6 198.32 L638.7 201.24 L638.8 206.26 L638.9 212.19 L639 218.19 L639.1 223.86 L639.2 229.04 L639.3 233.67 L639.4 237.78 L639.5 241.4 L639.6 244.56 L639.7 247.3 L639.8 249.64 L639.9 251.62 L640 253.24 L640.1 254.54 L640.2 255.51 L640.3 256.18 L640.4 256.53 L640.5 256.58 L640.6 256.33 L640.7 255.77 L640.8 254.88 L640.9 253.67 L641 252.11 L641.1 250.19 L641.2 247.87 L641.3 245.13 L641.4 241.93 L641.5 238.23 L641.6 233.98 L641.7 229.14 L641.8 223.68 L641.9 217.64 L642 211.24 L642.1 205.01 L642.2 200.09 L642.3 198.01 L642.4 199.66 L642.5 204.35 L642.6 210.56 L642.7 217.07 L642.8 223.26 L642.9 228.88 L643 233.88 L643.1 238.27 L643.2 242.09 L643.3 245.38 L643.4 248.19 L643.5 250.55 L643.6 252.5 L643.7 254.05 L643.8 255.23 L643.9 256.04 L644 256.49 L644.1 256.59 L644.2 256.34 L644.3 255.72 L644.4 254.74 L644.5 253.37 L644.6 251.6 L644.7 249.39 L644.8 246.72 L644.9 243.55 L645 239.82 L645.1 235.47 L645.2 230.46 L645.3 224.74 L645.4 218.34 L645.5 211.47 L645.6 204.79 L645.7 199.69 L645.8 198.03 L645.9 200.65 L646 206.34 L646.1 213.23 L646.2 220.12 L646.3 226.46 L646.4 232.09 L646.5 237.02 L646.6 241.27 L646.7 244.91 L646.8 247.98 L646.9 250.54 L647 252.61 L647.1 254.23 L647.2 255.43 L647.3 256.2 L647.4 256.57 L647.5 256.53 L647.6 256.08 L647.7 255.21 L647.8 253.92 L647.9 252.16 L648 249.92 L648.1 247.16 L648.2 243.83 L648.3 239.87 L648.4 235.2 L648.5 229.77 L648.6 223.52 L648.7 216.53 L648.8 209.15 L648.9 202.42 L649 198.37 L649.1 198.96 L649.2 203.89 L649.3 210.99 L649.4 218.43 L649.5 225.36 L649.6 231.49 L649.7 236.81 L649.8 241.36 L649.9 245.21 L650 248.42 L650.1 251.04 L650.2 253.13 L650.3 254.71 L650.4 255.81 L650.5 256.43 L650.6 256.6 L650.7 256.3 L650.8 255.52 L650.9 254.27 L651 252.5 L651.1 250.19 L651.2 247.29 L651.3 243.75 L651.4 239.48 L651.5 234.42 L651.6 228.47 L651.7 221.6 L651.8 213.96 L651.9 206.19 L652 200 L652.1 198.07 L652.2 201.57 L652.3 208.56 L652.4 216.5 L652.5 224.03 L652.6 230.71 L652.7 236.45 L652.8 241.32 L652.9 245.4 L653 248.76 L653.1 251.46 L653.2 253.56 L653.3 255.1 L653.4 256.09 L653.5 256.56 L653.6 256.5 L653.7 255.92 L653.8 254.8 L653.9 253.12 L654 250.84 L654.1 247.9 L654.2 244.26 L654.3 239.81 L654.4 234.47 L654.5 228.14 L654.6 220.77 L654.7 212.59 L654.8 204.5 L654.9 198.87 L655 198.74 L655.1 204.23 L655.2 212.34 L655.3 220.64 L655.4 228.13 L655.5 234.58 L655.6 240.03 L655.7 244.55 L655.8 248.25 L655.9 251.21 L656 253.48 L656.1 255.12 L656.2 256.14 L656.3 256.58 L656.4 256.43 L656.5 255.7 L656.6 254.35 L656.7 252.36 L656.8 249.67 L656.9 246.24 L657 241.96 L657.1 236.72 L657.2 230.43 L657.3 222.98 L657.4 214.5 L657.5 205.8 L657.6 199.28 L657.7 198.58 L657.8 204.23 L657.9 212.83 L658 221.55 L658.1 229.31 L658.2 235.91 L658.3 241.4 L658.4 245.9 L658.5 249.51 L658.6 252.32 L658.7 254.39 L658.8 255.77 L658.9 256.48 L659 256.55 L659.1 255.95 L659.2 254.69 L659.3 252.72 L659.4 249.99 L659.5 246.42 L659.6 241.93 L659.7 236.37 L659.8 229.62 L659.9 221.6 L660 212.51 L660.1 203.6 L660.2 198.26 L660.3 200.16 L660.4 207.88 L660.5 217.22 L660.6 225.94 L660.7 233.42 L660.8 239.63 L660.9 244.69 L661 248.73 L661.1 251.86 L661.2 254.16 L661.3 255.69 L661.4 256.47 L661.5 256.54 L661.6 255.88 L661.7 254.47 L661.8 252.27 L661.9 249.22 L662 245.23 L662.1 240.16 L662.2 233.88 L662.3 226.22 L662.4 217.19 L662.5 207.46 L662.6 199.68 L662.7 198.63 L662.8 205.22 L662.9 214.91 L663 224.31 L663.1 232.41 L663.2 239.08 L663.3 244.48 L663.4 248.75 L663.5 252.01 L663.6 254.36 L663.7 255.86 L663.8 256.55 L663.9 256.44 L664 255.53 L664.1 253.78 L664.2 251.14 L664.3 247.53 L664.4 242.82 L664.5 236.84 L664.6 229.43 L664.7 220.47 L664.8 210.34 L664.9 201.18 L665 198.14 L665.1 203.9 L665.2 213.89 L665.3 223.83 L665.4 232.36 L665.5 239.33 L665.6 244.91 L665.7 249.25 L665.8 252.51 L665.9 254.78 L666 256.13 L666.1 256.6 L666.2 256.19 L666.3 254.89 L666.4 252.65 L666.5 249.4 L666.6 245.01 L666.7 239.32 L666.8 232.12 L666.9 223.25 L667 212.88 L667.1 202.72 L667.2 198 L667.3 202.97 L667.4 213.26 L667.5 223.69 L667.6 232.6 L667.7 239.82 L667.8 245.51 L667.9 249.88 L668 253.08 L668.1 255.22 L668.2 256.37 L668.3 256.56 L668.4 255.78 L668.5 254.02 L668.6 251.2 L668.7 247.21 L668.8 241.89 L668.9 235.02 L669 226.39 L669.1 215.96 L669.2 204.95 L669.3 198.18 L669.4 201.69 L669.5 212.07" fill="none" stroke="url(#combStroke2)" stroke-width="1.05"/>
<rect x="453.8" y="106.6" width="1.4" height="153.6" fill="#e8eaf0"/>
<rect x="452.2" y="173.6" width="4.6" height="19.8" rx="2.3" fill="#ffffff"/>
<path d="M230.39 175.61 A24.2 24.2 0 1 1 264.61 175.61" fill="none" stroke="#737985" stroke-width="2.0"/>
<path d="M230.39 175.61 A24.2 24.2 0 0 1 232.6 139.43" fill="none" stroke="#c6cad2" stroke-width="2.0"/>
<path d="M236.29 144.16 L232.6 139.43" stroke="#c8ccd4" stroke-width="2.0"/>
<circle cx="247.5" cy="161" r="19.2" fill="#1c1f24" opacity="0.55" filter="url(#blur3)"/>
<circle cx="247.5" cy="158.5" r="19.2" fill="#363a42"/>
<circle cx="247.5" cy="158.5" r="17" fill="#262a30"/>
<path d="M704.37 223.33 A18 18 0 1 1 729.83 223.33" fill="none" stroke="#666c78" stroke-width="1.5"/>
<path d="M704.37 223.33 A18 18 0 0 1 717.1 192.6" fill="none" stroke="#c6cad2" stroke-width="1.5"/>
<path d="M717.1 197.1 L717.1 192.6" stroke="#c8ccd4" stroke-width="1.5"/>
<circle cx="717.1" cy="213.1" r="13.6" fill="#1c1f24" opacity="0.55" filter="url(#blur3)"/>
<circle cx="717.1" cy="210.6" r="13.6" fill="#2c3037" stroke="#727884" stroke-width="1.1"/>
<path d="M776.67 223.33 A18 18 0 1 1 802.13 223.33" fill="none" stroke="#5f6571" stroke-width="1.5"/>
<path d="M789.4 197.1 L789.4 192.6" stroke="#8c929c" stroke-width="1.5"/>
<circle cx="789.4" cy="213.1" r="13.6" fill="#1c1f24" opacity="0.55" filter="url(#blur3)"/>
<circle cx="789.4" cy="210.6" r="13.6" fill="#2c3037" stroke="#5f6571" stroke-width="1.1"/>
<path d="M230.22 363.68 A24.3 24.3 0 1 1 264.58 363.68" fill="none" stroke="#737985" stroke-width="2.0"/>
<path d="M230.22 363.68 A24.3 24.3 0 0 1 247.4 322.2" fill="none" stroke="#c6cad2" stroke-width="2.0"/>
<path d="M247.4 328.2 L247.4 322.2" stroke="#c8ccd4" stroke-width="2.0"/>
<circle cx="247.4" cy="349" r="19.2" fill="#1c1f24" opacity="0.55" filter="url(#blur3)"/>
<circle cx="247.4" cy="346.5" r="19.2" fill="#363a42"/>
<circle cx="247.4" cy="346.5" r="17" fill="#262a30"/>
<path d="M348.67 346.23 A32 32 0 1 1 393.93 346.23" fill="none" stroke="#5e646f" stroke-width="2.0"/>
<path d="M352.6 341.66 L348.28 345.83" stroke="#8c929c" stroke-width="2.0"/>
<circle cx="371.3" cy="326.1" r="26" fill="#1c1f24" opacity="0.55" filter="url(#blur3)"/>
<circle cx="371.3" cy="323.6" r="26" fill="#363a42"/>
<circle cx="371.3" cy="323.6" r="22.3" fill="#262a30"/>
<path d="M477.76 346.34 A32.3 32.3 0 1 1 523.44 346.34" fill="none" stroke="#727884" stroke-width="2.0"/>
<path d="M477.76 346.34 A32.3 32.3 0 0 1 490.89 292.69" fill="none" stroke="#c6cad2" stroke-width="2.0"/>
<path d="M492.69 298.42 L490.89 292.69" stroke="#c8ccd4" stroke-width="2.0"/>
<circle cx="500.6" cy="326" r="26" fill="#1c1f24" opacity="0.55" filter="url(#blur3)"/>
<circle cx="500.6" cy="323.5" r="26" fill="#363a42"/>
<circle cx="500.6" cy="323.5" r="22.3" fill="#262a30"/>
<path d="M606.93 346.37 A32.2 32.2 0 1 1 652.47 346.37" fill="none" stroke="#727884" stroke-width="2.0"/>
<path d="M606.93 346.37 A32.2 32.2 0 1 1 655.42 304.22" fill="none" stroke="#c6cad2" stroke-width="2.0"/>
<path d="M650.62 307.83 L655.42 304.22" stroke="#c8ccd4" stroke-width="2.0"/>
<circle cx="629.7" cy="326.1" r="26" fill="#1c1f24" opacity="0.55" filter="url(#blur3)"/>
<circle cx="629.7" cy="323.6" r="26" fill="#363a42"/>
<circle cx="629.7" cy="323.6" r="22.3" fill="#262a30"/>
<path d="M736.09 363.41 A24.2 24.2 0 1 1 770.31 363.41" fill="none" stroke="#737985" stroke-width="2.0"/>
<path d="M740.11 358.94 L735.79 363.11" stroke="#c8ccd4" stroke-width="2.0"/>
<circle cx="753.2" cy="348.8" r="19.2" fill="#1c1f24" opacity="0.55" filter="url(#blur3)"/>
<circle cx="753.2" cy="346.3" r="19.2" fill="#363a42"/>
<circle cx="753.2" cy="346.3" r="17" fill="#262a30"/></svg>
<div class="cap" style="left:232.3px;top:143.3px;width:30.4px;height:30.4px;background:conic-gradient(from 0deg, #3b4049, #4e5565 45deg, #3b4049 90deg, #272b31 135deg, #363b43 180deg, #4c5363 225deg, #3a3f48 270deg, #262a30 315deg, #3b4049);clip-path:polygon(15.2px 1px,15.45px 0.78px,15.71px 0.61px,15.97px 0.47px,16.24px 0.37px,16.5px 0.29px,16.77px 0.25px,17.04px 0.22px,17.31px 0.22px,17.57px 0.23px,17.84px 0.26px,18.1px 0.29px,18.36px 0.34px,18.62px 0.39px,18.88px 0.45px,19.13px 0.52px,19.39px 0.59px,19.64px 0.66px,19.9px 0.74px,20.15px 0.83px,20.4px 0.92px,20.65px 1.01px,20.89px 1.11px,21.14px 1.21px,21.38px 1.31px,21.62px 1.42px,21.86px 1.54px,22.1px 1.66px,22.33px 1.79px,22.56px 1.92px,22.79px 2.06px,23.01px 2.21px,23.22px 2.37px,23.42px 2.54px,23.61px 2.73px,23.78px 2.94px,23.94px 3.17px,24.08px 3.42px,24.19px 3.7px,24.27px 4px,24.33px 4.32px,24.66px 4.32px,24.97px 4.35px,25.26px 4.41px,25.53px 4.5px,25.78px 4.62px,26.02px 4.75px,26.24px 4.91px,26.44px 5.08px,26.64px 5.26px,26.82px 5.45px,27px 5.64px,27.17px 5.85px,27.34px 6.05px,27.5px 6.27px,27.65px 6.48px,27.8px 6.7px,27.95px 6.92px,28.09px 7.15px,28.23px 7.37px,28.36px 7.6px,28.49px 7.83px,28.62px 8.06px,28.74px 8.3px,28.86px 8.54px,28.98px 8.78px,29.08px 9.02px,29.19px 9.26px,29.29px 9.51px,29.38px 9.76px,29.46px 10.01px,29.53px 10.27px,29.59px 10.52px,29.63px 10.79px,29.65px 11.06px,29.65px 11.33px,29.63px 11.6px,29.57px 11.88px,29.48px 12.16px,29.35px 12.45px,29.18px 12.73px,29.44px 12.94px,29.66px 13.17px,29.84px 13.4px,29.99px 13.65px,30.11px 13.9px,30.2px 14.15px,30.27px 14.41px,30.32px 14.67px,30.35px 14.94px,30.37px 15.2px,30.38px 15.47px,30.38px 15.73px,30.38px 16px,30.36px 16.26px,30.34px 16.52px,30.32px 16.79px,30.29px 17.05px,30.25px 17.32px,30.21px 17.58px,30.17px 17.84px,30.12px 18.1px,30.07px 18.36px,30.01px 18.62px,29.95px 18.88px,29.88px 19.13px,29.81px 19.39px,29.73px 19.64px,29.65px 19.89px,29.56px 20.14px,29.46px 20.39px,29.35px 20.63px,29.23px 20.87px,29.09px 21.1px,28.94px 21.32px,28.76px 21.52px,28.57px 21.72px,28.34px 21.9px,28.09px 22.05px,27.81px 22.19px,27.5px 22.3px,27.56px 22.63px,27.58px 22.94px,27.57px 23.23px,27.53px 23.52px,27.46px 23.78px,27.37px 24.04px,27.25px 24.28px,27.12px 24.51px,26.98px 24.74px,26.82px 24.95px,26.66px 25.16px,26.49px 25.37px,26.31px 25.56px,26.13px 25.76px,25.95px 25.95px,25.76px 26.13px,25.57px 26.32px,25.37px 26.5px,25.17px 26.67px,24.97px 26.84px,24.77px 27.01px,24.56px 27.18px,24.35px 27.34px,24.13px 27.5px,23.92px 27.65px,23.7px 27.8px,23.48px 27.95px,23.25px 28.08px,23.02px 28.22px,22.79px 28.34px,22.55px 28.46px,22.3px 28.56px,22.05px 28.65px,21.79px 28.72px,21.52px 28.76px,21.25px 28.78px,20.96px 28.78px,20.67px 28.74px,20.37px 28.66px,20.06px 28.54px,19.89px 28.83px,19.71px 29.09px,19.51px 29.31px,19.3px 29.49px,19.07px 29.65px,18.84px 29.79px,18.59px 29.9px,18.35px 30px,18.09px 30.08px,17.84px 30.14px,17.58px 30.2px,17.31px 30.25px,17.05px 30.28px,16.79px 30.32px,16.52px 30.34px,16.26px 30.36px,16px 30.38px,15.73px 30.39px,15.47px 30.4px,15.2px 30.4px,14.93px 30.4px,14.67px 30.39px,14.4px 30.38px,14.14px 30.36px,13.88px 30.34px,13.61px 30.32px,13.35px 30.28px,13.09px 30.25px,12.82px 30.2px,12.56px 30.14px,12.31px 30.08px,12.05px 30px,11.81px 29.9px,11.56px 29.79px,11.33px 29.65px,11.1px 29.49px,10.89px 29.31px,10.69px 29.09px,10.51px 28.83px,10.34px 28.54px,10.03px 28.66px,9.73px 28.74px,9.44px 28.78px,9.15px 28.78px,8.88px 28.76px,8.61px 28.72px,8.35px 28.65px,8.1px 28.56px,7.85px 28.46px,7.61px 28.34px,7.38px 28.22px,7.15px 28.08px,6.92px 27.95px,6.7px 27.8px,6.48px 27.65px,6.27px 27.5px,6.05px 27.34px,5.84px 27.18px,5.63px 27.01px,5.43px 26.84px,5.23px 26.67px,5.03px 26.5px,4.83px 26.32px,4.64px 26.13px,4.45px 25.95px,4.27px 25.76px,4.09px 25.56px,3.91px 25.37px,3.74px 25.16px,3.58px 24.95px,3.42px 24.74px,3.28px 24.51px,3.15px 24.28px,3.03px 24.04px,2.94px 23.78px,2.87px 23.52px,2.83px 23.23px,2.82px 22.94px,2.84px 22.63px,2.9px 22.3px,2.59px 22.19px,2.31px 22.05px,2.06px 21.9px,1.83px 21.72px,1.64px 21.52px,1.46px 21.32px,1.31px 21.1px,1.17px 20.87px,1.05px 20.63px,0.94px 20.39px,0.84px 20.14px,0.75px 19.89px,0.67px 19.64px,0.59px 19.39px,0.52px 19.13px,0.45px 18.88px,0.39px 18.62px,0.33px 18.36px,0.28px 18.1px,0.23px 17.84px,0.19px 17.58px,0.15px 17.32px,0.11px 17.05px,0.08px 16.79px,0.06px 16.52px,0.04px 16.26px,0.02px 16px,0.02px 15.73px,0.02px 15.47px,0.03px 15.2px,0.05px 14.94px,0.08px 14.67px,0.13px 14.41px,0.2px 14.15px,0.29px 13.9px,0.41px 13.65px,0.56px 13.4px,0.74px 13.17px,0.96px 12.94px,1.22px 12.73px,1.05px 12.45px,0.92px 12.16px,0.83px 11.88px,0.77px 11.6px,0.75px 11.33px,0.75px 11.06px,0.77px 10.79px,0.81px 10.52px,0.87px 10.27px,0.94px 10.01px,1.02px 9.76px,1.11px 9.51px,1.21px 9.26px,1.32px 9.02px,1.42px 8.78px,1.54px 8.54px,1.66px 8.3px,1.78px 8.06px,1.91px 7.83px,2.04px 7.6px,2.17px 7.37px,2.31px 7.15px,2.45px 6.92px,2.6px 6.7px,2.75px 6.48px,2.9px 6.27px,3.06px 6.05px,3.23px 5.85px,3.4px 5.64px,3.58px 5.45px,3.76px 5.26px,3.96px 5.08px,4.16px 4.91px,4.38px 4.75px,4.62px 4.62px,4.87px 4.5px,5.14px 4.41px,5.43px 4.35px,5.74px 4.32px,6.07px 4.32px,6.13px 4px,6.21px 3.7px,6.32px 3.42px,6.46px 3.17px,6.62px 2.94px,6.79px 2.73px,6.98px 2.54px,7.18px 2.37px,7.39px 2.21px,7.61px 2.06px,7.84px 1.92px,8.07px 1.79px,8.3px 1.66px,8.54px 1.54px,8.78px 1.42px,9.02px 1.31px,9.26px 1.21px,9.51px 1.11px,9.75px 1.01px,10px 0.92px,10.25px 0.83px,10.5px 0.74px,10.76px 0.66px,11.01px 0.59px,11.27px 0.52px,11.52px 0.45px,11.78px 0.39px,12.04px 0.34px,12.3px 0.29px,12.56px 0.26px,12.83px 0.23px,13.09px 0.22px,13.36px 0.22px,13.63px 0.25px,13.9px 0.29px,14.16px 0.37px,14.43px 0.47px,14.69px 0.61px,14.95px 0.78px)"></div>
<div class="cap" style="left:707.4px;top:200.9px;width:19.4px;height:19.4px;background:radial-gradient(circle at 40% 30%, rgba(255,255,255,0) 40%, rgba(20,22,30,0.45) 100%), conic-gradient(from 0deg, #9aa1b2, #767d8e 40deg, #aab1c2 100deg, #7c8394 150deg, #9299aa 200deg, #6c7384 230deg, #a0a7b8 290deg, #767d8e 330deg, #9aa1b2)"></div>
<div class="cap" style="left:779.7px;top:200.9px;width:19.4px;height:19.4px;background:radial-gradient(circle at 40% 30%, rgba(255,255,255,0) 40%, rgba(20,22,30,0.4) 100%), conic-gradient(from 0deg, #767d8c, #626876 40deg, #808796 100deg, #666c7c 150deg, #767d8c 200deg, #5e6474 230deg, #7c8396 290deg, #626876 330deg, #767d8c)"></div>
<div class="cap" style="left:232.2px;top:331.3px;width:30.4px;height:30.4px;background:conic-gradient(from 0deg, #3b4049, #4e5565 45deg, #3b4049 90deg, #272b31 135deg, #363b43 180deg, #4c5363 225deg, #3a3f48 270deg, #262a30 315deg, #3b4049);clip-path:polygon(15.2px 1px,15.45px 0.78px,15.71px 0.61px,15.97px 0.47px,16.24px 0.37px,16.5px 0.29px,16.77px 0.25px,17.04px 0.22px,17.31px 0.22px,17.57px 0.23px,17.84px 0.26px,18.1px 0.29px,18.36px 0.34px,18.62px 0.39px,18.88px 0.45px,19.13px 0.52px,19.39px 0.59px,19.64px 0.66px,19.9px 0.74px,20.15px 0.83px,20.4px 0.92px,20.65px 1.01px,20.89px 1.11px,21.14px 1.21px,21.38px 1.31px,21.62px 1.42px,21.86px 1.54px,22.1px 1.66px,22.33px 1.79px,22.56px 1.92px,22.79px 2.06px,23.01px 2.21px,23.22px 2.37px,23.42px 2.54px,23.61px 2.73px,23.78px 2.94px,23.94px 3.17px,24.08px 3.42px,24.19px 3.7px,24.27px 4px,24.33px 4.32px,24.66px 4.32px,24.97px 4.35px,25.26px 4.41px,25.53px 4.5px,25.78px 4.62px,26.02px 4.75px,26.24px 4.91px,26.44px 5.08px,26.64px 5.26px,26.82px 5.45px,27px 5.64px,27.17px 5.85px,27.34px 6.05px,27.5px 6.27px,27.65px 6.48px,27.8px 6.7px,27.95px 6.92px,28.09px 7.15px,28.23px 7.37px,28.36px 7.6px,28.49px 7.83px,28.62px 8.06px,28.74px 8.3px,28.86px 8.54px,28.98px 8.78px,29.08px 9.02px,29.19px 9.26px,29.29px 9.51px,29.38px 9.76px,29.46px 10.01px,29.53px 10.27px,29.59px 10.52px,29.63px 10.79px,29.65px 11.06px,29.65px 11.33px,29.63px 11.6px,29.57px 11.88px,29.48px 12.16px,29.35px 12.45px,29.18px 12.73px,29.44px 12.94px,29.66px 13.17px,29.84px 13.4px,29.99px 13.65px,30.11px 13.9px,30.2px 14.15px,30.27px 14.41px,30.32px 14.67px,30.35px 14.94px,30.37px 15.2px,30.38px 15.47px,30.38px 15.73px,30.38px 16px,30.36px 16.26px,30.34px 16.52px,30.32px 16.79px,30.29px 17.05px,30.25px 17.32px,30.21px 17.58px,30.17px 17.84px,30.12px 18.1px,30.07px 18.36px,30.01px 18.62px,29.95px 18.88px,29.88px 19.13px,29.81px 19.39px,29.73px 19.64px,29.65px 19.89px,29.56px 20.14px,29.46px 20.39px,29.35px 20.63px,29.23px 20.87px,29.09px 21.1px,28.94px 21.32px,28.76px 21.52px,28.57px 21.72px,28.34px 21.9px,28.09px 22.05px,27.81px 22.19px,27.5px 22.3px,27.56px 22.63px,27.58px 22.94px,27.57px 23.23px,27.53px 23.52px,27.46px 23.78px,27.37px 24.04px,27.25px 24.28px,27.12px 24.51px,26.98px 24.74px,26.82px 24.95px,26.66px 25.16px,26.49px 25.37px,26.31px 25.56px,26.13px 25.76px,25.95px 25.95px,25.76px 26.13px,25.57px 26.32px,25.37px 26.5px,25.17px 26.67px,24.97px 26.84px,24.77px 27.01px,24.56px 27.18px,24.35px 27.34px,24.13px 27.5px,23.92px 27.65px,23.7px 27.8px,23.48px 27.95px,23.25px 28.08px,23.02px 28.22px,22.79px 28.34px,22.55px 28.46px,22.3px 28.56px,22.05px 28.65px,21.79px 28.72px,21.52px 28.76px,21.25px 28.78px,20.96px 28.78px,20.67px 28.74px,20.37px 28.66px,20.06px 28.54px,19.89px 28.83px,19.71px 29.09px,19.51px 29.31px,19.3px 29.49px,19.07px 29.65px,18.84px 29.79px,18.59px 29.9px,18.35px 30px,18.09px 30.08px,17.84px 30.14px,17.58px 30.2px,17.31px 30.25px,17.05px 30.28px,16.79px 30.32px,16.52px 30.34px,16.26px 30.36px,16px 30.38px,15.73px 30.39px,15.47px 30.4px,15.2px 30.4px,14.93px 30.4px,14.67px 30.39px,14.4px 30.38px,14.14px 30.36px,13.88px 30.34px,13.61px 30.32px,13.35px 30.28px,13.09px 30.25px,12.82px 30.2px,12.56px 30.14px,12.31px 30.08px,12.05px 30px,11.81px 29.9px,11.56px 29.79px,11.33px 29.65px,11.1px 29.49px,10.89px 29.31px,10.69px 29.09px,10.51px 28.83px,10.34px 28.54px,10.03px 28.66px,9.73px 28.74px,9.44px 28.78px,9.15px 28.78px,8.88px 28.76px,8.61px 28.72px,8.35px 28.65px,8.1px 28.56px,7.85px 28.46px,7.61px 28.34px,7.38px 28.22px,7.15px 28.08px,6.92px 27.95px,6.7px 27.8px,6.48px 27.65px,6.27px 27.5px,6.05px 27.34px,5.84px 27.18px,5.63px 27.01px,5.43px 26.84px,5.23px 26.67px,5.03px 26.5px,4.83px 26.32px,4.64px 26.13px,4.45px 25.95px,4.27px 25.76px,4.09px 25.56px,3.91px 25.37px,3.74px 25.16px,3.58px 24.95px,3.42px 24.74px,3.28px 24.51px,3.15px 24.28px,3.03px 24.04px,2.94px 23.78px,2.87px 23.52px,2.83px 23.23px,2.82px 22.94px,2.84px 22.63px,2.9px 22.3px,2.59px 22.19px,2.31px 22.05px,2.06px 21.9px,1.83px 21.72px,1.64px 21.52px,1.46px 21.32px,1.31px 21.1px,1.17px 20.87px,1.05px 20.63px,0.94px 20.39px,0.84px 20.14px,0.75px 19.89px,0.67px 19.64px,0.59px 19.39px,0.52px 19.13px,0.45px 18.88px,0.39px 18.62px,0.33px 18.36px,0.28px 18.1px,0.23px 17.84px,0.19px 17.58px,0.15px 17.32px,0.11px 17.05px,0.08px 16.79px,0.06px 16.52px,0.04px 16.26px,0.02px 16px,0.02px 15.73px,0.02px 15.47px,0.03px 15.2px,0.05px 14.94px,0.08px 14.67px,0.13px 14.41px,0.2px 14.15px,0.29px 13.9px,0.41px 13.65px,0.56px 13.4px,0.74px 13.17px,0.96px 12.94px,1.22px 12.73px,1.05px 12.45px,0.92px 12.16px,0.83px 11.88px,0.77px 11.6px,0.75px 11.33px,0.75px 11.06px,0.77px 10.79px,0.81px 10.52px,0.87px 10.27px,0.94px 10.01px,1.02px 9.76px,1.11px 9.51px,1.21px 9.26px,1.32px 9.02px,1.42px 8.78px,1.54px 8.54px,1.66px 8.3px,1.78px 8.06px,1.91px 7.83px,2.04px 7.6px,2.17px 7.37px,2.31px 7.15px,2.45px 6.92px,2.6px 6.7px,2.75px 6.48px,2.9px 6.27px,3.06px 6.05px,3.23px 5.85px,3.4px 5.64px,3.58px 5.45px,3.76px 5.26px,3.96px 5.08px,4.16px 4.91px,4.38px 4.75px,4.62px 4.62px,4.87px 4.5px,5.14px 4.41px,5.43px 4.35px,5.74px 4.32px,6.07px 4.32px,6.13px 4px,6.21px 3.7px,6.32px 3.42px,6.46px 3.17px,6.62px 2.94px,6.79px 2.73px,6.98px 2.54px,7.18px 2.37px,7.39px 2.21px,7.61px 2.06px,7.84px 1.92px,8.07px 1.79px,8.3px 1.66px,8.54px 1.54px,8.78px 1.42px,9.02px 1.31px,9.26px 1.21px,9.51px 1.11px,9.75px 1.01px,10px 0.92px,10.25px 0.83px,10.5px 0.74px,10.76px 0.66px,11.01px 0.59px,11.27px 0.52px,11.52px 0.45px,11.78px 0.39px,12.04px 0.34px,12.3px 0.29px,12.56px 0.26px,12.83px 0.23px,13.09px 0.22px,13.36px 0.22px,13.63px 0.25px,13.9px 0.29px,14.16px 0.37px,14.43px 0.47px,14.69px 0.61px,14.95px 0.78px)"></div>
<div class="cap" style="left:350.8px;top:303.1px;width:41px;height:41px;background:conic-gradient(from 0deg, #3d424b, #4a505d 45deg, #3d424b 90deg, #30343b 135deg, #3b4048 180deg, #484e5b 225deg, #3d424b 270deg, #2f333a 315deg, #3d424b)"></div>
<div class="cap" style="left:480.1px;top:303px;width:41px;height:41px;background:conic-gradient(from 0deg, #3b4049, #4e5565 45deg, #3b4049 90deg, #272b31 135deg, #363b43 180deg, #4c5363 225deg, #3a3f48 270deg, #262a30 315deg, #3b4049)"></div>
<div class="cap" style="left:609.2px;top:303.1px;width:41px;height:41px;background:conic-gradient(from 0deg, #3b4049, #4e5565 45deg, #3b4049 90deg, #272b31 135deg, #363b43 180deg, #4c5363 225deg, #3a3f48 270deg, #262a30 315deg, #3b4049)"></div>
<div class="cap" style="left:738px;top:331.1px;width:30.4px;height:30.4px;background:conic-gradient(from 0deg, #3b4049, #4e5565 45deg, #3b4049 90deg, #272b31 135deg, #363b43 180deg, #4c5363 225deg, #3a3f48 270deg, #262a30 315deg, #3b4049);clip-path:polygon(15.2px 1px,15.45px 0.78px,15.71px 0.61px,15.97px 0.47px,16.24px 0.37px,16.5px 0.29px,16.77px 0.25px,17.04px 0.22px,17.31px 0.22px,17.57px 0.23px,17.84px 0.26px,18.1px 0.29px,18.36px 0.34px,18.62px 0.39px,18.88px 0.45px,19.13px 0.52px,19.39px 0.59px,19.64px 0.66px,19.9px 0.74px,20.15px 0.83px,20.4px 0.92px,20.65px 1.01px,20.89px 1.11px,21.14px 1.21px,21.38px 1.31px,21.62px 1.42px,21.86px 1.54px,22.1px 1.66px,22.33px 1.79px,22.56px 1.92px,22.79px 2.06px,23.01px 2.21px,23.22px 2.37px,23.42px 2.54px,23.61px 2.73px,23.78px 2.94px,23.94px 3.17px,24.08px 3.42px,24.19px 3.7px,24.27px 4px,24.33px 4.32px,24.66px 4.32px,24.97px 4.35px,25.26px 4.41px,25.53px 4.5px,25.78px 4.62px,26.02px 4.75px,26.24px 4.91px,26.44px 5.08px,26.64px 5.26px,26.82px 5.45px,27px 5.64px,27.17px 5.85px,27.34px 6.05px,27.5px 6.27px,27.65px 6.48px,27.8px 6.7px,27.95px 6.92px,28.09px 7.15px,28.23px 7.37px,28.36px 7.6px,28.49px 7.83px,28.62px 8.06px,28.74px 8.3px,28.86px 8.54px,28.98px 8.78px,29.08px 9.02px,29.19px 9.26px,29.29px 9.51px,29.38px 9.76px,29.46px 10.01px,29.53px 10.27px,29.59px 10.52px,29.63px 10.79px,29.65px 11.06px,29.65px 11.33px,29.63px 11.6px,29.57px 11.88px,29.48px 12.16px,29.35px 12.45px,29.18px 12.73px,29.44px 12.94px,29.66px 13.17px,29.84px 13.4px,29.99px 13.65px,30.11px 13.9px,30.2px 14.15px,30.27px 14.41px,30.32px 14.67px,30.35px 14.94px,30.37px 15.2px,30.38px 15.47px,30.38px 15.73px,30.38px 16px,30.36px 16.26px,30.34px 16.52px,30.32px 16.79px,30.29px 17.05px,30.25px 17.32px,30.21px 17.58px,30.17px 17.84px,30.12px 18.1px,30.07px 18.36px,30.01px 18.62px,29.95px 18.88px,29.88px 19.13px,29.81px 19.39px,29.73px 19.64px,29.65px 19.89px,29.56px 20.14px,29.46px 20.39px,29.35px 20.63px,29.23px 20.87px,29.09px 21.1px,28.94px 21.32px,28.76px 21.52px,28.57px 21.72px,28.34px 21.9px,28.09px 22.05px,27.81px 22.19px,27.5px 22.3px,27.56px 22.63px,27.58px 22.94px,27.57px 23.23px,27.53px 23.52px,27.46px 23.78px,27.37px 24.04px,27.25px 24.28px,27.12px 24.51px,26.98px 24.74px,26.82px 24.95px,26.66px 25.16px,26.49px 25.37px,26.31px 25.56px,26.13px 25.76px,25.95px 25.95px,25.76px 26.13px,25.57px 26.32px,25.37px 26.5px,25.17px 26.67px,24.97px 26.84px,24.77px 27.01px,24.56px 27.18px,24.35px 27.34px,24.13px 27.5px,23.92px 27.65px,23.7px 27.8px,23.48px 27.95px,23.25px 28.08px,23.02px 28.22px,22.79px 28.34px,22.55px 28.46px,22.3px 28.56px,22.05px 28.65px,21.79px 28.72px,21.52px 28.76px,21.25px 28.78px,20.96px 28.78px,20.67px 28.74px,20.37px 28.66px,20.06px 28.54px,19.89px 28.83px,19.71px 29.09px,19.51px 29.31px,19.3px 29.49px,19.07px 29.65px,18.84px 29.79px,18.59px 29.9px,18.35px 30px,18.09px 30.08px,17.84px 30.14px,17.58px 30.2px,17.31px 30.25px,17.05px 30.28px,16.79px 30.32px,16.52px 30.34px,16.26px 30.36px,16px 30.38px,15.73px 30.39px,15.47px 30.4px,15.2px 30.4px,14.93px 30.4px,14.67px 30.39px,14.4px 30.38px,14.14px 30.36px,13.88px 30.34px,13.61px 30.32px,13.35px 30.28px,13.09px 30.25px,12.82px 30.2px,12.56px 30.14px,12.31px 30.08px,12.05px 30px,11.81px 29.9px,11.56px 29.79px,11.33px 29.65px,11.1px 29.49px,10.89px 29.31px,10.69px 29.09px,10.51px 28.83px,10.34px 28.54px,10.03px 28.66px,9.73px 28.74px,9.44px 28.78px,9.15px 28.78px,8.88px 28.76px,8.61px 28.72px,8.35px 28.65px,8.1px 28.56px,7.85px 28.46px,7.61px 28.34px,7.38px 28.22px,7.15px 28.08px,6.92px 27.95px,6.7px 27.8px,6.48px 27.65px,6.27px 27.5px,6.05px 27.34px,5.84px 27.18px,5.63px 27.01px,5.43px 26.84px,5.23px 26.67px,5.03px 26.5px,4.83px 26.32px,4.64px 26.13px,4.45px 25.95px,4.27px 25.76px,4.09px 25.56px,3.91px 25.37px,3.74px 25.16px,3.58px 24.95px,3.42px 24.74px,3.28px 24.51px,3.15px 24.28px,3.03px 24.04px,2.94px 23.78px,2.87px 23.52px,2.83px 23.23px,2.82px 22.94px,2.84px 22.63px,2.9px 22.3px,2.59px 22.19px,2.31px 22.05px,2.06px 21.9px,1.83px 21.72px,1.64px 21.52px,1.46px 21.32px,1.31px 21.1px,1.17px 20.87px,1.05px 20.63px,0.94px 20.39px,0.84px 20.14px,0.75px 19.89px,0.67px 19.64px,0.59px 19.39px,0.52px 19.13px,0.45px 18.88px,0.39px 18.62px,0.33px 18.36px,0.28px 18.1px,0.23px 17.84px,0.19px 17.58px,0.15px 17.32px,0.11px 17.05px,0.08px 16.79px,0.06px 16.52px,0.04px 16.26px,0.02px 16px,0.02px 15.73px,0.02px 15.47px,0.03px 15.2px,0.05px 14.94px,0.08px 14.67px,0.13px 14.41px,0.2px 14.15px,0.29px 13.9px,0.41px 13.65px,0.56px 13.4px,0.74px 13.17px,0.96px 12.94px,1.22px 12.73px,1.05px 12.45px,0.92px 12.16px,0.83px 11.88px,0.77px 11.6px,0.75px 11.33px,0.75px 11.06px,0.77px 10.79px,0.81px 10.52px,0.87px 10.27px,0.94px 10.01px,1.02px 9.76px,1.11px 9.51px,1.21px 9.26px,1.32px 9.02px,1.42px 8.78px,1.54px 8.54px,1.66px 8.3px,1.78px 8.06px,1.91px 7.83px,2.04px 7.6px,2.17px 7.37px,2.31px 7.15px,2.45px 6.92px,2.6px 6.7px,2.75px 6.48px,2.9px 6.27px,3.06px 6.05px,3.23px 5.85px,3.4px 5.64px,3.58px 5.45px,3.76px 5.26px,3.96px 5.08px,4.16px 4.91px,4.38px 4.75px,4.62px 4.62px,4.87px 4.5px,5.14px 4.41px,5.43px 4.35px,5.74px 4.32px,6.07px 4.32px,6.13px 4px,6.21px 3.7px,6.32px 3.42px,6.46px 3.17px,6.62px 2.94px,6.79px 2.73px,6.98px 2.54px,7.18px 2.37px,7.39px 2.21px,7.61px 2.06px,7.84px 1.92px,8.07px 1.79px,8.3px 1.66px,8.54px 1.54px,8.78px 1.42px,9.02px 1.31px,9.26px 1.21px,9.51px 1.11px,9.75px 1.01px,10px 0.92px,10.25px 0.83px,10.5px 0.74px,10.76px 0.66px,11.01px 0.59px,11.27px 0.52px,11.52px 0.45px,11.78px 0.39px,12.04px 0.34px,12.3px 0.29px,12.56px 0.26px,12.83px 0.23px,13.09px 0.22px,13.36px 0.22px,13.63px 0.25px,13.9px 0.29px,14.16px 0.37px,14.43px 0.47px,14.69px 0.61px,14.95px 0.78px)"></div>
<svg width="1000" height="500" viewBox="0 0 1000 500"><path d="M258.89 148.94 L258.98 149.03 L259.07 149.13 L259.15 149.23 L259.24 149.33 L259.32 149.43 L259.4 149.53 L259.48 149.64 L259.55 149.74 L259.63 149.85 L259.71 149.95 L259.78 150.06 L259.85 150.17 L259.92 150.28 L260 150.38 L260.07 150.49 L260.14 150.6 L260.2 150.71 L260.27 150.83 L260.34 150.94 L260.4 151.05 L260.47 151.16 L260.53 151.28 L260.59 151.39 L260.66 151.5 L260.72 151.62 L260.78 151.74 L260.83 151.85 L260.89 151.97 L260.95 152.09 L261 152.2 L261.06 152.32 L261.11 152.44 L261.16 152.56 L261.21 152.68 L261.26 152.8 L261.31 152.92 L261.35 153.04 L261.4 153.17 L261.44 153.29 L261.48 153.41 L261.51 153.54 L261.55 153.66 L261.58 153.79 L261.6 153.92 L261.63 154.05 L261.64 154.18 L261.66 154.31 L261.67 154.44 L261.67 154.57 L261.67 154.7 L261.65 154.84 L261.64 154.98 L261.61 155.11 L261.58 155.25 L261.54 155.39 L261.49 155.53 L261.43 155.67 L261.36 155.81 L261.28 155.95 L261.19 156.09 L261.32 156.19 L261.44 156.29 L261.56 156.4 L261.66 156.51 L261.76 156.62 L261.84 156.74 L261.92 156.86 L261.99 156.98 L262.05 157.1 L262.11 157.22 L262.16 157.35 L262.2 157.47 L262.24 157.6 L262.27 157.73 L262.3 157.85 L262.32 157.98 L262.34 158.11 L262.35 158.24 L262.37 158.37 L262.37 158.5 L262.38 158.63 L262.38 158.76 L262.39 158.89 L262.38 159.02 L262.38 159.15 L262.38 159.28 L262.37 159.41 L262.36 159.54 L262.35 159.67 L262.34 159.8 L262.33 159.93 L262.32 160.06 L262.3 160.19 L262.29 160.32 L262.27 160.44 L262.25 160.57 L262.24 160.7 L262.22 160.83 L262.2 160.96 L262.17 161.09 L262.15 161.22 L262.13 161.34 L262.1 161.47 L262.07 161.6 L262.05 161.72 L262.02 161.85 L261.99 161.98 L261.96 162.1 L261.93 162.23 L261.89 162.36 L261.86 162.48 L261.82 162.61 L261.78 162.73 L261.75 162.86 L261.71 162.98 L261.66 163.1 L261.62 163.22 L261.58 163.35 L261.53 163.47 L261.48 163.59 L261.43 163.71 L261.37 163.82 L261.31 163.94 L261.25 164.06 L261.18 164.17 L261.12 164.28 L261.04 164.39 L260.96 164.49 L260.88 164.6 L260.79 164.7 L260.7 164.79 L260.6 164.89 L260.49 164.98 L260.37 165.06 L260.25 165.14 L260.13 165.21 L259.99 165.28 L259.85 165.34 L259.7 165.4 L259.54 165.45 L259.57 165.61 L259.6 165.77 L259.62 165.93 L259.63 166.08 L259.63 166.23 L259.62 166.37 L259.6 166.51 L259.58 166.65 L259.55 166.78 L259.51 166.91 L259.47 167.04 L259.42 167.16 L259.37 167.28 L259.31 167.4 L259.25 167.52 L259.19 167.63 L259.12 167.74 L259.05 167.85 L258.97 167.96 L258.89 168.06 L258.82 168.16 L258.73 168.27 L258.65 168.37 L258.57 168.47 L258.48 168.56 L258.39 168.66 L258.31 168.76 L258.22 168.85 L258.13 168.94 L258.04 169.04 L257.94 169.13 L257.85 169.22 L257.76 169.31 L257.66 169.4 L257.57 169.49 L257.47 169.57 L257.37 169.66 L257.28 169.75 L257.18 169.83 L257.08 169.91 L256.98 170 L256.88 170.08 L256.78 170.16 L256.67 170.24 L256.57 170.32 L256.47 170.4 L256.36 170.48 L256.26 170.55 L256.15 170.63 L256.05 170.71 L255.94 170.78 L255.83 170.85 L255.72 170.92 L255.61 170.99 L255.5 171.06 L255.39 171.13 L255.28 171.2 L255.17 171.26 L255.05 171.32 L254.94 171.38 L254.82 171.44 L254.7 171.49 L254.58 171.55 L254.46 171.59 L254.34 171.64 L254.22 171.68 L254.09 171.71 L253.96 171.75 L253.83 171.77 L253.7 171.79 L253.56 171.8 L253.43 171.81 L253.29 171.81 L253.15 171.8 L253 171.78 L252.86 171.76 L252.71 171.72 L252.56 171.68 L252.41 171.63 L252.25 171.56 L252.18 171.71 L252.1 171.85 L252.01 171.98 L251.92 172.1 L251.82 172.21 L251.72 172.32 L251.62 172.42 L251.52 172.51 L251.41 172.59 L251.3 172.67 L251.18 172.74 L251.07 172.8 L250.95 172.86 L250.83 172.91 L250.71 172.96 L250.58 173.01 L250.46 173.05 L250.33 173.08 L250.21 173.12 L250.08 173.15 L249.96 173.18 L249.83 173.2 L249.7 173.23 L249.57 173.25 L249.44 173.27 L249.32 173.29 L249.19 173.3 L249.06 173.32 L248.93 173.33 L248.8 173.34 L248.67 173.35 L248.54 173.36 L248.41 173.37 L248.28 173.38 L248.15 173.39 L248.02 173.39 L247.89 173.39 L247.76 173.4 L247.63 173.4 L247.5 173.4 L247.37 173.4 L247.24 173.4 L247.11 173.39 L246.98 173.39 L246.85 173.39 L246.72 173.38 L246.59 173.37 L246.46 173.36 L246.33 173.35 L246.2 173.34 L246.07 173.33 L245.94 173.32 L245.81 173.3 L245.68 173.29 L245.56 173.27 L245.43 173.25 L245.3 173.23 L245.17 173.2 L245.04 173.18 L244.92 173.15 L244.79 173.12 L244.67 173.08 L244.54 173.05 L244.42 173.01 L244.29 172.96 L244.17 172.91 L244.05 172.86 L243.93 172.8 L243.82 172.74 L243.7 172.67 L243.59 172.59 L243.48 172.51 L243.38 172.42 L243.28 172.32 L243.18 172.21 L243.08 172.1 L242.99 171.98 L242.9 171.85 L242.82 171.71 L242.75 171.56 L242.59 171.63 L242.44 171.68 L242.29 171.72 L242.14 171.76 L242 171.78 L241.85 171.8 L241.71 171.81 L241.57 171.81 L241.44 171.8 L241.3 171.79 L241.17 171.77 L241.04 171.75 L240.91 171.71 L240.78 171.68 L240.66 171.64 L240.54 171.59 L240.42 171.55 L240.3 171.49 L240.18 171.44 L240.06 171.38 L239.95 171.32 L239.83 171.26 L239.72 171.2 L239.61 171.13 L239.5 171.06 L239.39 170.99 L239.28 170.92 L239.17 170.85 L239.06 170.78 L238.95 170.71" fill="none" stroke="#6a55d8" stroke-width="1.0"/>
<path d="M235.46 165.45 L235.3 165.4 L235.15 165.34 L235.01 165.28 L234.87 165.21 L234.75 165.14 L234.63 165.06 L234.51 164.98 L234.4 164.89 L234.3 164.79 L234.21 164.7 L234.12 164.6 L234.04 164.49 L233.96 164.39 L233.88 164.28 L233.82 164.17 L233.75 164.06 L233.69 163.94 L233.63 163.82 L233.57 163.71 L233.52 163.59 L233.47 163.47 L233.42 163.35 L233.38 163.22 L233.34 163.1 L233.29 162.98 L233.25 162.86 L233.22 162.73 L233.18 162.61 L233.14 162.48 L233.11 162.36 L233.07 162.23 L233.04 162.1 L233.01 161.98 L232.98 161.85 L232.95 161.72 L232.93 161.6 L232.9 161.47 L232.87 161.34 L232.85 161.22 L232.83 161.09 L232.8 160.96 L232.78 160.83 L232.76 160.7 L232.75 160.57 L232.73 160.44 L232.71 160.32 L232.7 160.19 L232.68 160.06 L232.67 159.93 L232.66 159.8 L232.65 159.67 L232.64 159.54 L232.63 159.41 L232.62 159.28 L232.62 159.15 L232.62 159.02 L232.61 158.89 L232.62 158.76 L232.62 158.63 L232.63 158.5 L232.63 158.37 L232.65 158.24 L232.66 158.11 L232.68 157.98 L232.7 157.85 L232.73 157.73 L232.76 157.6 L232.8 157.47 L232.84 157.35 L232.89 157.22 L232.95 157.1 L233.01 156.98 L233.08 156.86 L233.16 156.74 L233.24 156.62 L233.34 156.51 L233.44 156.4 L233.56 156.29 L233.68 156.19 L233.81 156.09 L233.72 155.95 L233.64 155.81 L233.57 155.67 L233.51 155.53 L233.46 155.39 L233.42 155.25 L233.39 155.11 L233.36 154.98 L233.35 154.84 L233.33 154.7 L233.33 154.57 L233.33 154.44 L233.34 154.31 L233.36 154.18 L233.37 154.05 L233.4 153.92 L233.42 153.79 L233.45 153.66 L233.49 153.54 L233.52 153.41 L233.56 153.29 L233.6 153.17 L233.65 153.04 L233.69 152.92 L233.74 152.8 L233.79 152.68 L233.84 152.56 L233.89 152.44 L233.94 152.32 L234 152.2 L234.05 152.09 L234.11 151.97 L234.17 151.85 L234.22 151.74 L234.28 151.62 L234.34 151.5 L234.41 151.39 L234.47 151.28 L234.53 151.16 L234.6 151.05 L234.66 150.94 L234.73 150.83 L234.8 150.71 L234.86 150.6 L234.93 150.49 L235 150.38 L235.08 150.28 L235.15 150.17 L235.22 150.06 L235.29 149.95 L235.37 149.85 L235.45 149.74 L235.52 149.64 L235.6 149.53 L235.68 149.43 L235.76 149.33 L235.85 149.23 L235.93 149.13 L236.02 149.03 L236.11 148.94 L236.2 148.84 L236.29 148.75 L236.38 148.66 L236.48 148.58 L236.58 148.49 L236.68 148.41 L236.79 148.34 L236.9 148.26 L237.01 148.19 L237.13 148.13 L237.25 148.07 L237.38 148.02 L237.51 147.97 L237.65 147.93 L237.79 147.9 L237.93 147.87 L238.08 147.86 L238.24 147.85 L238.4 147.84 L238.57 147.85 L238.59 147.69 L238.62 147.53 L238.65 147.38 L238.7 147.23 L238.75 147.09 L238.8 146.96 L238.87 146.83 L238.94 146.71 L239.01 146.6 L239.09 146.49 L239.17 146.38 L239.26 146.28 L239.35 146.19 L239.44 146.1 L239.54 146.01 L239.64 145.92 L239.74 145.84 L239.85 145.77 L239.95 145.69 L240.06 145.62 L240.17 145.55 L240.28 145.48 L240.4 145.41 L240.51 145.35 L240.62 145.29 L240.74 145.23 L240.85 145.17 L240.97 145.11 L241.09 145.05 L241.2 145 L241.32 144.94 L241.44 144.89 L241.56 144.84 L241.68 144.78 L241.8 144.73 L241.92 144.68 L242.04 144.64 L242.16 144.59 L242.28 144.54 L242.4 144.5 L242.53 144.45 L242.65 144.41 L242.77 144.37 L242.9 144.33 L243.02 144.29 L243.14 144.25 L243.27 144.21 L243.39 144.18 L243.52 144.14 L243.64 144.11 L243.77 144.08 L243.9 144.04 L244.02 144.01 L244.15 143.99 L244.28 143.96 L244.4 143.93 L244.53 143.91 L244.66 143.89 L244.79 143.87 L244.92 143.85 L245.05 143.84 L245.18 143.83 L245.31 143.82 L245.44 143.81 L245.57 143.81 L245.7 143.82 L245.83 143.83 L245.96 143.84 L246.09 143.86 L246.22 143.89 L246.35 143.92 L246.48 143.97 L246.61 144.01 L246.74 144.07 L246.87 144.14 L247 144.21 L247.13 144.29 L247.25 144.38 L247.38 144.49 L247.5 144.6 L247.62 144.49 L247.75 144.38 L247.87 144.29 L248 144.21 L248.13 144.14 L248.26 144.07 L248.39 144.01 L248.52 143.97 L248.65 143.92 L248.78 143.89 L248.91 143.86 L249.04 143.84 L249.17 143.83 L249.3 143.82 L249.43 143.81 L249.56 143.81 L249.69 143.82 L249.82 143.83 L249.95 143.84 L250.08 143.85" fill="none" stroke="#9aa0aa" stroke-opacity="0.6" stroke-width="0.9"/>
<path d="M243.62 153.54 L242.14 151.64" stroke="#eceef2" stroke-width="2.8" stroke-linecap="round"/>
<path d="M725.24 205.9 A9.4 9.4 0 0 1 713.89 219.43" fill="none" stroke="#5848c4" stroke-width="0.8" opacity="0.75"/>
<path d="M708.27 213.81 A9.4 9.4 0 0 1 717.1 201.2" fill="none" stroke="#8c929c" stroke-opacity="0.6" stroke-width="0.9"/>
<path d="M717.1 206 L717.1 202" stroke="#eceef2" stroke-width="2.2" stroke-linecap="round"/>
<path d="M797.54 205.9 A9.4 9.4 0 0 1 786.19 219.43" fill="none" stroke="#4c4488" stroke-width="0.8" opacity="0.75"/>
<path d="M780.57 213.81 A9.4 9.4 0 0 1 789.4 201.2" fill="none" stroke="#8c929c" stroke-opacity="0.6" stroke-width="0.9"/>
<path d="M789.4 206 L789.4 202" stroke="#a4a8b0" stroke-width="2.2" stroke-linecap="round"/>
<path d="M258.79 336.94 L258.88 337.03 L258.97 337.13 L259.05 337.23 L259.14 337.33 L259.22 337.43 L259.3 337.53 L259.38 337.64 L259.45 337.74 L259.53 337.85 L259.61 337.95 L259.68 338.06 L259.75 338.17 L259.82 338.28 L259.9 338.38 L259.97 338.49 L260.04 338.6 L260.1 338.71 L260.17 338.83 L260.24 338.94 L260.3 339.05 L260.37 339.16 L260.43 339.28 L260.49 339.39 L260.56 339.5 L260.62 339.62 L260.68 339.74 L260.73 339.85 L260.79 339.97 L260.85 340.09 L260.9 340.2 L260.96 340.32 L261.01 340.44 L261.06 340.56 L261.11 340.68 L261.16 340.8 L261.21 340.92 L261.25 341.04 L261.3 341.17 L261.34 341.29 L261.38 341.41 L261.41 341.54 L261.45 341.66 L261.48 341.79 L261.5 341.92 L261.53 342.05 L261.54 342.18 L261.56 342.31 L261.57 342.44 L261.57 342.57 L261.57 342.7 L261.55 342.84 L261.54 342.98 L261.51 343.11 L261.48 343.25 L261.44 343.39 L261.39 343.53 L261.33 343.67 L261.26 343.81 L261.18 343.95 L261.09 344.09 L261.22 344.19 L261.34 344.29 L261.46 344.4 L261.56 344.51 L261.66 344.62 L261.74 344.74 L261.82 344.86 L261.89 344.98 L261.95 345.1 L262.01 345.22 L262.06 345.35 L262.1 345.47 L262.14 345.6 L262.17 345.73 L262.2 345.85 L262.22 345.98 L262.24 346.11 L262.25 346.24 L262.27 346.37 L262.27 346.5 L262.28 346.63 L262.28 346.76 L262.29 346.89 L262.28 347.02 L262.28 347.15 L262.28 347.28 L262.27 347.41 L262.26 347.54 L262.25 347.67 L262.24 347.8 L262.23 347.93 L262.22 348.06 L262.2 348.19 L262.19 348.32 L262.17 348.44 L262.15 348.57 L262.14 348.7 L262.12 348.83 L262.1 348.96 L262.07 349.09 L262.05 349.22 L262.03 349.34 L262 349.47 L261.97 349.6 L261.95 349.72 L261.92 349.85 L261.89 349.98 L261.86 350.1 L261.83 350.23 L261.79 350.36 L261.76 350.48 L261.72 350.61 L261.68 350.73 L261.65 350.86 L261.61 350.98 L261.56 351.1 L261.52 351.22 L261.48 351.35 L261.43 351.47 L261.38 351.59 L261.33 351.71 L261.27 351.82 L261.21 351.94 L261.15 352.06 L261.08 352.17 L261.02 352.28 L260.94 352.39 L260.86 352.49 L260.78 352.6 L260.69 352.7 L260.6 352.79 L260.5 352.89 L260.39 352.98 L260.27 353.06 L260.15 353.14 L260.03 353.21 L259.89 353.28 L259.75 353.34 L259.6 353.4 L259.44 353.45 L259.47 353.61 L259.5 353.77 L259.52 353.93 L259.53 354.08 L259.53 354.23 L259.52 354.37 L259.5 354.51 L259.48 354.65 L259.45 354.78 L259.41 354.91 L259.37 355.04 L259.32 355.16 L259.27 355.28 L259.21 355.4 L259.15 355.52 L259.09 355.63 L259.02 355.74 L258.95 355.85 L258.87 355.96 L258.79 356.06 L258.72 356.16 L258.63 356.27 L258.55 356.37 L258.47 356.47 L258.38 356.56 L258.29 356.66 L258.21 356.76 L258.12 356.85 L258.03 356.94 L257.94 357.04 L257.84 357.13 L257.75 357.22 L257.66 357.31 L257.56 357.4 L257.47 357.49 L257.37 357.57 L257.27 357.66 L257.18 357.75 L257.08 357.83 L256.98 357.91 L256.88 358 L256.78 358.08 L256.68 358.16 L256.57 358.24 L256.47 358.32 L256.37 358.4 L256.26 358.48 L256.16 358.55 L256.05 358.63 L255.95 358.71 L255.84 358.78 L255.73 358.85 L255.62 358.92 L255.51 358.99 L255.4 359.06 L255.29 359.13 L255.18 359.2 L255.07 359.26 L254.95 359.32 L254.84 359.38 L254.72 359.44 L254.6 359.49 L254.48 359.55 L254.36 359.59 L254.24 359.64 L254.12 359.68 L253.99 359.71 L253.86 359.75 L253.73 359.77 L253.6 359.79 L253.46 359.8 L253.33 359.81 L253.19 359.81 L253.05 359.8 L252.9 359.78 L252.76 359.76 L252.61 359.72 L252.46 359.68 L252.31 359.63 L252.15 359.56 L252.08 359.71 L252 359.85 L251.91 359.98 L251.82 360.1 L251.72 360.21 L251.62 360.32 L251.52 360.42 L251.42 360.51 L251.31 360.59 L251.2 360.67 L251.08 360.74 L250.97 360.8 L250.85 360.86 L250.73 360.91 L250.61 360.96 L250.48 361.01 L250.36 361.05 L250.23 361.08 L250.11 361.12 L249.98 361.15 L249.86 361.18 L249.73 361.2 L249.6 361.23 L249.47 361.25 L249.34 361.27 L249.22 361.29 L249.09 361.3 L248.96 361.32 L248.83 361.33 L248.7 361.34 L248.57 361.35 L248.44 361.36 L248.31 361.37 L248.18 361.38 L248.05 361.39 L247.92 361.39 L247.79 361.39 L247.66 361.4 L247.53 361.4 L247.4 361.4 L247.27 361.4 L247.14 361.4 L247.01 361.39 L246.88 361.39 L246.75 361.39 L246.62 361.38 L246.49 361.37 L246.36 361.36 L246.23 361.35 L246.1 361.34 L245.97 361.33 L245.84 361.32 L245.71 361.3 L245.58 361.29 L245.46 361.27 L245.33 361.25 L245.2 361.23 L245.07 361.2 L244.94 361.18 L244.82 361.15 L244.69 361.12 L244.57 361.08 L244.44 361.05 L244.32 361.01 L244.19 360.96 L244.07 360.91 L243.95 360.86 L243.83 360.8 L243.72 360.74 L243.6 360.67 L243.49 360.59 L243.38 360.51 L243.28 360.42 L243.18 360.32 L243.08 360.21 L242.98 360.1 L242.89 359.98 L242.8 359.85 L242.72 359.71 L242.65 359.56 L242.49 359.63 L242.34 359.68 L242.19 359.72 L242.04 359.76 L241.9 359.78 L241.75 359.8 L241.61 359.81 L241.47 359.81 L241.34 359.8 L241.2 359.79 L241.07 359.77 L240.94 359.75 L240.81 359.71 L240.68 359.68 L240.56 359.64 L240.44 359.59 L240.32 359.55 L240.2 359.49 L240.08 359.44 L239.96 359.38 L239.85 359.32 L239.73 359.26 L239.62 359.2 L239.51 359.13 L239.4 359.06 L239.29 358.99 L239.18 358.92 L239.07 358.85 L238.96 358.78 L238.85 358.71" fill="none" stroke="#6a55d8" stroke-width="1.0"/>
<path d="M235.36 353.45 L235.2 353.4 L235.05 353.34 L234.91 353.28 L234.77 353.21 L234.65 353.14 L234.53 353.06 L234.41 352.98 L234.3 352.89 L234.2 352.79 L234.11 352.7 L234.02 352.6 L233.94 352.49 L233.86 352.39 L233.78 352.28 L233.72 352.17 L233.65 352.06 L233.59 351.94 L233.53 351.82 L233.47 351.71 L233.42 351.59 L233.37 351.47 L233.32 351.35 L233.28 351.22 L233.24 351.1 L233.19 350.98 L233.15 350.86 L233.12 350.73 L233.08 350.61 L233.04 350.48 L233.01 350.36 L232.97 350.23 L232.94 350.1 L232.91 349.98 L232.88 349.85 L232.85 349.72 L232.83 349.6 L232.8 349.47 L232.77 349.34 L232.75 349.22 L232.73 349.09 L232.7 348.96 L232.68 348.83 L232.66 348.7 L232.65 348.57 L232.63 348.44 L232.61 348.32 L232.6 348.19 L232.58 348.06 L232.57 347.93 L232.56 347.8 L232.55 347.67 L232.54 347.54 L232.53 347.41 L232.52 347.28 L232.52 347.15 L232.52 347.02 L232.51 346.89 L232.52 346.76 L232.52 346.63 L232.53 346.5 L232.53 346.37 L232.55 346.24 L232.56 346.11 L232.58 345.98 L232.6 345.85 L232.63 345.73 L232.66 345.6 L232.7 345.47 L232.74 345.35 L232.79 345.22 L232.85 345.1 L232.91 344.98 L232.98 344.86 L233.06 344.74 L233.14 344.62 L233.24 344.51 L233.34 344.4 L233.46 344.29 L233.58 344.19 L233.71 344.09 L233.62 343.95 L233.54 343.81 L233.47 343.67 L233.41 343.53 L233.36 343.39 L233.32 343.25 L233.29 343.11 L233.26 342.98 L233.25 342.84 L233.23 342.7 L233.23 342.57 L233.23 342.44 L233.24 342.31 L233.26 342.18 L233.27 342.05 L233.3 341.92 L233.32 341.79 L233.35 341.66 L233.39 341.54 L233.42 341.41 L233.46 341.29 L233.5 341.17 L233.55 341.04 L233.59 340.92 L233.64 340.8 L233.69 340.68 L233.74 340.56 L233.79 340.44 L233.84 340.32 L233.9 340.2 L233.95 340.09 L234.01 339.97 L234.07 339.85 L234.12 339.74 L234.18 339.62 L234.24 339.5 L234.31 339.39 L234.37 339.28 L234.43 339.16 L234.5 339.05 L234.56 338.94 L234.63 338.83 L234.7 338.71 L234.76 338.6 L234.83 338.49 L234.9 338.38 L234.98 338.28 L235.05 338.17 L235.12 338.06 L235.19 337.95 L235.27 337.85 L235.35 337.74 L235.42 337.64 L235.5 337.53 L235.58 337.43 L235.66 337.33 L235.75 337.23 L235.83 337.13 L235.92 337.03 L236.01 336.94 L236.1 336.84 L236.19 336.75 L236.28 336.66 L236.38 336.58 L236.48 336.49 L236.58 336.41 L236.69 336.34 L236.8 336.26 L236.91 336.19 L237.03 336.13 L237.15 336.07 L237.28 336.02 L237.41 335.97 L237.55 335.93 L237.69 335.9 L237.83 335.87 L237.98 335.86 L238.14 335.85 L238.3 335.84 L238.47 335.85 L238.49 335.69 L238.52 335.53 L238.55 335.38 L238.6 335.23 L238.65 335.09 L238.7 334.96 L238.77 334.83 L238.84 334.71 L238.91 334.6 L238.99 334.49 L239.07 334.38 L239.16 334.28 L239.25 334.19 L239.34 334.1 L239.44 334.01 L239.54 333.92 L239.64 333.84 L239.75 333.77 L239.85 333.69 L239.96 333.62 L240.07 333.55 L240.18 333.48 L240.3 333.41 L240.41 333.35 L240.52 333.29 L240.64 333.23 L240.75 333.17 L240.87 333.11 L240.99 333.05 L241.1 333 L241.22 332.94 L241.34 332.89 L241.46 332.84 L241.58 332.78 L241.7 332.73 L241.82 332.68 L241.94 332.64 L242.06 332.59 L242.18 332.54 L242.3 332.5 L242.43 332.45 L242.55 332.41 L242.67 332.37 L242.8 332.33 L242.92 332.29 L243.04 332.25 L243.17 332.21 L243.29 332.18 L243.42 332.14 L243.54 332.11 L243.67 332.08 L243.8 332.04 L243.92 332.01 L244.05 331.99 L244.18 331.96 L244.3 331.93 L244.43 331.91 L244.56 331.89 L244.69 331.87 L244.82 331.85 L244.95 331.84 L245.08 331.83 L245.21 331.82 L245.34 331.81 L245.47 331.81 L245.6 331.82 L245.73 331.83 L245.86 331.84 L245.99 331.86 L246.12 331.89 L246.25 331.92 L246.38 331.97 L246.51 332.01 L246.64 332.07 L246.77 332.14 L246.9 332.21 L247.03 332.29 L247.15 332.38 L247.28 332.49 L247.4 332.6 L247.52 332.49 L247.65 332.38 L247.77 332.29 L247.9 332.21 L248.03 332.14 L248.16 332.07 L248.29 332.01 L248.42 331.97 L248.55 331.92 L248.68 331.89 L248.81 331.86 L248.94 331.84 L249.07 331.83 L249.2 331.82 L249.33 331.81 L249.46 331.81 L249.59 331.82 L249.72 331.83 L249.85 331.84 L249.98 331.85" fill="none" stroke="#9aa0aa" stroke-opacity="0.6" stroke-width="0.9"/>
<path d="M247.4 340.2 L247.4 337.8" stroke="#eceef2" stroke-width="2.8" stroke-linecap="round"/>
<path d="M388.79 313.5 A20.2 20.2 0 0 1 364.39 342.58" fill="none" stroke="#4c4488" stroke-width="0.9" opacity="1"/>
<path d="M352.32 330.51 A20.2 20.2 0 0 1 371.3 303.4" fill="none" stroke="#8c929c" stroke-opacity="0.6" stroke-width="0.9"/>
<path d="M362.45 332.14 L360.65 333.88" stroke="#a4a8b0" stroke-width="2.9" stroke-linecap="round"/>
<path d="M518.09 313.4 A20.2 20.2 0 0 1 493.69 342.48" fill="none" stroke="#5848c4" stroke-width="0.9" opacity="1"/>
<path d="M481.62 330.41 A20.2 20.2 0 0 1 500.6 303.3" fill="none" stroke="#8c929c" stroke-opacity="0.6" stroke-width="0.9"/>
<path d="M496.9 311.77 L496.15 309.38" stroke="#eceef2" stroke-width="2.9" stroke-linecap="round"/>
<path d="M647.19 313.5 A20.2 20.2 0 0 1 622.79 342.58" fill="none" stroke="#5848c4" stroke-width="0.9" opacity="1"/>
<path d="M610.72 330.51 A20.2 20.2 0 0 1 629.7 303.4" fill="none" stroke="#8c929c" stroke-opacity="0.6" stroke-width="0.9"/>
<path d="M639.52 316.2 L641.52 314.69" stroke="#eceef2" stroke-width="2.9" stroke-linecap="round"/>
<path d="M764.59 336.74 L764.68 336.83 L764.77 336.93 L764.85 337.03 L764.94 337.13 L765.02 337.23 L765.1 337.33 L765.18 337.44 L765.25 337.54 L765.33 337.65 L765.41 337.75 L765.48 337.86 L765.55 337.97 L765.62 338.08 L765.7 338.18 L765.77 338.29 L765.84 338.4 L765.9 338.51 L765.97 338.63 L766.04 338.74 L766.1 338.85 L766.17 338.96 L766.23 339.08 L766.29 339.19 L766.36 339.3 L766.42 339.42 L766.48 339.54 L766.53 339.65 L766.59 339.77 L766.65 339.89 L766.7 340 L766.76 340.12 L766.81 340.24 L766.86 340.36 L766.91 340.48 L766.96 340.6 L767.01 340.72 L767.05 340.84 L767.1 340.97 L767.14 341.09 L767.18 341.21 L767.21 341.34 L767.25 341.46 L767.28 341.59 L767.3 341.72 L767.33 341.85 L767.34 341.98 L767.36 342.11 L767.37 342.24 L767.37 342.37 L767.37 342.5 L767.35 342.64 L767.34 342.78 L767.31 342.91 L767.28 343.05 L767.24 343.19 L767.19 343.33 L767.13 343.47 L767.06 343.61 L766.98 343.75 L766.89 343.89 L767.02 343.99 L767.14 344.09 L767.26 344.2 L767.36 344.31 L767.46 344.42 L767.54 344.54 L767.62 344.66 L767.69 344.78 L767.75 344.9 L767.81 345.02 L767.86 345.15 L767.9 345.27 L767.94 345.4 L767.97 345.53 L768 345.65 L768.02 345.78 L768.04 345.91 L768.05 346.04 L768.07 346.17 L768.07 346.3 L768.08 346.43 L768.08 346.56 L768.09 346.69 L768.08 346.82 L768.08 346.95 L768.08 347.08 L768.07 347.21 L768.06 347.34 L768.05 347.47 L768.04 347.6 L768.03 347.73 L768.02 347.86 L768 347.99 L767.99 348.12 L767.97 348.24 L767.95 348.37 L767.94 348.5 L767.92 348.63 L767.9 348.76 L767.87 348.89 L767.85 349.02 L767.83 349.14 L767.8 349.27 L767.77 349.4 L767.75 349.52 L767.72 349.65 L767.69 349.78 L767.66 349.9 L767.63 350.03 L767.59 350.16 L767.56 350.28 L767.52 350.41 L767.48 350.53 L767.45 350.66 L767.41 350.78 L767.36 350.9 L767.32 351.02 L767.28 351.15 L767.23 351.27 L767.18 351.39 L767.13 351.51 L767.07 351.62 L767.01 351.74 L766.95 351.86 L766.88 351.97 L766.82 352.08 L766.74 352.19 L766.66 352.29 L766.58 352.4 L766.49 352.5 L766.4 352.59 L766.3 352.69 L766.19 352.78 L766.07 352.86 L765.95 352.94 L765.83 353.01 L765.69 353.08 L765.55 353.14 L765.4 353.2 L765.24 353.25 L765.27 353.41 L765.3 353.57 L765.32 353.73 L765.33 353.88 L765.33 354.03 L765.32 354.17 L765.3 354.31 L765.28 354.45 L765.25 354.58 L765.21 354.71 L765.17 354.84 L765.12 354.96 L765.07 355.08 L765.01 355.2 L764.95 355.32 L764.89 355.43 L764.82 355.54 L764.75 355.65 L764.67 355.76 L764.59 355.86 L764.52 355.96 L764.43 356.07 L764.35 356.17 L764.27 356.27 L764.18 356.36 L764.09 356.46 L764.01 356.56 L763.92 356.65 L763.83 356.74 L763.74 356.84 L763.64 356.93 L763.55 357.02 L763.46 357.11 L763.36 357.2 L763.27 357.29 L763.17 357.37 L763.07 357.46 L762.98 357.55 L762.88 357.63 L762.78 357.71 L762.68 357.8 L762.58 357.88 L762.48 357.96 L762.37 358.04 L762.27 358.12 L762.17 358.2 L762.06 358.28 L761.96 358.35 L761.85 358.43 L761.75 358.51 L761.64 358.58 L761.53 358.65 L761.42 358.72 L761.31 358.79 L761.2 358.86 L761.09 358.93 L760.98 359 L760.87 359.06 L760.75 359.12 L760.64 359.18 L760.52 359.24 L760.4 359.29 L760.28 359.35 L760.16 359.39 L760.04 359.44 L759.92 359.48 L759.79 359.51 L759.66 359.55 L759.53 359.57 L759.4 359.59 L759.26 359.6 L759.13 359.61 L758.99 359.61 L758.85 359.6 L758.7 359.58 L758.56 359.56 L758.41 359.52 L758.26 359.48 L758.11 359.43 L757.95 359.36 L757.88 359.51 L757.8 359.65 L757.71 359.78 L757.62 359.9 L757.52 360.01 L757.42 360.12 L757.32 360.22 L757.22 360.31 L757.11 360.39 L757 360.47 L756.88 360.54 L756.77 360.6 L756.65 360.66 L756.53 360.71 L756.41 360.76 L756.28 360.81 L756.16 360.85 L756.03 360.88 L755.91 360.92 L755.78 360.95 L755.66 360.98 L755.53 361 L755.4 361.03 L755.27 361.05 L755.14 361.07 L755.02 361.09 L754.89 361.1 L754.76 361.12 L754.63 361.13 L754.5 361.14 L754.37 361.15 L754.24 361.16 L754.11 361.17 L753.98 361.18 L753.85 361.19 L753.72 361.19 L753.59 361.19 L753.46 361.2 L753.33 361.2 L753.2 361.2 L753.07 361.2 L752.94 361.2 L752.81 361.19 L752.68 361.19 L752.55 361.19 L752.42 361.18 L752.29 361.17 L752.16 361.16 L752.03 361.15 L751.9 361.14 L751.77 361.13 L751.64 361.12 L751.51 361.1 L751.38 361.09 L751.26 361.07 L751.13 361.05 L751 361.03 L750.87 361 L750.74 360.98 L750.62 360.95 L750.49 360.92 L750.37 360.88 L750.24 360.85 L750.12 360.81 L749.99 360.76 L749.87 360.71 L749.75 360.66 L749.63 360.6 L749.52 360.54 L749.4 360.47 L749.29 360.39 L749.18 360.31 L749.08 360.22 L748.98 360.12 L748.88 360.01 L748.78 359.9 L748.69 359.78 L748.6 359.65 L748.52 359.51 L748.45 359.36 L748.29 359.43 L748.14 359.48 L747.99 359.52 L747.84 359.56 L747.7 359.58 L747.55 359.6 L747.41 359.61 L747.27 359.61 L747.14 359.6 L747 359.59 L746.87 359.57 L746.74 359.55 L746.61 359.51 L746.48 359.48 L746.36 359.44 L746.24 359.39 L746.12 359.35 L746 359.29 L745.88 359.24 L745.76 359.18 L745.65 359.12 L745.53 359.06 L745.42 359 L745.31 358.93 L745.2 358.86 L745.09 358.79 L744.98 358.72 L744.87 358.65 L744.76 358.58 L744.65 358.51" fill="none" stroke="#6a55d8" stroke-width="1.0"/>
<path d="M741.16 353.25 L741 353.2 L740.85 353.14 L740.71 353.08 L740.57 353.01 L740.45 352.94 L740.33 352.86 L740.21 352.78 L740.1 352.69 L740 352.59 L739.91 352.5 L739.82 352.4 L739.74 352.29 L739.66 352.19 L739.58 352.08 L739.52 351.97 L739.45 351.86 L739.39 351.74 L739.33 351.62 L739.27 351.51 L739.22 351.39 L739.17 351.27 L739.12 351.15 L739.08 351.02 L739.04 350.9 L738.99 350.78 L738.95 350.66 L738.92 350.53 L738.88 350.41 L738.84 350.28 L738.81 350.16 L738.77 350.03 L738.74 349.9 L738.71 349.78 L738.68 349.65 L738.65 349.52 L738.63 349.4 L738.6 349.27 L738.57 349.14 L738.55 349.02 L738.53 348.89 L738.5 348.76 L738.48 348.63 L738.46 348.5 L738.45 348.37 L738.43 348.24 L738.41 348.12 L738.4 347.99 L738.38 347.86 L738.37 347.73 L738.36 347.6 L738.35 347.47 L738.34 347.34 L738.33 347.21 L738.32 347.08 L738.32 346.95 L738.32 346.82 L738.31 346.69 L738.32 346.56 L738.32 346.43 L738.33 346.3 L738.33 346.17 L738.35 346.04 L738.36 345.91 L738.38 345.78 L738.4 345.65 L738.43 345.53 L738.46 345.4 L738.5 345.27 L738.54 345.15 L738.59 345.02 L738.65 344.9 L738.71 344.78 L738.78 344.66 L738.86 344.54 L738.94 344.42 L739.04 344.31 L739.14 344.2 L739.26 344.09 L739.38 343.99 L739.51 343.89 L739.42 343.75 L739.34 343.61 L739.27 343.47 L739.21 343.33 L739.16 343.19 L739.12 343.05 L739.09 342.91 L739.06 342.78 L739.05 342.64 L739.03 342.5 L739.03 342.37 L739.03 342.24 L739.04 342.11 L739.06 341.98 L739.07 341.85 L739.1 341.72 L739.12 341.59 L739.15 341.46 L739.19 341.34 L739.22 341.21 L739.26 341.09 L739.3 340.97 L739.35 340.84 L739.39 340.72 L739.44 340.6 L739.49 340.48 L739.54 340.36 L739.59 340.24 L739.64 340.12 L739.7 340 L739.75 339.89 L739.81 339.77 L739.87 339.65 L739.92 339.54 L739.98 339.42 L740.04 339.3 L740.11 339.19 L740.17 339.08 L740.23 338.96 L740.3 338.85 L740.36 338.74 L740.43 338.63 L740.5 338.51 L740.56 338.4 L740.63 338.29 L740.7 338.18 L740.78 338.08 L740.85 337.97 L740.92 337.86 L740.99 337.75 L741.07 337.65 L741.15 337.54 L741.22 337.44 L741.3 337.33 L741.38 337.23 L741.46 337.13 L741.55 337.03 L741.63 336.93 L741.72 336.83 L741.81 336.74 L741.9 336.64 L741.99 336.55 L742.08 336.46 L742.18 336.38 L742.28 336.29 L742.38 336.21 L742.49 336.14 L742.6 336.06 L742.71 335.99 L742.83 335.93 L742.95 335.87 L743.08 335.82 L743.21 335.77 L743.35 335.73 L743.49 335.7 L743.63 335.67 L743.78 335.66 L743.94 335.65 L744.1 335.64 L744.27 335.65 L744.29 335.49 L744.32 335.33 L744.35 335.18 L744.4 335.03 L744.45 334.89 L744.5 334.76 L744.57 334.63 L744.64 334.51 L744.71 334.4 L744.79 334.29 L744.87 334.18 L744.96 334.08 L745.05 333.99 L745.14 333.9 L745.24 333.81 L745.34 333.72 L745.44 333.64 L745.55 333.57 L745.65 333.49 L745.76 333.42 L745.87 333.35 L745.98 333.28 L746.1 333.21 L746.21 333.15 L746.32 333.09 L746.44 333.03 L746.55 332.97 L746.67 332.91 L746.79 332.85 L746.9 332.8 L747.02 332.74 L747.14 332.69 L747.26 332.64 L747.38 332.58 L747.5 332.53 L747.62 332.48 L747.74 332.44 L747.86 332.39 L747.98 332.34 L748.1 332.3 L748.23 332.25 L748.35 332.21 L748.47 332.17 L748.6 332.13 L748.72 332.09 L748.84 332.05 L748.97 332.01 L749.09 331.98 L749.22 331.94 L749.34 331.91 L749.47 331.88 L749.6 331.84 L749.72 331.81 L749.85 331.79 L749.98 331.76 L750.1 331.73 L750.23 331.71 L750.36 331.69 L750.49 331.67 L750.62 331.65 L750.75 331.64 L750.88 331.63 L751.01 331.62 L751.14 331.61 L751.27 331.61 L751.4 331.62 L751.53 331.63 L751.66 331.64 L751.79 331.66 L751.92 331.69 L752.05 331.72 L752.18 331.77 L752.31 331.81 L752.44 331.87 L752.57 331.94 L752.7 332.01 L752.83 332.09 L752.95 332.18 L753.08 332.29 L753.2 332.4 L753.32 332.29 L753.45 332.18 L753.57 332.09 L753.7 332.01 L753.83 331.94 L753.96 331.87 L754.09 331.81 L754.22 331.77 L754.35 331.72 L754.48 331.69 L754.61 331.66 L754.74 331.64 L754.87 331.63 L755 331.62 L755.13 331.61 L755.26 331.61 L755.39 331.62 L755.52 331.63 L755.65 331.64 L755.78 331.65" fill="none" stroke="#9aa0aa" stroke-opacity="0.6" stroke-width="0.9"/>
<path d="M748.67 350.68 L746.94 352.34" stroke="#eceef2" stroke-width="2.8" stroke-linecap="round"/><text transform="translate(214.8 71.8) scale(0.8798 1)" x="-0" y="0" font-size="11.01" fill="#a4a9b6" font-weight="normal" stroke="#a4a9b6" stroke-width="0.3" textLength="90.02" lengthAdjust="spacing">HYBRID FILTER</text>
<text transform="translate(475.6 71.9) scale(0.8650 1)" x="-0" y="0" font-size="11.74" fill="#ffffff" font-weight="bold" textLength="57.46" lengthAdjust="spacing">DEFAULT</text>
<text x="720.1" y="71.1" font-size="9.42" fill="#c4c8d4" font-weight="normal" stroke="#c4c8d4" stroke-width="0.7" textLength="50.4" lengthAdjust="spacing">MINIMΛL</text>
<text x="775.6" y="71.1" font-size="9.42" fill="#c4c8d4" font-weight="normal" textLength="36" lengthAdjust="spacing">ΛUDIO</text>
<text transform="translate(346.5 73.7) scale(0.6844 1)" x="-0" y="0" font-size="17.25" fill="#f2c200" font-weight="bold" textLength="10.52" lengthAdjust="spacing">?</text>
<text transform="translate(208 100.1) scale(0.7927 1)" x="-0" y="0" font-size="10.29" fill="#e6e8ee" font-weight="normal" stroke="#e6e8ee" stroke-width="0.3" textLength="101.18" lengthAdjust="spacing">LOW CROSSOVER</text>
<text transform="translate(221.5 195.5) scale(0.8780 1)" x="-0" y="0" font-size="10" fill="#e6e8ee" font-weight="normal" stroke="#e6e8ee" stroke-width="0.3" textLength="58.08" lengthAdjust="spacing">LOW BAND</text>
<text transform="translate(218 225.6) scale(0.9034 1)" x="-0" y="0" font-size="9.57" fill="#ffffff" font-weight="normal" stroke="#ffffff" stroke-width="0.3" textLength="65.86" lengthAdjust="spacing">MONO LOWS</text>
<text transform="translate(476.6 101.5) scale(0.8187 1)" x="-0" y="0" font-size="9.57" fill="#d8dbe2" font-weight="normal" stroke="#d8dbe2" stroke-width="0.3" textLength="57.16" lengthAdjust="spacing">COMB NEG</text>
<text transform="translate(727.8 100.1) scale(0.7934 1)" x="-0" y="0" font-size="10.29" fill="#e6e8ee" font-weight="normal" stroke="#e6e8ee" stroke-width="0.3" textLength="63.02" lengthAdjust="spacing">FOLLOWER</text>
<text transform="translate(713.5 126.3) scale(0.8678 1)" x="-0" y="0" font-size="9.86" fill="#a3aac2" font-weight="normal" stroke="#a3aac2" stroke-width="0.3" textLength="40.91" lengthAdjust="spacing">ATTACK</text>
<text transform="translate(755.5 126.3) scale(0.8820 1)" x="-0" y="0" font-size="9.86" fill="#ffffff" font-weight="bold" textLength="40.25" lengthAdjust="spacing">5.00 ms</text>
<text transform="translate(713 145.3) scale(0.7968 1)" x="-0" y="0" font-size="9.86" fill="#a3aac2" font-weight="normal" stroke="#a3aac2" stroke-width="0.3" textLength="49.95" lengthAdjust="spacing">RELEASE</text>
<text transform="translate(759 145.3) scale(0.8830 1)" x="-0" y="0" font-size="9.86" fill="#ffffff" font-weight="bold" textLength="36.81" lengthAdjust="spacing">250 ms</text>
<text transform="translate(721.9 176.9) scale(0.8649 1)" x="-0" y="0" font-size="10" fill="#e6e8ee" font-weight="normal" stroke="#e6e8ee" stroke-width="0.3" textLength="72.14" lengthAdjust="spacing">MODULATION</text>
<text transform="translate(688.8 238.9) scale(0.9092 1)" x="-0" y="0" font-size="8.55" fill="#e6e8ee" font-weight="normal" stroke="#e6e8ee" stroke-width="0.3" textLength="62.8" lengthAdjust="spacing">CUTOFF MOD</text>
<text transform="translate(762.8 238.9) scale(0.9071 1)" x="-0" y="0" font-size="8.55" fill="#a8aebb" font-weight="normal" stroke="#a8aebb" stroke-width="0.3" textLength="59.42" lengthAdjust="spacing">MORPH MOD</text>
<text transform="translate(229 383.4) scale(0.7695 1)" x="-0" y="0" font-size="10.43" fill="#e6e8ee" font-weight="normal" stroke="#e6e8ee" stroke-width="0.3" textLength="46.79" lengthAdjust="spacing">SPREAD</text>
<text transform="translate(354 368.1) scale(0.8701 1)" x="-0" y="0" font-size="9.86" fill="#b4b9c4" font-weight="normal" stroke="#b4b9c4" stroke-width="0.3" textLength="39.42" lengthAdjust="spacing">MORPH</text>
<text transform="translate(482.2 368) scale(0.8113 1)" x="-0" y="0" font-size="10.43" fill="#e6e8ee" font-weight="normal" stroke="#e6e8ee" stroke-width="0.3" textLength="45.85" lengthAdjust="spacing">CUTOFF</text>
<text transform="translate(600.4 368) scale(0.7778 1)" x="-0" y="0" font-size="10.72" fill="#e6e8ee" font-weight="normal" stroke="#e6e8ee" stroke-width="0.3" textLength="74.06" lengthAdjust="spacing">RESONANCE</text>
<text transform="translate(488.5 393.5) scale(0.8009 1)" x="-0" y="0" font-size="10.14" fill="#e6e8ee" font-weight="normal" stroke="#e6e8ee" stroke-width="0.3" textLength="29.84" lengthAdjust="spacing">TUNE</text>
<text transform="translate(730 383.4) scale(0.8306 1)" x="-0" y="0" font-size="10.72" fill="#e6e8ee" font-weight="normal" stroke="#e6e8ee" stroke-width="0.3" textLength="55.38" lengthAdjust="spacing">AMP MOD</text>
<text transform="translate(234 439.6) scale(0.9200 1)" x="-0" y="0" font-size="8.41" fill="#d8dce4" font-weight="normal" stroke="#d8dce4" stroke-width="0.3" textLength="27.83" lengthAdjust="spacing">INPUT</text>
<text transform="translate(734.6 439.7) scale(0.9305 1)" x="-0" y="0" font-size="8.55" fill="#d8dce4" font-weight="normal" stroke="#d8dce4" stroke-width="0.3" textLength="38.37" lengthAdjust="spacing">OUTPUT</text>
<text transform="translate(393.4 434.4) scale(0.8199 1)" x="-0" y="0" font-size="8.7" fill="#e6e8ee" font-weight="normal" stroke="#e6e8ee" stroke-width="0.3" textLength="19.64" lengthAdjust="spacing">DRY</text>
<text transform="translate(592.6 434.4) scale(0.8703 1)" x="-0" y="0" font-size="8.7" fill="#e6e8ee" font-weight="normal" stroke="#e6e8ee" stroke-width="0.3" textLength="20.68" lengthAdjust="spacing">WET</text></svg>
</body></html>
